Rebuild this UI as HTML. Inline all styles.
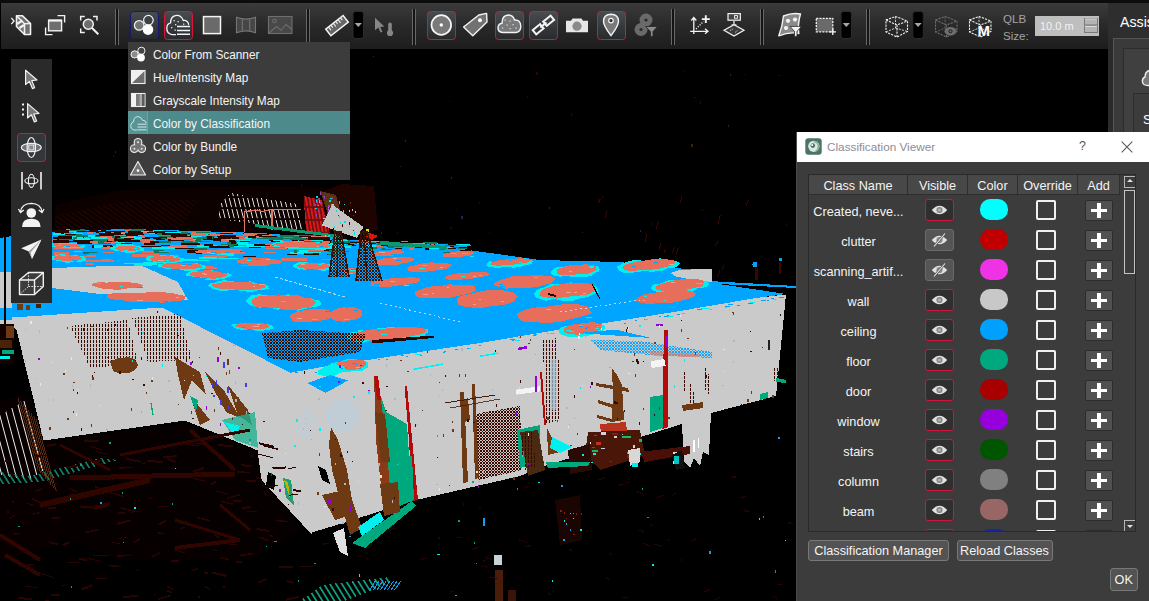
<!DOCTYPE html>
<html>
<head>
<meta charset="utf-8">
<title>Classification Viewer</title>
<style>
html,body{margin:0;padding:0;background:#000;}
body{width:1149px;height:601px;position:relative;overflow:hidden;font-family:"Liberation Sans",sans-serif;font-size:12px;color:#f0f0f0;}
.abs{position:absolute;}
#scene{position:absolute;left:0;top:0;width:1149px;height:601px;}
#topstrip{left:0;top:0;width:1149px;height:3px;background:#0c0c0c;}
#toolbar{left:1px;top:3px;width:1107px;height:46px;background:linear-gradient(#3b3b3b,#2a2a2a 45%,#1d1d1d);}
.tb{position:absolute;top:8px;width:28px;height:28px;border:1px solid transparent;border-radius:3px;}
.tb.on{border-color:#d8143c;background:linear-gradient(#3a3c40,#26282b);}
.tb.nav{border-color:#1c1c74;background:linear-gradient(#3a3c40,#26282b);}
.tb svg{position:absolute;left:0;top:0;width:28px;height:28px;}
.sep{position:absolute;top:6px;width:1px;height:37px;background:#5a5a5a;box-shadow:2px 0 0 #5a5a5a;}
.dd{position:absolute;top:8px;width:9px;height:29px;background:#000;border:1px solid #151515;border-radius:3px;}
.dd:after{content:"";position:absolute;left:1px;top:12px;border:3.5px solid transparent;border-top:4px solid #d0d0d0;}
#menu{left:128px;top:42px;width:222px;height:138px;background:#3c3c3c;}
#menu .it{position:absolute;left:0;width:222px;height:23px;line-height:23px;}
#menu .it span{position:absolute;left:24.5px;top:1.5px;font-size:12.7px;letter-spacing:0;display:inline-block;transform:scaleX(0.932);transform-origin:0 50%;color:#f4f4f4;white-space:nowrap;}
#menu .it.hl{background:#4c8a8c;}
#menu .it svg{position:absolute;left:1px;top:2px;width:19px;height:19px;}
#palette{left:11px;top:59px;width:41px;height:244px;background:#2a2a2a;}
#palette .pi{position:absolute;left:5px;width:28px;height:28px;border:1px solid transparent;border-radius:3px;}
#palette .pi.on{border-color:#d8143c;background:#303236;}
#palette svg{position:absolute;left:0;top:0;width:28px;height:28px;}
#rpanel{left:1108px;top:3px;width:41px;height:598px;background:#2b2b2b;}
#dialog{left:796px;top:132px;width:353px;height:469px;background:#3c3c3c;border-left:1px solid #4a4a4a;box-sizing:border-box;}
#dtitle{left:0;top:0;width:353px;height:30px;background:#fff;}
#dtitle .t{position:absolute;left:30px;top:0;line-height:30px;font-size:11.75px;color:#8c8c98;white-space:nowrap;}
#table{left:11px;top:42px;width:328px;height:358px;border:1px solid #2a2a2a;box-sizing:border-box;overflow:hidden;background:#3c3c3c;}
.th{position:absolute;top:0;height:20px;line-height:23px;background:#484848;border-right:1px solid #2e2e2e;border-bottom:1px solid #2e2e2e;text-align:center;font-size:12.7px;color:#f4f4f4;box-sizing:border-box;}
.row{position:absolute;left:0;width:312px;height:30px;}
.row .nm{position:absolute;left:0;width:99px;top:0;line-height:32px;text-align:center;font-size:12.7px;color:#f4f4f4;white-space:nowrap;}
.row .vis{position:absolute;left:115.5px;top:3px;width:27.5px;height:20px;border:1px solid #d0143c;border-radius:3px;background:#2f2f2f;}
.row .vis.off{border-color:#6a6a6a;background:#555;}
.row .vis svg{position:absolute;left:4px;top:3px;width:19px;height:14px;}
.row .sw{position:absolute;left:171px;top:3px;width:28px;height:21px;border-radius:10px;}
.row .cb{position:absolute;left:227px;top:4px;width:16px;height:16px;border:2px solid #f0f0f0;border-radius:2px;}
.row .add{position:absolute;left:275.5px;top:3.5px;width:26.5px;height:19.5px;border:1px solid #2c2c2c;border-radius:2px;background:#515151;}
.row .add:before{content:"";position:absolute;left:5.5px;top:8px;width:15.5px;height:3.6px;background:#fff;}
.row .add:after{content:"";position:absolute;left:11.5px;top:2.3px;width:3.6px;height:15px;background:#fff;}
.btn{position:absolute;height:19px;line-height:19px;border:1px solid #787878;border-radius:3px;background:#535353;font-size:12.7px;color:#f4f4f4;text-align:center;white-space:nowrap;}
</style>
</head>
<body>
<svg id="scene" viewBox="0 0 1149 601" shape-rendering="crispEdges">
<rect width="1149" height="601" fill="#000"/>
<defs>
<pattern id="dots" width="3" height="4" patternUnits="userSpaceOnUse"><rect x="0" y="0" width="1.2" height="2.6" fill="#3a0a00"/></pattern>
<pattern id="dots2" width="3" height="3" patternUnits="userSpaceOnUse"><rect x="0" y="0" width="2.2" height="1.6" fill="#3a0a00"/><rect x="1.5" y="1.6" width="1.5" height="1.2" fill="#3a0a00"/></pattern>
<pattern id="dotsb" width="3" height="3" patternUnits="userSpaceOnUse"><rect width="3" height="3" fill="#c8c8c8"/><rect x="0" y="0" width="2" height="1.6" fill="#1aa4f6"/><rect x="1.5" y="1.6" width="1.5" height="1.2" fill="#1aa4f6"/></pattern>
<pattern id="hatchr" width="4" height="4" patternUnits="userSpaceOnUse" patternTransform="rotate(35)"><rect width="4" height="4" fill="#000"/><rect width="4" height="1.6" fill="#3a0600"/></pattern>
<pattern id="fence" width="4.6" height="11" patternUnits="userSpaceOnUse" patternTransform="skewX(14)"><rect x="0" y="0" width="1.3" height="9" fill="#f0f0f0"/></pattern>
<pattern id="fencer" width="3.6" height="13" patternUnits="userSpaceOnUse" patternTransform="skewX(10)"><rect x="0" y="0" width="1.6" height="11" fill="#e01818"/></pattern>
<pattern id="fence2" width="7" height="40" patternUnits="userSpaceOnUse" patternTransform="skewX(15)"><rect x="0" y="0" width="1.4" height="40" fill="#f0f0f0"/></pattern>
<pattern id="fence3" width="6" height="40" patternUnits="userSpaceOnUse" patternTransform="skewX(32)"><rect x="0" y="0" width="1.6" height="40" fill="#10a080"/></pattern>
<pattern id="mesh" width="3" height="3" patternUnits="userSpaceOnUse"><rect x="0" y="0" width="1.6" height="1.6" fill="#3a1205"/><rect x="1.6" y="1.6" width="1.4" height="1.4" fill="#3a1205"/></pattern>
</defs>
<polygon points="55,205 120,190 250,186 330,188 372,200 378,236 260,232 130,229 55,232" fill="#0d0100"/>
<polygon points="55,215 130,200 200,200 180,228 55,232" fill="url(#hatchr)" opacity="0.35"/>
<polygon points="60,440 185,424 258,452 300,530 250,560 120,560 20,520 0,470 0,440" fill="#070000"/>
<polygon points="0,238 12,236 52,231 130,229 260,233 380,242 447,247 540,260 620,262 670,268 712,270 712,283 786,294 756,298 706,306.5 680,311 602,323.5 557,330 480,343 400,355 322,367 290,373 162,308 12,318 0,320" fill="#00a5ff"/>
<polygon points="700,280.5 796,286 796,288 700,283" fill="#00a5ff"/>
<polygon points="670,273 680,270 711.5,268.5 711.5,282 700,281.5 676,276.5" fill="#cacaca"/>
<polygon points="0,320 12,318 162,308 290,373 311,533 262,480 258,450 185,420 44,440 17,330 10,322 0,322" fill="#cacaca" stroke="#cacaca" stroke-width="1"/>
<polygon points="289,373 322,367 400,355 480,343 557,330 602,323.5 680,311 706,306.5 756,298 786,294.5 776,396 711,413 709,455 703,452 700,466 694,458 690,468 684,462 682,424 647,435 547,465 520,476 412,501 340,524 310,533" fill="#cacaca"/>
<polygon points="52,268 140,265 178,282 188,300 150,296 100,294 52,288" fill="#cacaca"/>
<rect x="0" y="272" width="12" height="36" fill="#cacaca"/>
<rect x="0" y="308" width="12" height="12" fill="#00a5ff"/>
<rect x="0" y="320" width="12" height="4" fill="#cacaca"/>
<rect x="4" y="236" width="2" height="130" fill="#000"/>
<rect x="141" y="237" width="4" height="3" fill="#e66e5a"/>
<rect x="152" y="240" width="4" height="3" fill="#00f0f0"/>
<rect x="60" y="232" width="5" height="2" fill="#e66e5a"/>
<rect x="282" y="236" width="5" height="1" fill="#10795c"/>
<rect x="226" y="244" width="11" height="1" fill="#e66e5a"/>
<rect x="206" y="235" width="6" height="2" fill="#e66e5a"/>
<rect x="201" y="242" width="16" height="1" fill="#10795c"/>
<rect x="210" y="237" width="7" height="1" fill="#2a0800"/>
<rect x="249" y="245" width="12" height="3" fill="#2a0800"/>
<rect x="268" y="239" width="12" height="2" fill="#2a0800"/>
<rect x="134" y="233" width="8" height="3" fill="#00f0f0"/>
<rect x="197" y="245" width="20" height="2" fill="#00f0f0"/>
<rect x="221" y="242" width="6" height="2" fill="#e66e5a"/>
<rect x="311" y="240" width="11" height="1" fill="#00a5ff"/>
<rect x="206" y="236" width="9" height="2" fill="#10795c"/>
<rect x="189" y="247" width="18" height="1" fill="#e66e5a"/>
<rect x="315" y="249" width="4" height="2" fill="#10795c"/>
<rect x="212" y="234" width="16" height="2" fill="#00f0f0"/>
<rect x="251" y="240" width="21" height="2" fill="#e66e5a"/>
<rect x="221" y="238" width="12" height="1" fill="#00a5ff"/>
<rect x="130" y="230" width="20" height="2" fill="#e66e5a"/>
<rect x="97" y="238" width="11" height="2" fill="#e66e5a"/>
<rect x="279" y="239" width="11" height="2" fill="#10795c"/>
<rect x="298" y="240" width="21" height="1" fill="#e66e5a"/>
<rect x="99" y="230" width="12" height="3" fill="#e66e5a"/>
<rect x="124" y="236" width="3" height="2" fill="#2a0800"/>
<rect x="153" y="250" width="16" height="3" fill="#10795c"/>
<rect x="233" y="242" width="17" height="2" fill="#00a5ff"/>
<rect x="317" y="240" width="11" height="2" fill="#e66e5a"/>
<rect x="185" y="241" width="11" height="1" fill="#e66e5a"/>
<rect x="326" y="240" width="14" height="1" fill="#e66e5a"/>
<rect x="209" y="233" width="13" height="2" fill="#10795c"/>
<rect x="57" y="238" width="6" height="2" fill="#2a0800"/>
<rect x="219" y="241" width="12" height="1" fill="#2a0800"/>
<rect x="328" y="246" width="5" height="1" fill="#00a5ff"/>
<rect x="146" y="232" width="8" height="1" fill="#2a0800"/>
<rect x="56" y="240" width="6" height="3" fill="#e66e5a"/>
<rect x="262" y="237" width="9" height="1" fill="#00a5ff"/>
<rect x="287" y="254" width="10" height="1" fill="#2a0800"/>
<rect x="202" y="234" width="13" height="1" fill="#10795c"/>
<rect x="277" y="252" width="18" height="2" fill="#00a5ff"/>
<rect x="275" y="236" width="7" height="2" fill="#2a0800"/>
<rect x="255" y="249" width="12" height="1" fill="#00a5ff"/>
<rect x="219" y="233" width="10" height="2" fill="#2a0800"/>
<rect x="73" y="237" width="9" height="2" fill="#10795c"/>
<rect x="326" y="242" width="15" height="1" fill="#2a0800"/>
<rect x="305" y="242" width="19" height="1" fill="#2a0800"/>
<rect x="269" y="245" width="17" height="2" fill="#e66e5a"/>
<rect x="171" y="233" width="21" height="2" fill="#2a0800"/>
<rect x="162" y="233" width="21" height="1" fill="#e66e5a"/>
<rect x="328" y="248" width="12" height="1" fill="#10795c"/>
<rect x="281" y="236" width="22" height="2" fill="#e66e5a"/>
<rect x="204" y="233" width="21" height="1" fill="#2a0800"/>
<rect x="260" y="235" width="6" height="1" fill="#00f0f0"/>
<rect x="58" y="231" width="18" height="2" fill="#00f0f0"/>
<rect x="202" y="242" width="19" height="1" fill="#00a5ff"/>
<rect x="149" y="241" width="20" height="2" fill="#2a0800"/>
<rect x="87" y="232" width="6" height="3" fill="#e66e5a"/>
<rect x="294" y="237" width="18" height="1" fill="#e66e5a"/>
<rect x="90" y="241" width="15" height="1" fill="#2a0800"/>
<rect x="67" y="234" width="12" height="1" fill="#2a0800"/>
<rect x="66" y="239" width="7" height="1" fill="#00a5ff"/>
<rect x="77" y="231" width="20" height="1" fill="#2a0800"/>
<rect x="141" y="230" width="21" height="3" fill="#2a0800"/>
<rect x="106" y="231" width="18" height="3" fill="#00f0f0"/>
<rect x="246" y="244" width="20" height="2" fill="#2a0800"/>
<rect x="300" y="238" width="11" height="2" fill="#2a0800"/>
<rect x="138" y="239" width="16" height="2" fill="#e66e5a"/>
<rect x="110" y="230" width="18" height="2" fill="#e66e5a"/>
<rect x="121" y="233" width="6" height="2" fill="#00f0f0"/>
<rect x="259" y="249" width="6" height="1" fill="#e66e5a"/>
<rect x="248" y="244" width="22" height="2" fill="#2a0800"/>
<rect x="168" y="233" width="10" height="2" fill="#2a0800"/>
<rect x="178" y="234" width="16" height="2" fill="#2a0800"/>
<rect x="195" y="238" width="5" height="1" fill="#e66e5a"/>
<rect x="74" y="251" width="8" height="1" fill="#00f0f0"/>
<rect x="262" y="241" width="16" height="2" fill="#2a0800"/>
<rect x="92" y="245" width="20" height="3" fill="#2a0800"/>
<rect x="246" y="236" width="16" height="2" fill="#e66e5a"/>
<rect x="125" y="231" width="3" height="1" fill="#00a5ff"/>
<rect x="123" y="234" width="8" height="1" fill="#2a0800"/>
<rect x="53" y="233" width="22" height="2" fill="#00f0f0"/>
<rect x="224" y="246" width="21" height="1" fill="#00f0f0"/>
<rect x="64" y="233" width="7" height="2" fill="#10795c"/>
<rect x="135" y="230" width="13" height="1" fill="#00f0f0"/>
<rect x="147" y="237" width="3" height="2" fill="#e66e5a"/>
<rect x="54" y="230" width="7" height="2" fill="#00f0f0"/>
<rect x="312" y="247" width="5" height="2" fill="#10795c"/>
<rect x="189" y="236" width="13" height="1" fill="#00f0f0"/>
<rect x="146" y="237" width="19" height="1" fill="#2a0800"/>
<rect x="327" y="253" width="3" height="2" fill="#2a0800"/>
<rect x="96" y="231" width="5" height="2" fill="#2a0800"/>
<rect x="238" y="234" width="9" height="2" fill="#e66e5a"/>
<rect x="94" y="236" width="11" height="2" fill="#2a0800"/>
<rect x="319" y="247" width="8" height="2" fill="#00f0f0"/>
<rect x="150" y="232" width="3" height="2" fill="#e66e5a"/>
<rect x="183" y="237" width="13" height="1" fill="#e66e5a"/>
<rect x="124" y="229" width="5" height="2" fill="#10795c"/>
<rect x="62" y="237" width="7" height="3" fill="#2a0800"/>
<rect x="289" y="236" width="6" height="3" fill="#2a0800"/>
<rect x="264" y="236" width="8" height="3" fill="#10795c"/>
<rect x="91" y="239" width="19" height="3" fill="#10795c"/>
<rect x="170" y="234" width="20" height="3" fill="#10795c"/>
<rect x="284" y="245" width="18" height="3" fill="#00a5ff"/>
<rect x="300" y="241" width="7" height="1" fill="#e66e5a"/>
<rect x="87" y="242" width="10" height="1" fill="#2a0800"/>
<rect x="284" y="246" width="15" height="1" fill="#2a0800"/>
<rect x="124" y="234" width="12" height="1" fill="#00a5ff"/>
<rect x="311" y="239" width="13" height="2" fill="#00f0f0"/>
<rect x="277" y="236" width="19" height="1" fill="#00a5ff"/>
<rect x="262" y="235" width="12" height="2" fill="#e66e5a"/>
<rect x="184" y="244" width="16" height="1" fill="#10795c"/>
<rect x="227" y="236" width="9" height="2" fill="#10795c"/>
<rect x="209" y="243" width="3" height="1" fill="#2a0800"/>
<rect x="125" y="236" width="16" height="2" fill="#00a5ff"/>
<rect x="195" y="243" width="12" height="2" fill="#00a5ff"/>
<rect x="83" y="234" width="22" height="2" fill="#e66e5a"/>
<rect x="131" y="233" width="4" height="3" fill="#2a0800"/>
<rect x="328" y="251" width="21" height="1" fill="#10795c"/>
<rect x="75" y="242" width="17" height="2" fill="#2a0800"/>
<rect x="87" y="234" width="20" height="2" fill="#00f0f0"/>
<rect x="189" y="241" width="20" height="2" fill="#e66e5a"/>
<rect x="95" y="242" width="11" height="1" fill="#2a0800"/>
<rect x="146" y="234" width="9" height="2" fill="#e66e5a"/>
<rect x="141" y="234" width="21" height="1" fill="#00a5ff"/>
<rect x="53" y="237" width="17" height="2" fill="#2a0800"/>
<rect x="68" y="243" width="4" height="2" fill="#00a5ff"/>
<rect x="127" y="241" width="4" height="1" fill="#e66e5a"/>
<rect x="284" y="239" width="8" height="2" fill="#2a0800"/>
<rect x="193" y="252" width="7" height="2" fill="#00a5ff"/>
<rect x="318" y="248" width="15" height="3" fill="#2a0800"/>
<rect x="107" y="240" width="5" height="2" fill="#2a0800"/>
<rect x="222" y="244" width="12" height="3" fill="#e66e5a"/>
<rect x="98" y="243" width="11" height="2" fill="#00f0f0"/>
<rect x="122" y="230" width="11" height="1" fill="#00f0f0"/>
<rect x="185" y="244" width="16" height="1" fill="#e66e5a"/>
<rect x="230" y="242" width="18" height="3" fill="#00f0f0"/>
<rect x="177" y="235" width="9" height="2" fill="#2a0800"/>
<rect x="89" y="230" width="9" height="1" fill="#2a0800"/>
<rect x="117" y="233" width="8" height="3" fill="#00f0f0"/>
<rect x="298" y="235" width="11" height="3" fill="#00f0f0"/>
<rect x="156" y="239" width="9" height="1" fill="#2a0800"/>
<rect x="128" y="234" width="13" height="1" fill="#e66e5a"/>
<rect x="126" y="230" width="8" height="2" fill="#10795c"/>
<rect x="175" y="247" width="20" height="1" fill="#e66e5a"/>
<rect x="59" y="234" width="16" height="2" fill="#10795c"/>
<rect x="187" y="250" width="21" height="3" fill="#2a0800"/>
<rect x="322" y="245" width="8" height="1" fill="#00f0f0"/>
<rect x="93" y="242" width="21" height="2" fill="#e66e5a"/>
<rect x="204" y="234" width="4" height="1" fill="#00f0f0"/>
<rect x="209" y="246" width="21" height="2" fill="#2a0800"/>
<rect x="228" y="236" width="16" height="1" fill="#e66e5a"/>
<rect x="70" y="241" width="10" height="1" fill="#00a5ff"/>
<rect x="218" y="234" width="3" height="2" fill="#2a0800"/>
<rect x="128" y="236" width="8" height="3" fill="#00f0f0"/>
<rect x="203" y="247" width="4" height="2" fill="#00a5ff"/>
<rect x="232" y="238" width="20" height="2" fill="#e66e5a"/>
<rect x="122" y="231" width="16" height="2" fill="#00f0f0"/>
<rect x="188" y="236" width="10" height="2" fill="#00f0f0"/>
<rect x="52" y="243" width="9" height="3" fill="#e66e5a"/>
<rect x="107" y="237" width="19" height="1" fill="#2a0800"/>
<rect x="112" y="230" width="17" height="2" fill="#e66e5a"/>
<rect x="317" y="241" width="7" height="2" fill="#10795c"/>
<rect x="66" y="229" width="14" height="2" fill="#e66e5a"/>
<rect x="110" y="234" width="4" height="1" fill="#e66e5a"/>
<rect x="160" y="231" width="20" height="2" fill="#00a5ff"/>
<rect x="82" y="234" width="7" height="3" fill="#00a5ff"/>
<rect x="181" y="233" width="9" height="2" fill="#2a0800"/>
<rect x="326" y="240" width="4" height="1" fill="#2a0800"/>
<rect x="168" y="232" width="20" height="3" fill="#00a5ff"/>
<rect x="108" y="239" width="19" height="2" fill="#e66e5a"/>
<rect x="64" y="242" width="12" height="2" fill="#2a0800"/>
<rect x="307" y="238" width="20" height="1" fill="#10795c"/>
<rect x="165" y="238" width="18" height="2" fill="#e66e5a"/>
<rect x="155" y="246" width="4" height="1" fill="#00a5ff"/>
<rect x="68" y="233" width="15" height="2" fill="#00f0f0"/>
<rect x="144" y="232" width="17" height="2" fill="#00f0f0"/>
<rect x="133" y="230" width="17" height="3" fill="#00a5ff"/>
<rect x="228" y="234" width="7" height="2" fill="#00a5ff"/>
<rect x="318" y="236" width="21" height="2" fill="#00a5ff"/>
<rect x="120" y="238" width="21" height="1" fill="#e66e5a"/>
<rect x="275" y="239" width="17" height="1" fill="#10795c"/>
<rect x="116" y="235" width="18" height="3" fill="#e66e5a"/>
<rect x="193" y="239" width="10" height="1" fill="#00f0f0"/>
<rect x="164" y="236" width="13" height="1" fill="#2a0800"/>
<rect x="297" y="243" width="22" height="2" fill="#10795c"/>
<rect x="74" y="238" width="16" height="2" fill="#e66e5a"/>
<rect x="116" y="235" width="11" height="3" fill="#10795c"/>
<rect x="116" y="244" width="17" height="2" fill="#00f0f0"/>
<rect x="128" y="233" width="8" height="2" fill="#00a5ff"/>
<rect x="123" y="234" width="7" height="2" fill="#10795c"/>
<rect x="103" y="231" width="4" height="2" fill="#00f0f0"/>
<rect x="192" y="233" width="15" height="1" fill="#e66e5a"/>
<rect x="51" y="245" width="20" height="1" fill="#2a0800"/>
<rect x="306" y="242" width="5" height="1" fill="#10795c"/>
<rect x="322" y="238" width="14" height="1" fill="#2a0800"/>
<rect x="194" y="237" width="18" height="1" fill="#e66e5a"/>
<rect x="228" y="243" width="16" height="2" fill="#00f0f0"/>
<rect x="60" y="230" width="22" height="1" fill="#10795c"/>
<rect x="255" y="236" width="20" height="1" fill="#2a0800"/>
<rect x="165" y="239" width="4" height="1" fill="#00a5ff"/>
<rect x="189" y="240" width="12" height="2" fill="#e66e5a"/>
<rect x="273" y="237" width="13" height="1" fill="#2a0800"/>
<rect x="245" y="237" width="11" height="2" fill="#10795c"/>
<rect x="136" y="237" width="14" height="2" fill="#2a0800"/>
<rect x="167" y="233" width="19" height="2" fill="#10795c"/>
<rect x="105" y="230" width="3" height="1" fill="#2a0800"/>
<rect x="82" y="235" width="5" height="3" fill="#2a0800"/>
<rect x="179" y="232" width="13" height="2" fill="#e66e5a"/>
<rect x="210" y="233" width="21" height="3" fill="#e66e5a"/>
<rect x="91" y="231" width="21" height="1" fill="#2a0800"/>
<rect x="187" y="242" width="18" height="1" fill="#00f0f0"/>
<rect x="85" y="252" width="12" height="1" fill="#10795c"/>
<rect x="309" y="244" width="10" height="3" fill="#00a5ff"/>
<rect x="281" y="243" width="7" height="2" fill="#10795c"/>
<rect x="287" y="248" width="19" height="1" fill="#10795c"/>
<rect x="111" y="238" width="10" height="1" fill="#e66e5a"/>
<rect x="119" y="235" width="17" height="1" fill="#e66e5a"/>
<rect x="297" y="242" width="16" height="2" fill="#e66e5a"/>
<rect x="159" y="241" width="12" height="2" fill="#10795c"/>
<rect x="168" y="239" width="16" height="2" fill="#2a0800"/>
<rect x="173" y="235" width="3" height="3" fill="#2a0800"/>
<rect x="180" y="243" width="19" height="1" fill="#00a5ff"/>
<rect x="183" y="235" width="5" height="1" fill="#2a0800"/>
<rect x="171" y="239" width="13" height="1" fill="#e66e5a"/>
<rect x="228" y="238" width="5" height="2" fill="#00a5ff"/>
<rect x="252" y="246" width="20" height="1" fill="#e66e5a"/>
<rect x="290" y="242" width="22" height="1" fill="#00f0f0"/>
<rect x="87" y="235" width="18" height="1" fill="#10795c"/>
<rect x="271" y="239" width="21" height="1" fill="#2a0800"/>
<rect x="221" y="232" width="15" height="2" fill="#e66e5a"/>
<rect x="121" y="237" width="21" height="2" fill="#00f0f0"/>
<rect x="216" y="237" width="10" height="1" fill="#e66e5a"/>
<rect x="163" y="235" width="15" height="2" fill="#10795c"/>
<rect x="142" y="241" width="8" height="3" fill="#e66e5a"/>
<rect x="228" y="244" width="10" height="2" fill="#2a0800"/>
<rect x="196" y="239" width="8" height="3" fill="#10795c"/>
<rect x="290" y="252" width="17" height="2" fill="#00f0f0"/>
<rect x="155" y="233" width="9" height="1" fill="#2a0800"/>
<rect x="114" y="233" width="15" height="1" fill="#00f0f0"/>
<rect x="280" y="235" width="22" height="3" fill="#10795c"/>
<rect x="301" y="248" width="17" height="1" fill="#00f0f0"/>
<rect x="92" y="236" width="13" height="1" fill="#e66e5a"/>
<rect x="187" y="237" width="15" height="1" fill="#e66e5a"/>
<rect x="65" y="236" width="13" height="3" fill="#00f0f0"/>
<rect x="166" y="233" width="9" height="1" fill="#00f0f0"/>
<rect x="153" y="232" width="3" height="1" fill="#00a5ff"/>
<rect x="92" y="234" width="5" height="1" fill="#10795c"/>
<rect x="269" y="240" width="3" height="3" fill="#2a0800"/>
<rect x="217" y="236" width="14" height="3" fill="#2a0800"/>
<rect x="255" y="234" width="4" height="3" fill="#e66e5a"/>
<rect x="164" y="250" width="8" height="1" fill="#00a5ff"/>
<rect x="79" y="239" width="7" height="2" fill="#00f0f0"/>
<rect x="195" y="240" width="15" height="2" fill="#10795c"/>
<rect x="99" y="232" width="4" height="2" fill="#00a5ff"/>
<rect x="201" y="239" width="10" height="2" fill="#00a5ff"/>
<rect x="305" y="247" width="6" height="1" fill="#00f0f0"/>
<rect x="115" y="235" width="4" height="2" fill="#00a5ff"/>
<rect x="309" y="242" width="4" height="3" fill="#10795c"/>
<rect x="172" y="233" width="18" height="3" fill="#00f0f0"/>
<rect x="133" y="246" width="5" height="3" fill="#e66e5a"/>
<rect x="98" y="237" width="20" height="1" fill="#e66e5a"/>
<rect x="259" y="242" width="9" height="1" fill="#2a0800"/>
<rect x="304" y="252" width="15" height="3" fill="#2a0800"/>
<rect x="182" y="232" width="4" height="1" fill="#10795c"/>
<rect x="298" y="235" width="18" height="2" fill="#10795c"/>
<rect x="214" y="237" width="4" height="1" fill="#e66e5a"/>
<rect x="224" y="234" width="6" height="1" fill="#00a5ff"/>
<rect x="58" y="242" width="15" height="1" fill="#00a5ff"/>
<rect x="63" y="233" width="19" height="2" fill="#00f0f0"/>
<rect x="279" y="242" width="4" height="2" fill="#e66e5a"/>
<rect x="119" y="246" width="7" height="1" fill="#e66e5a"/>
<rect x="316" y="248" width="5" height="2" fill="#2a0800"/>
<rect x="78" y="237" width="5" height="1" fill="#00f0f0"/>
<rect x="139" y="231" width="8" height="2" fill="#e66e5a"/>
<rect x="250" y="234" width="10" height="2" fill="#00a5ff"/>
<rect x="320" y="253" width="15" height="1" fill="#00a5ff"/>
<rect x="166" y="231" width="11" height="1" fill="#2a0800"/>
<rect x="181" y="242" width="17" height="1" fill="#10795c"/>
<rect x="280" y="238" width="6" height="1" fill="#2a0800"/>
<rect x="107" y="231" width="3" height="2" fill="#e66e5a"/>
<rect x="273" y="238" width="10" height="3" fill="#00f0f0"/>
<rect x="212" y="242" width="6" height="1" fill="#00a5ff"/>
<rect x="115" y="240" width="18" height="2" fill="#00a5ff"/>
<rect x="328" y="254" width="14" height="1" fill="#10795c"/>
<rect x="141" y="246" width="20" height="1" fill="#2a0800"/>
<rect x="299" y="247" width="3" height="1" fill="#00f0f0"/>
<rect x="124" y="238" width="10" height="1" fill="#2a0800"/>
<rect x="86" y="235" width="14" height="3" fill="#10795c"/>
<rect x="59" y="239" width="19" height="2" fill="#10795c"/>
<rect x="205" y="237" width="9" height="2" fill="#2a0800"/>
<rect x="243" y="233" width="9" height="1" fill="#2a0800"/>
<rect x="104" y="236" width="9" height="3" fill="#e66e5a"/>
<rect x="253" y="248" width="14" height="2" fill="#e66e5a"/>
<rect x="116" y="231" width="21" height="2" fill="#00a5ff"/>
<rect x="329" y="243" width="7" height="1" fill="#e66e5a"/>
<rect x="273" y="245" width="17" height="2" fill="#00f0f0"/>
<rect x="105" y="232" width="7" height="2" fill="#2a0800"/>
<rect x="60" y="232" width="11" height="2" fill="#00a5ff"/>
<rect x="112" y="236" width="3" height="2" fill="#10795c"/>
<rect x="257" y="234" width="3" height="1" fill="#2a0800"/>
<rect x="246" y="244" width="19" height="3" fill="#00f0f0"/>
<rect x="240" y="240" width="15" height="2" fill="#2a0800"/>
<rect x="138" y="232" width="11" height="2" fill="#00a5ff"/>
<rect x="250" y="236" width="6" height="2" fill="#2a0800"/>
<rect x="177" y="237" width="16" height="1" fill="#10795c"/>
<rect x="142" y="236" width="3" height="2" fill="#e66e5a"/>
<rect x="61" y="234" width="18" height="1" fill="#2a0800"/>
<rect x="147" y="231" width="19" height="2" fill="#2a0800"/>
<rect x="107" y="231" width="18" height="2" fill="#2a0800"/>
<rect x="146" y="230" width="17" height="2" fill="#00f0f0"/>
<rect x="327" y="240" width="21" height="3" fill="#2a0800"/>
<rect x="229" y="242" width="8" height="2" fill="#2a0800"/>
<rect x="67" y="247" width="15" height="2" fill="#10795c"/>
<rect x="124" y="238" width="7" height="2" fill="#2a0800"/>
<rect x="322" y="259" width="12" height="1" fill="#e66e5a"/>
<rect x="310" y="236" width="4" height="1" fill="#2a0800"/>
<rect x="230" y="236" width="6" height="2" fill="#2a0800"/>
<rect x="329" y="252" width="17" height="1" fill="#00a5ff"/>
<rect x="283" y="245" width="8" height="2" fill="#10795c"/>
<rect x="121" y="243" width="11" height="1" fill="#2a0800"/>
<rect x="51" y="230" width="8" height="2" fill="#2a0800"/>
<rect x="184" y="238" width="11" height="1" fill="#10795c"/>
<rect x="301" y="239" width="10" height="1" fill="#10795c"/>
<rect x="304" y="241" width="18" height="1" fill="#2a0800"/>
<rect x="283" y="235" width="3" height="1" fill="#10795c"/>
<rect x="132" y="230" width="15" height="3" fill="#e66e5a"/>
<rect x="289" y="238" width="18" height="1" fill="#2a0800"/>
<rect x="272" y="243" width="6" height="3" fill="#00a5ff"/>
<rect x="75" y="238" width="15" height="2" fill="#00f0f0"/>
<rect x="188" y="238" width="7" height="1" fill="#00a5ff"/>
<rect x="285" y="237" width="5" height="2" fill="#00f0f0"/>
<rect x="282" y="238" width="12" height="3" fill="#e66e5a"/>
<rect x="186" y="243" width="8" height="1" fill="#2a0800"/>
<rect x="218" y="240" width="17" height="1" fill="#2a0800"/>
<rect x="181" y="243" width="19" height="2" fill="#2a0800"/>
<rect x="167" y="235" width="21" height="1" fill="#e66e5a"/>
<rect x="228" y="234" width="15" height="2" fill="#00a5ff"/>
<rect x="325" y="237" width="13" height="2" fill="#00a5ff"/>
<rect x="301" y="249" width="15" height="2" fill="#e66e5a"/>
<rect x="291" y="238" width="10" height="2" fill="#00a5ff"/>
<rect x="197" y="232" width="11" height="2" fill="#00f0f0"/>
<rect x="205" y="238" width="19" height="2" fill="#2a0800"/>
<rect x="282" y="243" width="8" height="3" fill="#2a0800"/>
<rect x="323" y="242" width="15" height="1" fill="#2a0800"/>
<rect x="104" y="230" width="21" height="1" fill="#00a5ff"/>
<rect x="329" y="241" width="11" height="3" fill="#2a0800"/>
<rect x="203" y="239" width="3" height="1" fill="#2a0800"/>
<rect x="220" y="235" width="16" height="3" fill="#2a0800"/>
<rect x="221" y="242" width="16" height="3" fill="#10795c"/>
<rect x="73" y="237" width="4" height="2" fill="#10795c"/>
<rect x="264" y="238" width="4" height="1" fill="#10795c"/>
<rect x="54" y="232" width="20" height="1" fill="#00a5ff"/>
<rect x="137" y="234" width="7" height="1" fill="#2a0800"/>
<rect x="56" y="246" width="14" height="3" fill="#e66e5a"/>
<rect x="189" y="248" width="18" height="2" fill="#10795c"/>
<rect x="245" y="235" width="11" height="1" fill="#e66e5a"/>
<rect x="240" y="256" width="16" height="1" fill="#2a0800"/>
<rect x="266" y="250" width="13" height="1" fill="#10795c"/>
<rect x="182" y="241" width="11" height="1" fill="#10795c"/>
<rect x="237" y="240" width="22" height="1" fill="#00f0f0"/>
<rect x="293" y="236" width="17" height="1" fill="#2a0800"/>
<rect x="255" y="235" width="7" height="1" fill="#2a0800"/>
<rect x="267" y="238" width="17" height="1" fill="#00f0f0"/>
<rect x="226" y="250" width="16" height="2" fill="#10795c"/>
<rect x="311" y="236" width="17" height="1" fill="#e66e5a"/>
<rect x="54" y="252" width="15" height="3" fill="#e66e5a"/>
<rect x="159" y="235" width="21" height="2" fill="#10795c"/>
<rect x="67" y="240" width="10" height="3" fill="#00a5ff"/>
<rect x="173" y="233" width="18" height="2" fill="#10795c"/>
<rect x="96" y="234" width="18" height="2" fill="#2a0800"/>
<rect x="268" y="241" width="17" height="2" fill="#00f0f0"/>
<rect x="128" y="231" width="15" height="3" fill="#2a0800"/>
<rect x="293" y="235" width="6" height="2" fill="#10795c"/>
<rect x="170" y="232" width="20" height="2" fill="#2a0800"/>
<rect x="242" y="248" width="18" height="2" fill="#00a5ff"/>
<rect x="50" y="240" width="8" height="2" fill="#e66e5a"/>
<rect x="214" y="240" width="4" height="1" fill="#00a5ff"/>
<rect x="299" y="252" width="22" height="1" fill="#00f0f0"/>
<rect x="323" y="239" width="18" height="2" fill="#2a0800"/>
<rect x="200" y="242" width="13" height="2" fill="#00a5ff"/>
<rect x="157" y="233" width="22" height="2" fill="#10795c"/>
<rect x="66" y="243" width="11" height="1" fill="#00f0f0"/>
<rect x="214" y="241" width="13" height="3" fill="#00a5ff"/>
<rect x="149" y="230" width="4" height="2" fill="#10795c"/>
<rect x="196" y="232" width="9" height="3" fill="#10795c"/>
<rect x="107" y="246" width="7" height="1" fill="#e66e5a"/>
<rect x="276" y="237" width="10" height="3" fill="#e66e5a"/>
<rect x="119" y="240" width="21" height="2" fill="#2a0800"/>
<rect x="293" y="242" width="5" height="2" fill="#10795c"/>
<rect x="59" y="236" width="8" height="3" fill="#e66e5a"/>
<rect x="76" y="234" width="14" height="3" fill="#10795c"/>
<rect x="110" y="246" width="21" height="2" fill="#2a0800"/>
<rect x="77" y="240" width="15" height="1" fill="#00f0f0"/>
<rect x="286" y="238" width="9" height="1" fill="#2a0800"/>
<rect x="73" y="240" width="20" height="2" fill="#2a0800"/>
<rect x="315" y="239" width="20" height="1" fill="#10795c"/>
<rect x="229" y="245" width="5" height="2" fill="#10795c"/>
<rect x="115" y="236" width="5" height="3" fill="#2a0800"/>
<rect x="101" y="234" width="7" height="1" fill="#e66e5a"/>
<rect x="61" y="236" width="8" height="2" fill="#e66e5a"/>
<rect x="303" y="249" width="4" height="3" fill="#00a5ff"/>
<rect x="257" y="243" width="17" height="2" fill="#e66e5a"/>
<rect x="78" y="229" width="7" height="2" fill="#10795c"/>
<rect x="216" y="233" width="17" height="1" fill="#2a0800"/>
<rect x="141" y="230" width="12" height="1" fill="#2a0800"/>
<rect x="117" y="234" width="6" height="1" fill="#2a0800"/>
<rect x="251" y="234" width="21" height="1" fill="#e66e5a"/>
<rect x="312" y="238" width="19" height="1" fill="#00a5ff"/>
<rect x="175" y="248" width="19" height="1" fill="#2a0800"/>
<rect x="322" y="248" width="9" height="1" fill="#2a0800"/>
<rect x="82" y="234" width="17" height="1" fill="#00a5ff"/>
<rect x="176" y="237" width="20" height="2" fill="#e66e5a"/>
<rect x="125" y="233" width="8" height="2" fill="#2a0800"/>
<rect x="275" y="237" width="8" height="1" fill="#2a0800"/>
<rect x="178" y="236" width="13" height="1" fill="#2a0800"/>
<rect x="184" y="231" width="8" height="2" fill="#00a5ff"/>
<rect x="106" y="247" width="22" height="1" fill="#e66e5a"/>
<rect x="159" y="251" width="11" height="1" fill="#e66e5a"/>
<rect x="283" y="239" width="15" height="2" fill="#00a5ff"/>
<rect x="192" y="232" width="13" height="2" fill="#e66e5a"/>
<rect x="271" y="241" width="10" height="1" fill="#2a0800"/>
<rect x="111" y="232" width="14" height="1" fill="#e66e5a"/>
<rect x="196" y="232" width="14" height="1" fill="#10795c"/>
<rect x="255" y="239" width="17" height="1" fill="#00f0f0"/>
<rect x="88" y="235" width="7" height="2" fill="#00f0f0"/>
<rect x="53" y="240" width="16" height="3" fill="#2a0800"/>
<rect x="285" y="244" width="10" height="2" fill="#10795c"/>
<rect x="292" y="240" width="12" height="1" fill="#2a0800"/>
<rect x="305" y="253" width="8" height="1" fill="#10795c"/>
<rect x="283" y="237" width="10" height="1" fill="#00a5ff"/>
<rect x="154" y="231" width="13" height="2" fill="#2a0800"/>
<rect x="70" y="229" width="10" height="1" fill="#2a0800"/>
<rect x="268" y="242" width="20" height="2" fill="#e66e5a"/>
<rect x="317" y="244" width="12" height="3" fill="#e66e5a"/>
<rect x="199" y="233" width="21" height="1" fill="#10795c"/>
<rect x="101" y="229" width="5" height="2" fill="#2a0800"/>
<rect x="279" y="238" width="16" height="1" fill="#00f0f0"/>
<rect x="55" y="230" width="14" height="3" fill="#2a0800"/>
<rect x="196" y="233" width="20" height="1" fill="#e66e5a"/>
<rect x="126" y="233" width="12" height="3" fill="#2a0800"/>
<rect x="263" y="237" width="20" height="3" fill="#10795c"/>
<rect x="114" y="232" width="7" height="3" fill="#2a0800"/>
<rect x="259" y="242" width="21" height="2" fill="#00a5ff"/>
<rect x="168" y="245" width="19" height="3" fill="#e66e5a"/>
<rect x="161" y="245" width="9" height="1" fill="#2a0800"/>
<rect x="250" y="239" width="19" height="3" fill="#00a5ff"/>
<rect x="326" y="240" width="14" height="2" fill="#2a0800"/>
<rect x="91" y="237" width="16" height="2" fill="#00f0f0"/>
<rect x="294" y="235" width="5" height="1" fill="#e66e5a"/>
<rect x="141" y="231" width="7" height="1" fill="#00f0f0"/>
<rect x="89" y="244" width="21" height="1" fill="#00a5ff"/>
<rect x="324" y="239" width="21" height="1" fill="#e66e5a"/>
<rect x="292" y="249" width="15" height="3" fill="#00a5ff"/>
<rect x="309" y="249" width="15" height="2" fill="#e66e5a"/>
<rect x="196" y="252" width="8" height="2" fill="#2a0800"/>
<rect x="231" y="241" width="5" height="3" fill="#2a0800"/>
<rect x="302" y="245" width="21" height="2" fill="#e66e5a"/>
<rect x="193" y="237" width="20" height="2" fill="#10795c"/>
<rect x="131" y="229" width="13" height="2" fill="#10795c"/>
<rect x="245" y="237" width="7" height="2" fill="#00f0f0"/>
<rect x="204" y="244" width="9" height="2" fill="#2a0800"/>
<rect x="279" y="248" width="4" height="2" fill="#00f0f0"/>
<rect x="103" y="252" width="11" height="2" fill="#e66e5a"/>
<rect x="291" y="241" width="8" height="3" fill="#2a0800"/>
<rect x="188" y="237" width="9" height="1" fill="#e66e5a"/>
<rect x="220" y="240" width="13" height="2" fill="#2a0800"/>
<rect x="256" y="244" width="5" height="1" fill="#10795c"/>
<rect x="257" y="238" width="10" height="1" fill="#10795c"/>
<rect x="221" y="239" width="8" height="3" fill="#e66e5a"/>
<rect x="257" y="234" width="12" height="1" fill="#2a0800"/>
<rect x="294" y="250" width="3" height="3" fill="#10795c"/>
<rect x="83" y="252" width="6" height="2" fill="#10795c"/>
<rect x="220" y="249" width="10" height="2" fill="#00a5ff"/>
<rect x="178" y="232" width="10" height="3" fill="#10795c"/>
<rect x="158" y="237" width="9" height="2" fill="#2a0800"/>
<rect x="174" y="234" width="6" height="3" fill="#2a0800"/>
<rect x="213" y="239" width="5" height="2" fill="#2a0800"/>
<rect x="321" y="241" width="9" height="2" fill="#e66e5a"/>
<rect x="57" y="233" width="8" height="2" fill="#00f0f0"/>
<rect x="308" y="237" width="22" height="3" fill="#2a0800"/>
<rect x="254" y="244" width="11" height="2" fill="#2a0800"/>
<rect x="61" y="233" width="3" height="1" fill="#2a0800"/>
<rect x="114" y="238" width="11" height="3" fill="#2a0800"/>
<rect x="232" y="237" width="7" height="2" fill="#2a0800"/>
<rect x="162" y="232" width="18" height="3" fill="#2a0800"/>
<rect x="244" y="233" width="10" height="2" fill="#e66e5a"/>
<rect x="281" y="238" width="13" height="1" fill="#10795c"/>
<rect x="300" y="241" width="22" height="2" fill="#10795c"/>
<rect x="94" y="245" width="9" height="3" fill="#00f0f0"/>
<rect x="191" y="233" width="15" height="3" fill="#e66e5a"/>
<rect x="149" y="235" width="22" height="1" fill="#00a5ff"/>
<rect x="165" y="232" width="16" height="1" fill="#00f0f0"/>
<rect x="161" y="238" width="5" height="1" fill="#10795c"/>
<rect x="58" y="236" width="14" height="3" fill="#2a0800"/>
<rect x="329" y="250" width="14" height="2" fill="#10795c"/>
<rect x="84" y="237" width="5" height="1" fill="#e66e5a"/>
<rect x="98" y="242" width="13" height="2" fill="#10795c"/>
<rect x="171" y="234" width="16" height="3" fill="#2a0800"/>
<rect x="90" y="241" width="8" height="2" fill="#e66e5a"/>
<rect x="59" y="241" width="21" height="1" fill="#2a0800"/>
<rect x="104" y="242" width="15" height="1" fill="#e66e5a"/>
<rect x="112" y="241" width="4" height="1" fill="#10795c"/>
<rect x="117" y="238" width="7" height="1" fill="#10795c"/>
<rect x="289" y="242" width="19" height="2" fill="#2a0800"/>
<rect x="219" y="250" width="21" height="2" fill="#e66e5a"/>
<rect x="118" y="240" width="7" height="2" fill="#2a0800"/>
<rect x="295" y="244" width="12" height="1" fill="#e66e5a"/>
<rect x="99" y="233" width="21" height="2" fill="#2a0800"/>
<rect x="207" y="236" width="5" height="3" fill="#2a0800"/>
<rect x="144" y="243" width="11" height="2" fill="#2a0800"/>
<rect x="119" y="248" width="7" height="2" fill="#2a0800"/>
<rect x="116" y="242" width="9" height="1" fill="#00f0f0"/>
<rect x="248" y="236" width="5" height="2" fill="#2a0800"/>
<rect x="284" y="241" width="19" height="1" fill="#e66e5a"/>
<rect x="153" y="237" width="7" height="2" fill="#2a0800"/>
<rect x="226" y="239" width="12" height="1" fill="#00f0f0"/>
<rect x="290" y="238" width="16" height="2" fill="#10795c"/>
<rect x="447" y="246" width="6" height="2" fill="#10795c"/>
<rect x="358" y="242" width="13" height="1" fill="#10795c"/>
<rect x="397" y="244" width="11" height="1" fill="#e66e5a"/>
<rect x="415" y="243" width="9" height="1" fill="#e66e5a"/>
<rect x="381" y="243" width="12" height="1" fill="#00f0f0"/>
<rect x="416" y="243" width="4" height="2" fill="#2a0800"/>
<rect x="435" y="243" width="11" height="1" fill="#00f0f0"/>
<rect x="368" y="243" width="12" height="1" fill="#2a0800"/>
<rect x="376" y="243" width="10" height="2" fill="#00a5ff"/>
<rect x="442" y="247" width="13" height="1" fill="#e66e5a"/>
<rect x="378" y="243" width="13" height="1" fill="#10795c"/>
<rect x="421" y="248" width="8" height="1" fill="#2a0800"/>
<rect x="448" y="246" width="6" height="2" fill="#10795c"/>
<rect x="358" y="242" width="10" height="1" fill="#e66e5a"/>
<rect x="409" y="248" width="5" height="2" fill="#e66e5a"/>
<rect x="402" y="244" width="10" height="1" fill="#10795c"/>
<rect x="439" y="249" width="6" height="1" fill="#10795c"/>
<rect x="419" y="245" width="7" height="1" fill="#e66e5a"/>
<rect x="438" y="243" width="3" height="2" fill="#10795c"/>
<rect x="420" y="245" width="14" height="2" fill="#e66e5a"/>
<rect x="335" y="242" width="7" height="1" fill="#2a0800"/>
<rect x="420" y="248" width="7" height="2" fill="#10795c"/>
<rect x="438" y="243" width="13" height="1" fill="#2a0800"/>
<rect x="451" y="245" width="11" height="2" fill="#10795c"/>
<rect x="438" y="246" width="4" height="2" fill="#00f0f0"/>
<rect x="386" y="244" width="9" height="1" fill="#2a0800"/>
<rect x="429" y="248" width="12" height="1" fill="#00f0f0"/>
<rect x="401" y="243" width="14" height="2" fill="#00f0f0"/>
<rect x="401" y="241" width="7" height="1" fill="#e66e5a"/>
<rect x="356" y="241" width="6" height="1" fill="#10795c"/>
<rect x="422" y="244" width="6" height="2" fill="#10795c"/>
<rect x="388" y="244" width="13" height="1" fill="#10795c"/>
<rect x="369" y="242" width="9" height="1" fill="#10795c"/>
<rect x="436" y="244" width="9" height="1" fill="#10795c"/>
<rect x="417" y="246" width="11" height="1" fill="#e66e5a"/>
<rect x="420" y="245" width="3" height="1" fill="#00f0f0"/>
<rect x="336" y="242" width="4" height="1" fill="#2a0800"/>
<rect x="455" y="245" width="5" height="1" fill="#2a0800"/>
<rect x="404" y="243" width="4" height="1" fill="#00a5ff"/>
<rect x="393" y="246" width="11" height="1" fill="#10795c"/>
<rect x="403" y="245" width="8" height="1" fill="#00a5ff"/>
<rect x="401" y="244" width="3" height="1" fill="#10795c"/>
<rect x="367" y="245" width="11" height="2" fill="#00f0f0"/>
<rect x="340" y="244" width="11" height="1" fill="#00a5ff"/>
<rect x="381" y="243" width="14" height="2" fill="#00a5ff"/>
<rect x="446" y="246" width="11" height="1" fill="#00a5ff"/>
<rect x="423" y="244" width="7" height="2" fill="#00a5ff"/>
<rect x="376" y="246" width="6" height="1" fill="#10795c"/>
<rect x="450" y="245" width="4" height="1" fill="#10795c"/>
<rect x="434" y="245" width="13" height="2" fill="#2a0800"/>
<rect x="448" y="248" width="8" height="1" fill="#2a0800"/>
<rect x="408" y="243" width="10" height="1" fill="#10795c"/>
<rect x="360" y="244" width="7" height="1" fill="#00a5ff"/>
<rect x="387" y="245" width="5" height="2" fill="#2a0800"/>
<rect x="330" y="243" width="12" height="1" fill="#00f0f0"/>
<rect x="367" y="247" width="10" height="2" fill="#10795c"/>
<rect x="385" y="243" width="10" height="1" fill="#10795c"/>
<rect x="351" y="243" width="6" height="1" fill="#00a5ff"/>
<rect x="403" y="243" width="4" height="1" fill="#10795c"/>
<rect x="390" y="243" width="14" height="2" fill="#00a5ff"/>
<rect x="350" y="244" width="4" height="1" fill="#10795c"/>
<rect x="418" y="245" width="10" height="1" fill="#10795c"/>
<rect x="404" y="246" width="10" height="1" fill="#00a5ff"/>
<rect x="375" y="242" width="13" height="1" fill="#00a5ff"/>
<rect x="355" y="242" width="4" height="2" fill="#10795c"/>
<rect x="378" y="245" width="9" height="1" fill="#2a0800"/>
<rect x="399" y="245" width="4" height="1" fill="#00f0f0"/>
<rect x="401" y="243" width="4" height="1" fill="#10795c"/>
<rect x="342" y="242" width="8" height="2" fill="#2a0800"/>
<rect x="359" y="241" width="9" height="1" fill="#10795c"/>
<rect x="397" y="243" width="7" height="1" fill="#00a5ff"/>
<rect x="387" y="242" width="12" height="2" fill="#10795c"/>
<rect x="423" y="242" width="14" height="2" fill="#10795c"/>
<rect x="343" y="241" width="12" height="1" fill="#10795c"/>
<rect x="352" y="245" width="12" height="1" fill="#2a0800"/>
<rect x="431" y="244" width="4" height="1" fill="#e66e5a"/>
<rect x="378" y="246" width="5" height="1" fill="#e66e5a"/>
<rect x="422" y="243" width="8" height="1" fill="#10795c"/>
<rect x="459" y="244" width="11" height="1" fill="#00f0f0"/>
<rect x="378" y="243" width="12" height="2" fill="#10795c"/>
<rect x="332" y="239" width="9" height="2" fill="#2a0800"/>
<rect x="424" y="245" width="3" height="2" fill="#2a0800"/>
<rect x="343" y="246" width="4" height="2" fill="#00f0f0"/>
<rect x="363" y="242" width="5" height="1" fill="#e66e5a"/>
<rect x="439" y="245" width="3" height="1" fill="#e66e5a"/>
<rect x="434" y="244" width="5" height="2" fill="#2a0800"/>
<rect x="444" y="247" width="9" height="1" fill="#10795c"/>
<rect x="460" y="250" width="11" height="1" fill="#2a0800"/>
<rect x="332" y="240" width="9" height="1" fill="#00a5ff"/>
<rect x="439" y="245" width="4" height="2" fill="#00a5ff"/>
<rect x="414" y="248" width="14" height="2" fill="#00a5ff"/>
<rect x="388" y="246" width="6" height="2" fill="#10795c"/>
<rect x="340" y="241" width="13" height="2" fill="#10795c"/>
<rect x="336" y="242" width="5" height="1" fill="#10795c"/>
<rect x="391" y="245" width="7" height="1" fill="#2a0800"/>
<rect x="405" y="243" width="7" height="1" fill="#00f0f0"/>
<rect x="390" y="242" width="5" height="2" fill="#00f0f0"/>
<rect x="365" y="240" width="6" height="2" fill="#2a0800"/>
<rect x="376" y="245" width="5" height="2" fill="#e66e5a"/>
<rect x="449" y="246" width="13" height="1" fill="#00a5ff"/>
<rect x="356" y="245" width="4" height="1" fill="#00a5ff"/>
<rect x="433" y="245" width="13" height="1" fill="#10795c"/>
<rect x="339" y="243" width="7" height="2" fill="#00f0f0"/>
<rect x="376" y="241" width="9" height="1" fill="#2a0800"/>
<rect x="338" y="241" width="14" height="1" fill="#10795c"/>
<rect x="378" y="244" width="6" height="1" fill="#2a0800"/>
<rect x="350" y="242" width="10" height="1" fill="#2a0800"/>
<rect x="381" y="249" width="11" height="1" fill="#10795c"/>
<rect x="339" y="240" width="11" height="2" fill="#10795c"/>
<rect x="452" y="247" width="7" height="1" fill="#10795c"/>
<rect x="450" y="246" width="7" height="1" fill="#2a0800"/>
<rect x="456" y="245" width="11" height="2" fill="#00a5ff"/>
<rect x="450" y="245" width="5" height="1" fill="#10795c"/>
<rect x="333" y="242" width="5" height="1" fill="#00f0f0"/>
<rect x="422" y="243" width="5" height="2" fill="#2a0800"/>
<rect x="442" y="247" width="10" height="1" fill="#00f0f0"/>
<rect x="425" y="248" width="4" height="2" fill="#2a0800"/>
<rect x="423" y="244" width="3" height="1" fill="#10795c"/>
<rect x="414" y="245" width="3" height="1" fill="#2a0800"/>
<rect x="443" y="243" width="3" height="1" fill="#2a0800"/>
<rect x="409" y="243" width="12" height="1" fill="#e66e5a"/>
<rect x="411" y="244" width="7" height="1" fill="#10795c"/>
<rect x="382" y="248" width="3" height="1" fill="#10795c"/>
<rect x="415" y="245" width="6" height="1" fill="#10795c"/>
<rect x="422" y="243" width="3" height="1" fill="#00f0f0"/>
<rect x="399" y="243" width="12" height="1" fill="#00a5ff"/>
<rect x="377" y="244" width="13" height="1" fill="#10795c"/>
<rect x="458" y="248" width="9" height="1" fill="#10795c"/>
<rect x="410" y="244" width="3" height="2" fill="#2a0800"/>
<rect x="415" y="246" width="9" height="2" fill="#2a0800"/>
<rect x="403" y="245" width="6" height="1" fill="#e66e5a"/>
<rect x="403" y="245" width="4" height="1" fill="#00f0f0"/>
<rect x="459" y="244" width="4" height="1" fill="#10795c"/>
<rect x="347" y="246" width="4" height="2" fill="#00f0f0"/>
<rect x="402" y="245" width="7" height="1" fill="#00f0f0"/>
<rect x="443" y="252" width="12" height="1" fill="#10795c"/>
<rect x="334" y="240" width="14" height="1" fill="#00f0f0"/>
<rect x="413" y="245" width="7" height="1" fill="#2a0800"/>
<rect x="358" y="240" width="10" height="1" fill="#e66e5a"/>
<rect x="435" y="244" width="13" height="2" fill="#00a5ff"/>
<rect x="376" y="241" width="13" height="1" fill="#10795c"/>
<rect x="412" y="246" width="5" height="1" fill="#e66e5a"/>
<rect x="364" y="243" width="5" height="1" fill="#10795c"/>
<rect x="366" y="241" width="13" height="1" fill="#00f0f0"/>
<rect x="458" y="245" width="13" height="1" fill="#00a5ff"/>
<rect x="348" y="244" width="6" height="1" fill="#2a0800"/>
<rect x="331" y="241" width="7" height="2" fill="#10795c"/>
<rect x="454" y="246" width="5" height="1" fill="#00a5ff"/>
<rect x="357" y="243" width="12" height="1" fill="#00f0f0"/>
<rect x="387" y="244" width="5" height="1" fill="#10795c"/>
<rect x="333" y="247" width="3" height="1" fill="#00f0f0"/>
<rect x="395" y="248" width="7" height="1" fill="#2a0800"/>
<rect x="419" y="245" width="13" height="2" fill="#2a0800"/>
<rect x="445" y="245" width="14" height="1" fill="#10795c"/>
<rect x="360" y="242" width="3" height="2" fill="#10795c"/>
<rect x="360" y="246" width="8" height="1" fill="#10795c"/>
<rect x="333" y="243" width="13" height="1" fill="#2a0800"/>
<rect x="456" y="244" width="9" height="1" fill="#00f0f0"/>
<rect x="359" y="246" width="9" height="1" fill="#10795c"/>
<rect x="376" y="242" width="8" height="1" fill="#2a0800"/>
<rect x="293" y="265" width="29" height="2" fill="#e66e5a"/>
<rect x="120" y="250" width="14" height="1" fill="#e66e5a"/>
<rect x="101" y="247" width="25" height="2" fill="#e66e5a"/>
<rect x="55" y="261" width="22" height="2" fill="#00a5ff"/>
<rect x="134" y="255" width="30" height="2" fill="#00f0f0"/>
<rect x="157" y="258" width="16" height="2" fill="#00f0f0"/>
<rect x="241" y="265" width="26" height="1" fill="#e66e5a"/>
<rect x="203" y="266" width="14" height="3" fill="#e66e5a"/>
<rect x="257" y="261" width="10" height="1" fill="#e66e5a"/>
<rect x="153" y="258" width="23" height="3" fill="#00a5ff"/>
<rect x="218" y="256" width="21" height="3" fill="#00f0f0"/>
<rect x="179" y="259" width="30" height="2" fill="#00f0f0"/>
<rect x="140" y="247" width="29" height="2" fill="#00a5ff"/>
<rect x="216" y="264" width="10" height="2" fill="#00a5ff"/>
<rect x="242" y="252" width="27" height="2" fill="#00a5ff"/>
<rect x="198" y="259" width="30" height="1" fill="#00a5ff"/>
<rect x="142" y="251" width="12" height="2" fill="#e66e5a"/>
<rect x="219" y="249" width="23" height="2" fill="#e66e5a"/>
<rect x="132" y="254" width="27" height="3" fill="#e66e5a"/>
<rect x="154" y="261" width="16" height="2" fill="#e66e5a"/>
<rect x="216" y="257" width="15" height="1" fill="#e66e5a"/>
<rect x="224" y="256" width="19" height="2" fill="#00a5ff"/>
<rect x="89" y="261" width="16" height="2" fill="#00a5ff"/>
<rect x="144" y="253" width="16" height="1" fill="#00a5ff"/>
<rect x="102" y="259" width="9" height="2" fill="#e66e5a"/>
<rect x="230" y="252" width="15" height="2" fill="#e66e5a"/>
<rect x="259" y="248" width="22" height="1" fill="#e66e5a"/>
<rect x="124" y="263" width="28" height="3" fill="#00f0f0"/>
<rect x="143" y="262" width="14" height="3" fill="#00f0f0"/>
<rect x="213" y="264" width="16" height="3" fill="#00a5ff"/>
<rect x="84" y="260" width="30" height="2" fill="#e66e5a"/>
<rect x="217" y="253" width="10" height="3" fill="#00f0f0"/>
<rect x="150" y="255" width="29" height="1" fill="#e66e5a"/>
<rect x="199" y="256" width="18" height="3" fill="#00f0f0"/>
<rect x="299" y="250" width="9" height="3" fill="#00f0f0"/>
<rect x="86" y="263" width="8" height="2" fill="#e66e5a"/>
<rect x="152" y="247" width="23" height="2" fill="#00f0f0"/>
<rect x="243" y="249" width="13" height="1" fill="#00a5ff"/>
<rect x="255" y="248" width="10" height="2" fill="#00a5ff"/>
<rect x="102" y="253" width="27" height="3" fill="#00a5ff"/>
<rect x="87" y="255" width="9" height="2" fill="#e66e5a"/>
<rect x="135" y="257" width="8" height="2" fill="#00a5ff"/>
<rect x="117" y="253" width="14" height="2" fill="#00a5ff"/>
<rect x="221" y="253" width="13" height="3" fill="#00f0f0"/>
<rect x="264" y="252" width="12" height="1" fill="#e66e5a"/>
<rect x="185" y="254" width="18" height="3" fill="#00a5ff"/>
<rect x="137" y="256" width="24" height="1" fill="#e66e5a"/>
<rect x="54" y="247" width="29" height="2" fill="#e66e5a"/>
<rect x="120" y="264" width="14" height="2" fill="#00a5ff"/>
<rect x="203" y="255" width="24" height="2" fill="#e66e5a"/>
<rect x="66" y="256" width="22" height="1" fill="#e66e5a"/>
<rect x="266" y="248" width="21" height="2" fill="#e66e5a"/>
<rect x="281" y="258" width="26" height="3" fill="#e66e5a"/>
<rect x="219" y="261" width="14" height="2" fill="#00a5ff"/>
<rect x="260" y="249" width="28" height="2" fill="#00a5ff"/>
<polygon points="380,241 447,246 447,249 380,245" fill="#0a9a70"/>
<polygon points="86.5,258.9 85.1,260.6 82.7,261.3 79.9,262.4 75,261.3 70.3,262.5 65.3,262.6 60.4,260.9 56.1,260.5 52.2,259.5 50.1,258.8 49.5,257.6 51,255.9 53.1,256.1 56.7,254.6 61,254.4 65.5,254.5 70.7,254.8 75.8,255.8 80.4,256.4 83.9,255.8 84.9,257.5" fill="#00f0f0"/>
<polygon points="82.3,258.3 82,259.3 79.7,259.7 77.2,260.9 73.5,260.9 69.9,260.6 65.9,261.4 61.9,260.4 58.7,259.8 56.4,260 54.3,259 54.2,257.8 54.9,256.7 56.6,255.8 59.1,255.2 62.2,255.6 66,255.5 70.1,254.7 73.6,255.4 76.8,255.7 79.4,256.3 81.3,257.1" fill="#e66e5a"/>
<polygon points="85.4,246.4 86,247.1 83.5,247.6 79.3,248.4 74.5,247.7 69.5,248.6 64.2,247.9 59.1,247.1 54.5,246.7 51.2,246.6 48.9,245.8 48.7,245.1 48.1,244.4 50.5,243.8 54.1,244 59,243.4 64.3,243.3 69.8,244 74.8,244.4 79.3,244.9 82.7,244.9 84.5,245.4" fill="#00f0f0"/>
<polygon points="81.6,245.8 81.8,246.3 79,246.7 76.9,246.7 72.9,247.3 69.1,247.1 64.9,247.1 60.8,247 57.6,246.7 54.5,246.4 53.2,245.8 51.7,245.2 53.1,244.7 54.9,244.4 57.5,244.3 60.5,244.1 64.8,243.7 69.2,244.1 73.5,244.1 77,244.4 79.8,244.9 81.8,245.1" fill="#e66e5a"/>
<polygon points="143.7,249.3 144,250.3 141.6,251.4 138.6,251.2 134.5,252.8 129.8,252.5 125,252.5 120.3,251.4 116.2,251.4 112.9,250 110.9,249.4 110.2,248.1 112.1,246.8 114.1,245.9 116.8,246.2 120.7,246 125.2,244.7 129.9,245.2 134.7,245.5 138.9,246.3 141.3,246.9 143.6,248.4" fill="#00f0f0"/>
<polygon points="139.8,248.7 139.9,249.7 137.5,250.4 135.3,250.6 132.8,250.5 129.3,250.9 125.7,250.9 122.3,250.5 119.2,250.6 117.4,249.7 115.3,249.1 114.8,248.3 116,247.3 117.5,246.7 119.6,246.1 122.1,246.3 125.8,246.1 129.3,245.7 132.7,245.9 136.1,246.7 138.6,247.2 139.9,247.9" fill="#e66e5a"/>
<polygon points="183,259.9 184,261 181.4,262.1 177.2,262.2 172.8,262.2 167.5,263.9 162.1,262.6 156.8,263.3 152.3,261 148.2,260.9 146.4,259.9 146.2,258.6 146.5,257.2 149.1,255.8 152.1,256 156.9,256.4 162.4,255 167.9,255.7 173.2,255.2 177,256.2 180.5,257.7 184,258.2" fill="#00f0f0"/>
<polygon points="180.1,259.3 178.7,260.4 177.9,261 174.6,261.7 171,262.2 167.1,262.1 162.8,262.5 158.6,262 154.7,261.1 152.1,260.8 151.1,259.7 149.5,258.7 150.9,257.5 152.4,257.2 155.6,256.1 159,255.8 163,256.2 167.2,256.3 171.6,255.8 174.7,257.1 177.3,257.1 179.3,258.2" fill="#e66e5a"/>
<polygon points="205.7,267.1 206,268.4 201.5,268.9 197.5,270.5 192,270.8 185.2,270.7 178.4,269.1 171.9,269.3 165.8,269 162,267.5 158.9,267.1 157.7,265.4 158.4,264.3 161.2,263.9 166.6,262.6 172.4,261.5 178.8,263 185.6,262.5 192,262.7 197.2,263.2 202.5,264.9 205.4,265.3" fill="#00f0f0"/>
<polygon points="202.5,266.4 202,267.4 198.5,268.3 195.5,268.5 190,268.8 184.8,269.5 179.1,268.9 173.9,269.1 169.4,268 165.1,267.5 162.5,266.9 162.2,265.7 163.3,264.6 164.7,263.6 169.4,263.1 173.5,262.9 179.1,263 185,262.6 190.5,263 194.7,263.5 199.2,264.3 200.8,265.2" fill="#e66e5a"/>
<polygon points="231.7,275.6 229.4,276.8 226.6,277.6 223.8,279 217.5,279.7 211.4,279.6 205.2,279.7 198.9,277.2 194,276.9 189.6,276 186.2,275.6 185.3,273.9 187.6,272.8 190,271.3 193.8,271.2 199,271.1 205.3,271.2 211.9,269.9 218.2,272.3 223.3,272.8 226.7,272.9 230.6,273.9" fill="#00f0f0"/>
<polygon points="226.8,274.8 226.4,276.1 224.6,276.7 220.9,278.1 216,278.5 210.9,278.7 205.9,277.9 200.6,277.5 196.4,277.3 193.4,276.2 191.1,275.4 189.6,274.2 190.9,272.9 192.7,272.3 196.7,271.8 200.7,271 205.9,270.3 211.3,270.5 216.4,271.1 220.3,272.4 224.7,273.1 226.5,273.4" fill="#e66e5a"/>
<polygon points="268,287.3 269.1,289.2 262.9,289.7 258.1,290 251.4,292.2 242.5,291 234.2,289.7 225.7,290.9 217.5,290.4 212.8,288.8 210.3,287.3 207.8,285.2 210.2,283.5 214.2,282.9 218.3,280.8 225.4,280.2 234.2,281.6 243.1,282 250.9,281.4 258,284.2 263.9,284.1 268.8,286.1" fill="#00f0f0"/>
<polygon points="264.9,286.5 264.9,287.6 259.8,288.9 256,289.3 249.4,290.5 242.1,290.3 234.5,289.5 227.9,289.3 221.7,289 216.3,287.8 212.7,287.1 212.2,285.5 212.5,284.3 216.3,283.6 220.9,282.6 227.8,281.8 234.7,281.7 242.2,282.1 249.7,281.9 255.4,283.7 260.2,283.5 264.7,285.1" fill="#e66e5a"/>
<polygon points="282.5,261.9 280.2,262.9 279,264.4 273.5,264 269.2,264.6 262.7,264.6 256.2,265.5 250.3,265.1 245.4,263.7 241.3,263.5 237.4,262.6 236.3,261.1 237.9,260 240.1,259.4 244.2,258 249.9,258.7 256.3,257.9 262.8,258.1 269.2,258.3 273.6,259.4 278.1,259.6 280,260.6" fill="#e66e5a"/>
<polygon points="225.5,252.3 224.3,253.1 222.8,253.3 219.7,253.6 216.5,253.7 212.1,254.1 207.8,253.6 203.5,254 200.3,253.2 197,252.9 195.4,252.4 194.6,251.7 196.2,251.2 197.2,250.7 200.2,250.2 203.9,250.1 207.9,249.9 212.2,249.7 216.5,250 220.1,250.4 222.9,251.2 224.3,251.4" fill="#e66e5a"/>
<polygon points="143.1,286 141.5,287.2 137.6,287.8 133,288.4 127.3,288.4 120.5,289.7 113.3,289.5 106,289 100.9,288.3 96.1,287.1 93.6,286.1 91,285 92.4,283.9 95.2,282.7 100.6,282.1 106.3,282.6 113.5,282.2 120.6,282.3 127.1,281.8 133.7,283 139,283.7 142,284.7" fill="#e66e5a"/>
<polygon points="185.4,297.7 184.5,299.3 178.9,301.1 173.7,301.1 163,302.8 152.7,301.9 141.1,302.2 130.7,301.8 122,300.2 114.3,299.7 106.8,297.9 106.6,296.3 108.3,294.4 114.1,293.1 122,293.3 130.7,293 141.6,292.7 153,292.2 163.3,292.3 172.4,293 180,295 186.1,295.9" fill="#e66e5a"/>
<polygon points="273.1,327 272.7,328.7 269.6,329.6 266.1,330.3 261.5,330.8 255.3,330.5 249.4,328.8 243.7,330.3 238.2,329 234.9,328.2 232.7,326.6 231.3,325.5 231.8,324 235.3,323.7 238,323.6 243.3,323.2 249.5,322.7 255.7,323.4 261.4,323.6 266.1,323.7 271.2,325 272.9,325.8" fill="#00f0f0"/>
<polygon points="269.5,326.3 268.8,327.2 267,328 263.9,328.7 259.4,329.3 255,329.2 250.1,328.6 245.5,328.6 240.8,328.2 238.3,327.3 236.2,326.8 235.1,325.7 236.5,324.8 237.9,324 241,323 245.5,323.6 250.1,322.7 255.2,322.6 259.5,322.9 264,323.4 266.8,324.6 268.8,325" fill="#e66e5a"/>
<polygon points="321.5,303.6 319.2,306.3 313.8,306.9 306.3,308.6 297.9,310.7 288.3,308.4 277.6,309.7 267.2,306.8 259.7,307.7 251,305.8 248.4,303.9 245.6,300.9 248.9,298 250.7,295.5 258.2,294.3 267.3,295.1 278.1,295.9 288.8,294.3 298.1,297.4 307.2,298.6 313.3,299.6 318.9,300.3" fill="#00f0f0"/>
<polygon points="315.7,302.6 313.1,305.2 309.9,307.5 304.5,307.9 296.6,309.9 287.6,310.4 278,308.1 268.5,307.5 261.9,307.1 255.6,306.6 251.8,303.9 251.6,301.5 252.5,299.1 256.7,296.7 262,295.8 269.3,295.4 278.6,294.4 287.6,295.9 296.4,294.5 304.7,297.6 311.9,298.1 313.9,300.4" fill="#e66e5a"/>
<polygon points="333.9,267 333.9,268.2 331.3,269.4 326.5,270.5 321.8,270.9 316.4,269.1 310.6,269 305.1,269 299.5,269.6 296.1,267.8 293.2,267.2 293,265.5 294.4,264.5 296.2,263.1 299.7,262.2 305.4,261.5 310.6,263.4 316.5,262.5 321.9,262.7 326.8,264.2 331.1,264.5 333.7,265.9" fill="#00f0f0"/>
<polygon points="330,266.3 329.8,267.4 327.3,267.7 324.5,268.8 320.1,269.1 315.9,269.6 311.1,268.6 306.8,269.2 302.2,268.1 300,267.9 297.9,266.9 296.6,265.7 298.1,264.8 300,264.1 303.1,263.9 306.7,263.2 311.2,263.5 315.9,262.5 320.5,263.5 324,263.8 326.7,264.4 328.8,265.1" fill="#e66e5a"/>
<polygon points="336.8,246.4 335.1,248 331.3,248.7 324,249.8 316.6,249.7 308.2,248.6 298.6,249 289.7,249 283.2,247 275.5,246.6 273.6,245.4 272.1,244.2 273.9,242.7 276.9,242.4 281.3,241.1 290.6,242.3 298.8,240.4 308.1,242.5 316.9,242.2 324.8,243.1 329.7,244.2 333.6,245.3" fill="#00f0f0"/>
<polygon points="332.3,245.5 330.2,246.6 328,247.5 322.1,247.6 315.8,247.6 307.3,248.1 299.3,247.5 291.4,247.4 284.2,246.8 280.5,246.7 277,245.7 274.1,244.5 276.9,243.3 279.2,243 285.6,242.2 291.6,242.4 299.4,242.4 307.5,242.4 315.4,242.5 321.3,242.7 326.8,243.4 331.2,244.5" fill="#e66e5a"/>
<polygon points="404.6,251.8 403.1,252.9 401.2,253.8 398.3,254.4 395.1,255.4 390.6,255.9 386,256.4 381.4,256.3 377.6,256.1 375.3,255.9 373.3,255.5 371.5,254.7 373.1,253.6 374.4,252.9 377.5,251.9 381.1,251.2 385.6,250.5 390,250.6 394.2,250.2 397.9,250.1 401.2,250.5 403.6,250.8" fill="#e66e5a"/>
<polygon points="414.3,259.2 413,260.9 410.3,261.7 406.5,263.2 402.3,263.5 396.4,265.1 390.7,265.2 385.5,265.2 380,265.6 377.2,264.8 374.8,264 374,262.7 373.3,261.4 376.8,260.2 380.2,259.3 384.3,258 390.2,257.6 395.7,256.5 401,256.7 406.8,256.8 409.6,257.3 413.2,257.7" fill="#e66e5a"/>
<polygon points="451.9,265.2 449.7,267 448.1,268.2 443.1,269.6 438.8,270.1 432.5,270.8 426.3,271.6 420.2,271.7 415.5,272.2 411.1,271.6 407.6,270.6 407.8,269.1 407.2,267.6 410.2,266.1 414,265.6 419.2,264.1 425.5,262.9 431.8,262.4 437.7,262.8 442.9,262.7 446.5,263.2 450.8,263.9" fill="#e66e5a"/>
<polygon points="474.5,252.8 473,254 472,254.9 469.1,255.8 465.4,256.4 461,256.6 456.5,257.1 452.3,257.1 448.2,257.3 445.2,257 443.2,256.7 442.4,255.7 443.3,254.5 445.9,253.6 448.1,252.8 452,252.3 456,251.5 460.4,251.1 464.5,251.3 468.3,251.4 471.7,251.6 472.6,252.1" fill="#e66e5a"/>
<polygon points="532.7,261.4 532.4,262.8 530.8,264.4 525.7,264.7 519.9,266.9 513.5,267.7 506.5,266.8 500.6,267.5 494,267.5 490,266.9 486.2,266 486.7,264.6 487.2,263.2 489.2,261.3 493.4,261.7 499.6,261 506,259.4 512.7,259 519.6,258.5 524.8,258.2 530,259.5 531.7,259.7" fill="#00f0f0"/>
<polygon points="531.4,260.2 529.5,261.4 528.2,262.4 523.6,263.1 519.3,263.9 513.8,264.5 508.2,265.2 502.4,265.3 498,265.8 494.9,265.4 491.9,264.9 490.4,263.8 491,262.7 494.8,261.7 497.1,260.8 501.9,259.7 507.6,259.3 513.2,258.8 518.9,258.4 523.6,258.5 526.8,258.9 529.6,259.3" fill="#e66e5a"/>
<polygon points="488.8,273.9 489.6,275 486,276.2 482.4,276.9 477.1,277.7 470.9,279 464.5,279.3 458.3,279.8 453.4,279.7 448,279.6 445.1,278.8 446,277.6 445.3,276.6 449.1,275.3 452.4,274.5 458,273.2 464.1,272.6 470.3,272.5 476.7,272 481.5,272 485.4,272.3 488.5,272.8" fill="#e66e5a"/>
<polygon points="419.9,279.8 420.2,281.2 417.1,282.5 411.1,283.8 405.3,284.9 398.7,285.3 391.7,286.5 385.1,286.5 379.2,286.5 374.5,286.4 370.3,285.5 371.3,284.1 370.4,282.6 373.6,281.5 378.5,279.9 384.5,279.3 391,278.3 398.3,277.5 404.9,277.7 411.5,277.1 416.1,277.6 419.8,278.4" fill="#e66e5a"/>
<polygon points="474.9,288.7 476,290.6 470.2,293.2 465.7,294.3 458.3,295.9 450.1,297.6 441.2,297.9 433.1,298.3 425.8,297.8 419.1,297.5 416.4,295.9 415,293.9 415.5,291.3 419.6,289.9 425.4,287.6 432.6,286.3 440.6,285.9 448.9,284.3 456.9,284.8 465.4,284.8 471.7,284.9 474.6,286.2" fill="#e66e5a"/>
<polygon points="555.6,279 552.5,281.6 550.9,283.5 543.8,285 537.9,286.9 529.7,287.7 521.2,287.6 513.5,288 505.5,288.7 501,287.3 496.2,286.4 493.7,284.5 494.8,282.2 499.8,280.2 505.5,278.7 511.3,276.5 520.1,275.6 528.3,275.7 536.9,275.1 543.8,275.6 548.2,275.7 553.8,277" fill="#e66e5a"/>
<polygon points="518,296.3 515.5,299.5 513.7,301.5 508,304.1 499.6,305.4 491.8,305.9 483.7,307.6 474.9,308 469,307 462.5,306.4 458.4,304.5 457.4,301.6 456.7,298.4 461.1,295.9 467.1,294.6 473.5,293.2 481.9,290.9 490.7,290.1 498.5,290.2 505.5,290.6 510.8,291.9 515.4,293.4" fill="#e66e5a"/>
<polygon points="597.6,289.6 598.7,293 594.7,293.5 589,296.7 580.4,298.4 571.6,301.1 562.7,301 554,298.9 545.9,300.8 540.3,299 535.2,297.2 534.1,294 536.1,290.7 539.5,288.5 544,287.6 551.7,283.7 561.3,284.7 570.6,282.3 580,283.8 588.3,284.4 592.4,285.3 596.3,286.4" fill="#00f0f0"/>
<polygon points="594.6,288.4 595.1,291.1 590.9,293.1 586.3,294.7 580.2,295.5 572,296.3 563.8,297.1 556.9,298.6 549.4,297.7 543.4,297.2 539.3,295.6 540.1,293.1 541.1,290.4 543.3,289 549.1,287.2 555.1,284.9 562.9,284 570.8,283.1 578.8,282.9 586.1,283.1 591.1,284.4 594.4,285.7" fill="#e66e5a"/>
<polygon points="599.7,269.3 598.7,271.8 595.3,272.7 591.9,275.6 585.2,277.3 579.1,277.4 572.4,276.8 565.7,276 560.4,276.8 555.4,275.8 552.5,275.1 550.6,272.7 551.3,270.7 555.7,267.6 558.7,267.1 565,266.5 571.7,266 578.2,265.9 584.9,265.5 591.1,264.9 594.6,265.6 598.1,266.6" fill="#00f0f0"/>
<polygon points="596.6,268.2 595,270.3 592.7,271.7 589.2,273.3 584.5,274.5 579.4,274.1 573.8,274.8 568.2,274.9 563.5,275.3 559.2,274.9 557.1,273.6 557.5,271.6 556.3,270 559.3,268.5 563.2,267.6 567.6,265.7 573.1,264.9 578.6,265.2 583.7,264.3 588.5,264.5 592.5,265.2 595.9,266.5" fill="#e66e5a"/>
<polygon points="590.2,310.1 592.4,313.1 587,315 578.5,317.4 570.6,319.2 560.4,321.8 549.3,322.8 539.5,322.5 529.7,322.4 521.3,321 519.2,319.1 517.5,316.4 516.3,313.5 521.7,311.4 528.5,308.7 537.6,307.2 548.2,306.5 558.5,304.8 568.6,303.8 577.5,304.1 585.4,305.9 589.5,307.2" fill="#e66e5a"/>
<polygon points="362.2,312.8 361.5,315.8 360.4,317.4 356.6,319.3 352.9,319.7 348.8,320.9 344.4,321.9 339.9,321.2 336.4,321.5 333.2,319.5 330.3,318.2 330.2,315.6 331.2,313.1 331.8,311.4 335.4,309.2 339.1,307.9 343.1,307.3 347.8,307.6 352,306.6 356.2,308 359.2,308.7 361.7,310.5" fill="#e66e5a"/>
<polygon points="428.5,331.9 425.7,334.1 424.4,336.8 414.3,337.7 404.7,340.5 393.9,340.6 382.3,341.5 370.6,340.6 359.7,343.7 352.9,340.3 349.2,339.9 346.1,337.6 348.4,334.6 351.2,332.1 361,331.3 370.5,329.7 381,327.7 393.2,327.3 404.8,329 413.1,326.6 420.5,328.7 427.9,329.3" fill="#00f0f0"/>
<polygon points="426.6,330.4 425.3,332.6 421.7,334.2 412.1,336.2 404.8,337.2 394.4,339.5 383.4,339.4 374.1,340.6 364,340.4 358.8,339.5 351.5,339 351.8,337 351.4,334.7 356.5,332.7 363.2,330.8 372.4,329.2 382.7,328.9 393.2,327.6 403.6,327.2 411.9,327 419.6,327.7 423.9,328.6" fill="#e66e5a"/>
<polygon points="358,270.6 358,271.7 357.1,272.7 355.4,273.4 353.8,274.3 351.6,274.3 349.4,274.5 347.3,274.8 345.6,274.4 344,273.8 343,273 342.3,271.9 342.9,270.8 343.5,269.7 344.9,269 346.8,268.4 348.9,268.5 351.2,268.3 353.2,267.9 355.2,267.9 356.5,268.8 357.8,269.5" fill="#e66e5a"/>
<polygon points="331.6,313.7 331.2,316 329.7,318.1 325.7,319.9 320.1,320.7 314.7,321.4 308.6,321.7 302.4,322 298,322.3 293.1,321.4 291.7,319.5 290.3,317.3 289.9,315.2 293.2,313.1 297.2,311.4 301.9,310.9 307.6,309.5 313.5,309 319.3,309 323.8,309 328.6,310.4 330.4,311.4" fill="#e66e5a"/>
<polygon points="680.2,263.7 678.1,265.7 673.8,268 668.1,268.1 661.4,271.1 652.7,271.7 644,271.2 635.7,272.2 628.9,273.3 623,272.5 619.3,270.7 617.5,268.1 617.3,266.6 622.3,263.4 627.4,261.8 635.2,259.7 643.3,260.8 652.1,259.3 660.4,258.4 668.5,260.1 673.2,261.4 677.3,261.4" fill="#00f0f0"/>
<polygon points="674.8,262.3 674.2,264.2 671,265.4 666.7,266.8 660.6,268.4 653.4,269.3 645.5,270.4 638.3,270.4 632.1,270.8 627.4,270.6 623.8,269.6 621.8,267.9 623.6,265.8 625.1,264.7 631.7,262.9 637.3,261.4 644.7,260.7 652.2,259.3 660.2,259.3 666,259.3 671.7,259.8 674.4,260.4" fill="#e66e5a"/>
<polygon points="708.8,283.9 707.8,286.1 704.1,287.6 697.7,288.1 691.7,292.2 683.6,292.3 675.4,292.1 667.1,291.3 660.9,292.6 655.8,291.6 652.3,290.2 650.6,288 652.1,285.6 654.1,284.1 660.2,283.6 666.5,280.7 674.3,279.9 682.6,279.5 691,279.8 698.1,279.7 703,280.9 707.5,281.2" fill="#00f0f0"/>
<polygon points="703.9,282.5 702.9,284.5 702.3,286.1 696.3,287.5 690.5,288.9 684.1,289.9 676.8,289.7 669.8,290.7 664.1,290.9 660.1,290.4 656.7,289.4 655.5,287.6 657,285.8 659.5,284 663.7,283 668.8,281.8 675.8,280 682.9,279.1 689.6,279 696.3,278.9 700,279.7 704.7,280.8" fill="#e66e5a"/>
<polygon points="695.9,293.8 694.4,296 691.3,297.9 684.6,299.8 678.1,301.9 670.5,302.8 661.8,303 654.2,303.6 645.9,303.6 641.2,303.1 638.9,302 635.4,300.2 637.5,297.6 640.8,296.2 645.5,294 652.7,292.9 660.6,292 669.1,290.7 676.7,289.8 683.9,290 688.8,290.6 693.8,292" fill="#e66e5a"/>
<polygon points="605.1,327.8 604,329.9 602,330.9 597.7,332.8 591.8,335 585.2,336.2 578.8,337.2 572,337.5 566.1,336.3 561.7,334.7 559.9,334 558.3,331.1 559.6,328.7 560.8,327.6 566.3,325.7 571.3,325.3 577.8,324.5 584.4,322.7 591.1,322.8 597.3,324.7 600.1,324.9 604,325.2" fill="#00f0f0"/>
<polygon points="601.3,326.5 601,328.7 598.7,330.4 595.9,331.6 591.1,332.6 585.8,333.1 580.4,334.5 574.8,334.5 569.8,333.8 567.3,333.8 564.9,332.2 563.9,330.5 564.1,328.4 565.9,327 569,325.6 574.2,324 579.3,323.7 584.6,323 590.2,322.3 594.3,322.3 598.9,323.8 601.7,324.5" fill="#e66e5a"/>
<polygon points="368.1,364.7 368.4,367.4 365.9,368.4 362.9,370.6 357.4,370.9 352.3,371.4 346.5,371.8 341.1,372.3 336.6,371.9 331.9,371 330.2,368.9 328.1,367.5 329.5,365.8 331.4,363.3 336.1,362.2 340.2,361.7 345.8,359.4 351.4,359.4 356.5,359.4 361.5,360.5 365.2,361 368.4,363" fill="#00f0f0"/>
<polygon points="366.4,363.3 365.5,365.1 363.2,366.9 360.4,368.1 356.8,369.4 352.8,370 348.2,369.8 343.9,370.3 339.9,369.7 336.3,369.4 335,368.3 333.3,366.8 334.3,364.9 336.4,363.1 339.4,361.9 343.3,361.5 347.1,360.4 351.8,360.2 355.9,359.4 360.1,360.3 363.7,360.5 364.7,361.5" fill="#e66e5a"/>
<rect x="69.3387" y="257.497" width="2.13544" height="1" fill="#00a5ff"/>
<rect x="71.5962" y="259.739" width="5.64367" height="1" fill="#00a5ff"/>
<rect x="72.6275" y="255.378" width="5.69653" height="1" fill="#00f0f0"/>
<rect x="64.722" y="245.506" width="5.27136" height="1" fill="#00a5ff"/>
<rect x="63.7384" y="245.798" width="2.35487" height="1" fill="#00f0f0"/>
<rect x="58.6267" y="245.222" width="2.32597" height="1" fill="#00f0f0"/>
<rect x="128.502" y="248.813" width="2.28191" height="1" fill="#00a5ff"/>
<rect x="133.602" y="248.251" width="3.00751" height="1" fill="#00f0f0"/>
<rect x="123.942" y="249.893" width="4.25314" height="1" fill="#00f0f0"/>
<rect x="166.035" y="259.625" width="3.22125" height="1" fill="#00f0f0"/>
<rect x="173.719" y="257.402" width="2.25604" height="1" fill="#f0a090"/>
<rect x="158.156" y="260.353" width="5.45022" height="1" fill="#f0a090"/>
<rect x="181.894" y="264.12" width="3.74838" height="1" fill="#00a5ff"/>
<rect x="180.517" y="264.952" width="4.20179" height="1" fill="#f0a090"/>
<rect x="186.845" y="263.513" width="5.20472" height="1" fill="#00a5ff"/>
<rect x="203.553" y="273.581" width="3.26644" height="1" fill="#f0a090"/>
<rect x="202.029" y="273.156" width="2.98974" height="1" fill="#f0a090"/>
<rect x="201.488" y="277.867" width="5.57021" height="1" fill="#00a5ff"/>
<rect x="259.334" y="284.057" width="5.25732" height="1" fill="#f0a090"/>
<rect x="252.675" y="283.079" width="4.1905" height="1" fill="#00f0f0"/>
<rect x="253.055" y="286.464" width="2.31811" height="1" fill="#f0a090"/>
<rect x="246.843" y="259.814" width="4.46484" height="1" fill="#00f0f0"/>
<rect x="255.569" y="259.218" width="4.60266" height="1" fill="#00a5ff"/>
<rect x="265.766" y="258.731" width="3.90256" height="1" fill="#f0a090"/>
<rect x="210.688" y="251.839" width="5.58403" height="1" fill="#00a5ff"/>
<rect x="207.385" y="251.85" width="3.49841" height="1" fill="#f0a090"/>
<rect x="211.482" y="252.952" width="3.14309" height="1" fill="#f0a090"/>
<rect x="120.06" y="285.608" width="2.75168" height="1" fill="#00f0f0"/>
<rect x="137.454" y="287.442" width="5.97025" height="1" fill="#00a5ff"/>
<rect x="96.6118" y="282.571" width="4.73208" height="1" fill="#00f0f0"/>
<rect x="162.908" y="301.386" width="5.33354" height="1" fill="#00a5ff"/>
<rect x="176.016" y="296.592" width="3.32973" height="1" fill="#f0a090"/>
<rect x="137.265" y="299.989" width="5.371" height="1" fill="#f0a090"/>
<rect x="257.415" y="324.022" width="2.62268" height="1" fill="#f0a090"/>
<rect x="253.373" y="325.87" width="5.45931" height="1" fill="#f0a090"/>
<rect x="242.489" y="327.302" width="2.89459" height="1" fill="#00a5ff"/>
<rect x="311.219" y="299.04" width="2.32856" height="1" fill="#00f0f0"/>
<rect x="276.689" y="295.169" width="3.74217" height="1" fill="#00a5ff"/>
<rect x="280.98" y="301.168" width="4.52528" height="1" fill="#00f0f0"/>
<rect x="302.536" y="268.672" width="3.61264" height="1" fill="#00f0f0"/>
<rect x="300.656" y="263.597" width="4.8391" height="1" fill="#f0a090"/>
<rect x="318.003" y="263.542" width="3.79363" height="1" fill="#00f0f0"/>
<rect x="327.474" y="244.233" width="5.9578" height="1" fill="#00f0f0"/>
<rect x="316.995" y="245.545" width="4.51468" height="1" fill="#f0a090"/>
<rect x="319.289" y="246.173" width="4.19915" height="1" fill="#00a5ff"/>
<rect x="379.014" y="253.389" width="3.0634" height="1" fill="#00a5ff"/>
<rect x="379.179" y="251.815" width="5.9351" height="1" fill="#f0a090"/>
<rect x="391.334" y="253.597" width="5.68763" height="1" fill="#00a5ff"/>
<rect x="395.553" y="259.957" width="5.71137" height="1" fill="#00a5ff"/>
<rect x="393.486" y="258.229" width="3.01678" height="1" fill="#f0a090"/>
<rect x="408.13" y="261.874" width="4.65003" height="1" fill="#00a5ff"/>
<rect x="439.559" y="266.895" width="3.84716" height="1" fill="#f0a090"/>
<rect x="422.073" y="264.714" width="4.47862" height="1" fill="#00f0f0"/>
<rect x="419.433" y="268.444" width="5.57023" height="1" fill="#00f0f0"/>
<rect x="451.238" y="253.232" width="4.66982" height="1" fill="#00f0f0"/>
<rect x="469.735" y="255.988" width="3.7825" height="1" fill="#00f0f0"/>
<rect x="461.793" y="253.107" width="5.8872" height="1" fill="#00f0f0"/>
<rect x="508.942" y="260.269" width="2.12353" height="1" fill="#00a5ff"/>
<rect x="518.899" y="262.017" width="2.3447" height="1" fill="#00f0f0"/>
<rect x="522.467" y="263.119" width="4.34515" height="1" fill="#00f0f0"/>
<rect x="461.236" y="276.337" width="3.66297" height="1" fill="#00f0f0"/>
<rect x="473.178" y="275.774" width="3.29205" height="1" fill="#f0a090"/>
<rect x="478.728" y="275.44" width="2.88606" height="1" fill="#00f0f0"/>
<rect x="374.181" y="284.054" width="5.41293" height="1" fill="#00a5ff"/>
<rect x="403.699" y="284.797" width="5.34781" height="1" fill="#f0a090"/>
<rect x="389.655" y="280.894" width="5.83469" height="1" fill="#f0a090"/>
<rect x="432.022" y="292.517" width="2.26192" height="1" fill="#f0a090"/>
<rect x="446.748" y="287.089" width="2.39183" height="1" fill="#f0a090"/>
<rect x="423.171" y="293.681" width="5.20142" height="1" fill="#f0a090"/>
<rect x="499.331" y="284.183" width="3.87857" height="1" fill="#00a5ff"/>
<rect x="500.448" y="285.724" width="4.66007" height="1" fill="#00a5ff"/>
<rect x="533.758" y="276.529" width="3.89821" height="1" fill="#00f0f0"/>
<rect x="478.974" y="298.559" width="2.414" height="1" fill="#f0a090"/>
<rect x="501.107" y="300.631" width="3.32726" height="1" fill="#f0a090"/>
<rect x="472.682" y="303.561" width="3.59805" height="1" fill="#f0a090"/>
<rect x="582.748" y="292.588" width="3.72181" height="1" fill="#f0a090"/>
<rect x="574.359" y="291.673" width="2.58502" height="1" fill="#f0a090"/>
<rect x="566.379" y="292.294" width="4.1336" height="1" fill="#f0a090"/>
<rect x="569.199" y="271.33" width="2.59123" height="1" fill="#f0a090"/>
<rect x="588.858" y="266.477" width="5.16115" height="1" fill="#00f0f0"/>
<rect x="589.997" y="267.318" width="3.05011" height="1" fill="#f0a090"/>
<rect x="545.685" y="309.283" width="4.81905" height="1" fill="#f0a090"/>
<rect x="587.564" y="317.161" width="4.45817" height="1" fill="#00f0f0"/>
<rect x="585.811" y="317.298" width="5.80702" height="1" fill="#00f0f0"/>
<rect x="344.423" y="319.079" width="5.80699" height="1" fill="#00f0f0"/>
<rect x="353.889" y="310.187" width="4.23412" height="1" fill="#00a5ff"/>
<rect x="357.323" y="308.233" width="3.08289" height="1" fill="#00a5ff"/>
<rect x="357.617" y="330.161" width="5.35331" height="1" fill="#00f0f0"/>
<rect x="381.406" y="334.204" width="5.71197" height="1" fill="#00f0f0"/>
<rect x="376.522" y="329.676" width="3.51897" height="1" fill="#00a5ff"/>
<rect x="350.647" y="269.182" width="5.5127" height="1" fill="#00a5ff"/>
<rect x="350.319" y="269.644" width="5.28181" height="1" fill="#00f0f0"/>
<rect x="347.559" y="273.228" width="5.24148" height="1" fill="#00f0f0"/>
<rect x="325.486" y="310.597" width="5.65072" height="1" fill="#00a5ff"/>
<rect x="296.513" y="318.431" width="5.09261" height="1" fill="#f0a090"/>
<rect x="311.78" y="318.877" width="5.91769" height="1" fill="#00f0f0"/>
<rect x="669.207" y="263.508" width="4.73399" height="1" fill="#f0a090"/>
<rect x="631.973" y="266.412" width="3.79205" height="1" fill="#00a5ff"/>
<rect x="654.033" y="262.468" width="4.45861" height="1" fill="#00a5ff"/>
<rect x="697.125" y="282.938" width="4.78893" height="1" fill="#f0a090"/>
<rect x="696.416" y="282.614" width="3.22507" height="1" fill="#00f0f0"/>
<rect x="671.479" y="281.785" width="3.12731" height="1" fill="#f0a090"/>
<rect x="663.735" y="300.153" width="2.63842" height="1" fill="#00f0f0"/>
<rect x="643.922" y="296.02" width="2.71944" height="1" fill="#00f0f0"/>
<rect x="642.891" y="299.529" width="2.36527" height="1" fill="#f0a090"/>
<rect x="579.241" y="325.131" width="3.81488" height="1" fill="#00f0f0"/>
<rect x="594.828" y="327.683" width="3.79835" height="1" fill="#00f0f0"/>
<rect x="579.097" y="325.81" width="4.35087" height="1" fill="#00a5ff"/>
<rect x="355.57" y="367.275" width="4.12691" height="1" fill="#f0a090"/>
<rect x="359.116" y="368.013" width="2.26803" height="1" fill="#00a5ff"/>
<rect x="344.337" y="366.914" width="2.8566" height="1" fill="#00a5ff"/>
<polygon points="345.4,368.6 346,370.8 344.2,371.9 341.2,372.9 338.3,373.9 334.7,375.5 330.8,375.9 326.9,376.8 323.8,376.1 320.3,374.9 318.4,374.7 317.9,372.5 318.1,370.4 320.1,369.3 322.5,368 325.7,367 329.2,364.7 333.2,364 337.1,364.5 340.1,364.7 343.2,365.9 345.4,367" fill="#00f0f0"/>
<polygon points="372,340 434,335.5 434,338 372,343.5" fill="#2a0500"/>
<polygon points="307.5,383 330,375 348,380.5 325.6,393" fill="#00a5ff"/>
<polygon points="577.5,333 616,329.6 651,338 600,334.5" fill="#00a5ff"/>
<polygon points="262,333 300,330 366,334 360,352 300,362 268,358" fill="url(#dots2)"/>
<path d="M275 277 L345 297" stroke="#b8d8e8" stroke-width="1" fill="none" stroke-dasharray="3 2"/>
<path d="M380 303 L460 322" stroke="#b8d8e8" stroke-width="1" fill="none" stroke-dasharray="2 3"/>
<path d="M560 312 L640 300" stroke="#b8d8e8" stroke-width="1" fill="none" stroke-dasharray="2 3"/>
<polygon points="322,192 342,184 374,186 378,230 352,226" fill="#1e0400"/>
<polygon points="219,206 230,193 298,204 305,231 219,219" fill="url(#fence)"/>
<polygon points="303.5,196 322,200 330,234 306,231" fill="#701010"/>
<polygon points="303.5,196 322,200 330,234 306,231" fill="url(#fencer)"/>
<path d="M244.5 232 L244.5 211.5 L258 210 L262 211.5 L272 209.5 L301 209.8 M272 210 L272 230" stroke="#e07860" stroke-width="1.2" fill="none"/>
<polygon points="255,224 340,235 340,238 255,227" fill="#0a9a70"/>
<polygon points="320,191 336,195 346,232 334,232" fill="#5a3214"/>
<polygon points="332,204.5 363.5,227 357,238 322,225.5" fill="#c4c4c4"/>
<rect x="349.137" y="209.887" width="1.2" height="2.0725" fill="#c4c4c4"/>
<rect x="334.724" y="229.833" width="1.2" height="1.42729" fill="#5a3214"/>
<rect x="337.927" y="214.8" width="1.2" height="1.39314" fill="#5a3214"/>
<rect x="325.026" y="235.209" width="1.2" height="1.44257" fill="#c4c4c4"/>
<rect x="328.895" y="213.377" width="1.2" height="2.32399" fill="#c4c4c4"/>
<rect x="343.529" y="213.161" width="1.2" height="1.21486" fill="#5a3214"/>
<rect x="332.489" y="204.135" width="1.2" height="2.49857" fill="#c4c4c4"/>
<rect x="344.479" y="220.534" width="1.2" height="2.26549" fill="#00e0e0"/>
<rect x="353.931" y="221.275" width="1.2" height="2.08551" fill="#c4c4c4"/>
<rect x="333.203" y="213.878" width="1.2" height="2.99893" fill="#c4c4c4"/>
<rect x="323.264" y="217.985" width="1.2" height="2.02213" fill="#5a3214"/>
<rect x="349.649" y="202.027" width="1.2" height="1.59605" fill="#5a3214"/>
<rect x="352.234" y="208.51" width="1.2" height="2.56058" fill="#c4c4c4"/>
<rect x="352.608" y="214.736" width="1.2" height="1.15354" fill="#5a3214"/>
<rect x="327.875" y="207.456" width="1.2" height="1.18481" fill="#00e0e0"/>
<rect x="353.248" y="229.518" width="1.2" height="1.60387" fill="#5a3214"/>
<rect x="326.815" y="211.689" width="1.2" height="1.85608" fill="#5a3214"/>
<rect x="323.491" y="217.535" width="1.2" height="1.06836" fill="#c4c4c4"/>
<rect x="343.268" y="210.05" width="1.2" height="1.89137" fill="#00e0e0"/>
<rect x="331.078" y="216.838" width="1.2" height="1.31864" fill="#c4c4c4"/>
<rect x="354.157" y="232.434" width="1.2" height="2.51811" fill="#00e0e0"/>
<rect x="342.259" y="223.546" width="1.2" height="1.78545" fill="#5a3214"/>
<rect x="328.482" y="235.055" width="1.2" height="2.34436" fill="#00e0e0"/>
<rect x="343.717" y="203.606" width="1.2" height="1.66888" fill="#00e0e0"/>
<rect x="343.061" y="211.481" width="1.2" height="1.01901" fill="#c4c4c4"/>
<rect x="348.608" y="225.877" width="1.2" height="1.60303" fill="#00e0e0"/>
<rect x="341.472" y="207.935" width="1.2" height="1.41688" fill="#2c0600"/>
<rect x="341.076" y="217.196" width="1.2" height="1.7122" fill="#c4c4c4"/>
<rect x="324.821" y="231.155" width="1.2" height="2.15063" fill="#5a3214"/>
<rect x="342.033" y="224.93" width="1.2" height="2.26076" fill="#2c0600"/>
<rect x="338.928" y="215.67" width="1.2" height="2.29745" fill="#00e0e0"/>
<rect x="338.637" y="201.317" width="1.2" height="2.54238" fill="#00e0e0"/>
<rect x="333.09" y="227.989" width="1.2" height="2.39034" fill="#2c0600"/>
<rect x="344.631" y="227.51" width="1.2" height="2.27289" fill="#c4c4c4"/>
<rect x="349.257" y="222.469" width="1.2" height="2.69212" fill="#2c0600"/>
<rect x="340.195" y="221.523" width="1.2" height="2.45756" fill="#00e0e0"/>
<rect x="355.588" y="214.334" width="1.2" height="1.04488" fill="#2c0600"/>
<rect x="333.848" y="226.264" width="1.2" height="2.1552" fill="#00e0e0"/>
<rect x="336.074" y="210.275" width="1.2" height="1.74694" fill="#00e0e0"/>
<rect x="354.757" y="210.922" width="1.2" height="2.5202" fill="#c4c4c4"/>
<rect x="318.861" y="213.218" width="1.5" height="2.87674" fill="#9040b0"/>
<rect x="327.768" y="208.287" width="1.5" height="2.84134" fill="#9040b0"/>
<rect x="318.589" y="214.79" width="1.5" height="2.91298" fill="#9040b0"/>
<rect x="318.001" y="197.506" width="1.5" height="2.55891" fill="#9040b0"/>
<rect x="318.733" y="200.213" width="1.5" height="2.45909" fill="#00e0e0"/>
<rect x="319.561" y="192.325" width="1.5" height="2.79938" fill="#9040b0"/>
<rect x="316.472" y="200.767" width="1.5" height="2.27587" fill="#9040b0"/>
<rect x="316.152" y="196.313" width="1.5" height="1.50016" fill="#00e0e0"/>
<rect x="330.642" y="203.972" width="1.5" height="1.73219" fill="#00e0e0"/>
<rect x="327.934" y="209.377" width="1.5" height="1.68704" fill="#00e0e0"/>
<rect x="328.243" y="205.482" width="1.5" height="1.95111" fill="#9040b0"/>
<rect x="330.419" y="197.862" width="1.5" height="1.51603" fill="#00e0e0"/>
<rect x="315.775" y="214.212" width="1.5" height="2.77417" fill="#9040b0"/>
<rect x="317.547" y="204.563" width="1.5" height="1.26148" fill="#00e0e0"/>
<rect x="329.016" y="200.413" width="1.5" height="1.99666" fill="#00e0e0"/>
<rect x="315.041" y="207.963" width="1.5" height="1.46125" fill="#00e0e0"/>
<rect x="331.685" y="196.504" width="1.5" height="2.42207" fill="#9040b0"/>
<rect x="315.539" y="200.382" width="1.5" height="1.97081" fill="#00e0e0"/>
<rect x="323.508" y="196.187" width="1.5" height="2.58955" fill="#9040b0"/>
<rect x="323.304" y="195.567" width="1.5" height="1.75203" fill="#9040b0"/>
<rect x="317.914" y="210.358" width="1.5" height="1.94046" fill="#9040b0"/>
<rect x="320.083" y="201.552" width="1.5" height="2.91509" fill="#9040b0"/>
<rect x="314.36" y="203.794" width="1.5" height="1.97668" fill="#9040b0"/>
<rect x="323.824" y="214.589" width="1.5" height="1.23475" fill="#9040b0"/>
<rect x="327.936" y="209.985" width="1.5" height="2.20157" fill="#9040b0"/>
<polygon points="367,232 378,236 372,240 366,238" fill="#e01010"/>
<rect x="366" y="229" width="3" height="3" fill="#f0e000"/>
<polygon points="335,232 341,232 349,277 329,277" fill="url(#mesh)"/>
<path d="M335 232 L329 277" stroke="#3a1205" stroke-width="1.6" fill="none"/>
<path d="M341 232 L349 277" stroke="#3a1205" stroke-width="1.6" fill="none"/>
<path d="M338 232 L337 277" stroke="#3a1205" stroke-width="1.2" fill="none"/>
<path d="M334 232 L342 232" stroke="#3a1205" stroke-width="2" fill="none"/>
<polygon points="361,232 367,232 382,281 356,281" fill="url(#mesh)"/>
<path d="M361 232 L356 281" stroke="#3a1205" stroke-width="1.6" fill="none"/>
<path d="M367 232 L382 281" stroke="#3a1205" stroke-width="1.6" fill="none"/>
<path d="M364 232 L367 281" stroke="#3a1205" stroke-width="1.2" fill="none"/>
<path d="M360 232 L368 232" stroke="#3a1205" stroke-width="2" fill="none"/>
<path d="M592 284 L600 299" stroke="#200" stroke-width="1.2" fill="none"/>
<path d="M548 294 L556 296" stroke="#200" stroke-width="2" fill="none"/>
<polygon points="70,326 128,320 138,364 90,368" fill="url(#dots)"/>
<polygon points="132,318 180,314 192,360 148,362" fill="url(#dots)"/>
<polygon points="138,365.5 136,368.8 133.4,370.9 129.4,373 118.5,373.3 113.8,371.3 112.4,368.7 111.4,365.5 109.8,361.6 114.1,359.8 118.5,357.8 129.9,357.3 134.6,359.4 136.7,362" fill="#6e3a14"/>
<polygon points="175,357 200,372 206,395 192,380 184,400 178,375" fill="#6e3a14"/>
<polygon points="205,372 225,392 240,418 226,412 214,390" fill="#6e3a14"/>
<polygon points="228,385 248,410 252,425 238,415" fill="#6e3a14"/>
<polygon points="190,395 210,420 200,425" fill="#6e3a14"/>
<polygon points="222,420 255,412 258,448 235,440" fill="#20b090" opacity="0.8"/>
<polygon points="224,422 240,426 235,436" fill="#00f0f0"/>
<polygon points="190,396 198,400 196,412" fill="#00a87e"/>
<rect x="220.421" y="399.826" width="1.5" height="5.32301" fill="#4040e0"/>
<rect x="227.017" y="359.355" width="1.5" height="5.43688" fill="#6e3a14"/>
<rect x="213.47" y="394.993" width="1.5" height="2.25407" fill="#4040e0"/>
<rect x="228.784" y="401.524" width="1.5" height="2.17535" fill="#4040e0"/>
<rect x="205.711" y="405.813" width="1.5" height="3.75415" fill="#9400dc"/>
<rect x="217.384" y="356.607" width="1.5" height="5.69351" fill="#9400dc"/>
<rect x="228.769" y="369.897" width="1.5" height="3.84523" fill="#4040e0"/>
<rect x="238.29" y="366.544" width="1.5" height="2.58599" fill="#9400dc"/>
<rect x="210.903" y="377.732" width="1.5" height="5.78602" fill="#4040e0"/>
<rect x="224.564" y="393.357" width="1.5" height="4.02417" fill="#4040e0"/>
<rect x="227.428" y="387.147" width="1.5" height="5.39274" fill="#4040e0"/>
<rect x="223.234" y="362.482" width="1.5" height="5.08449" fill="#4040e0"/>
<rect x="211.534" y="383.173" width="1.5" height="5.20812" fill="#4040e0"/>
<rect x="227.661" y="406.213" width="1.5" height="3.11204" fill="#4040e0"/>
<rect x="215.764" y="380.288" width="1.5" height="4.58992" fill="#4040e0"/>
<rect x="245.052" y="383.131" width="1.5" height="4.05046" fill="#4040e0"/>
<path d="M151 403 L153 415" stroke="#00a87e" stroke-width="1.3" fill="none"/>
<rect x="0" y="324" width="14" height="40" fill="#120300"/>
<rect x="6" y="326" width="8" height="12" fill="#6e3a14"/>
<rect x="0" y="340" width="12" height="8" fill="#4a2208"/>
<rect x="2" y="350" width="12" height="4" fill="#00a87e"/>
<rect x="0" y="356" width="10" height="3" fill="#00f0f0"/>
<rect x="17" y="304" width="6" height="6" fill="#6e3a14"/>
<rect x="26" y="305" width="4" height="5" fill="#6e3a14"/>
<rect x="36" y="304" width="5" height="4" fill="#4a2208"/>
<polygon points="0,400 28,395 42,440 60,545 0,560" fill="#080000"/>
<polygon points="0,415 26,400 44,470 30,480 0,475" fill="url(#fence2)"/>
<polygon points="0,472 30,476 100,458 118,460 40,482 0,484" fill="url(#fence3)" opacity="0.8"/>
<path d="M18 398 L38 470" stroke="#6a3010" stroke-width="0.8" fill="none"/>
<path d="M20.6 401 L40.6 473" stroke="#6a3010" stroke-width="0.8" fill="none"/>
<path d="M23.2 404 L43.2 476" stroke="#6a3010" stroke-width="0.8" fill="none"/>
<path d="M25.8 407 L45.8 479" stroke="#6a3010" stroke-width="0.8" fill="none"/>
<path d="M28.4 410 L48.4 482" stroke="#6a3010" stroke-width="0.8" fill="none"/>
<path d="M31 413 L51 485" stroke="#6a3010" stroke-width="0.8" fill="none"/>
<path d="M33.6 416 L53.6 488" stroke="#6a3010" stroke-width="0.8" fill="none"/>
<path d="M36.2 419 L56.2 491" stroke="#6a3010" stroke-width="0.8" fill="none"/>
<path d="M70 478 L235 474" stroke="#300500" stroke-width="5" fill="none"/>
<path d="M40 505 L150 480" stroke="#300500" stroke-width="6" fill="none"/>
<path d="M95 508 L110 504" stroke="#300500" stroke-width="4" fill="none"/>
<path d="M175 520 L240 540" stroke="#300500" stroke-width="3" fill="none"/>
<path d="M220 505 L250 530" stroke="#300500" stroke-width="3" fill="none"/>
<path d="M175 548 L240 540" stroke="#300500" stroke-width="4" fill="none"/>
<path d="M0 535 L40 560" stroke="#300500" stroke-width="4" fill="none"/>
<path d="M5 555 L40 575" stroke="#300500" stroke-width="4" fill="none"/>
<path d="M120 455 L250 430" stroke="#300500" stroke-width="3" fill="none"/>
<path d="M190 430 L235 470" stroke="#300500" stroke-width="4" fill="none"/>
<path d="M60 445 L110 470" stroke="#300500" stroke-width="3" fill="none"/>
<polygon points="331,427 338,440 347,470 352,500 362,528 350,535 340,500 332,470 329,445" fill="#6e3a14"/>
<polygon points="322,495 345,490 352,515 335,520" fill="#6e3a14"/>
<polygon points="318,466 326,470 330,484 322,480" fill="#000"/>
<polygon points="268,472 276,476 274,490 266,486" fill="#000"/>
<polygon points="283,478 291,480 294,505 286,498" fill="#20a070"/>
<polygon points="284,480 288,482 290,498" fill="#c0b000"/>
<rect x="328" y="500" width="4" height="4" fill="#9400dc"/>
<rect x="349" y="506" width="3" height="5" fill="#9400dc"/>
<polygon points="333,533 344,528 348,556 340,552" fill="#e0e0e0"/>
<polygon points="352,543 412,501 416,506 365,548" fill="#00a87e"/>
<polygon points="358,527 380,512 384,520 362,536" fill="#00f0f0"/>
<polygon points="381,396 386,412 407,424 412,501 384,512 377,412" fill="#00a87e"/>
<polygon points="374,376 378,376 386,440 392,512 384,512 376,440" fill="#8a3a14"/>
<polygon points="375,412 385,414 390,462 381,462" fill="#6e3a14"/>
<polygon points="374,376 378,376 381,400 377,400" fill="#b40a0a"/>
<polygon points="404.5,386 407,386 416,480 418,500 412,501 409,440" fill="#b40a0a"/>
<polygon points="380,484 398,482 400,512 384,516" fill="#6e3a14"/>
<ellipse cx="342.5" cy="416" rx="17.5" ry="16" fill="#c0ccd6"/>
<ellipse cx="307" cy="425" rx="11" ry="15" fill="#c4ccd2"/>
<polygon points="475,414 520,406 522,470 478,480" fill="url(#dots2)"/>
<polygon points="460,392 464,392 468,482 463,483" fill="#6e3a14"/>
<polygon points="472,384 475,384 479,478 475,479" fill="#6e3a14"/>
<polygon points="463,400 468,398 470,420 464,422" fill="#6e3a14"/>
<path d="M445 403 L495 395" stroke="#4a1a05" stroke-width="1" fill="none"/>
<path d="M450 408 L500 399" stroke="#4a1a05" stroke-width="0.8" fill="none"/>
<polygon points="517,430 540,425 540,462 520,468" fill="#00a87e"/>
<polygon points="400,458 412,456 414,500 402,504" fill="#00a87e"/>
<rect x="516" y="388" width="24" height="5" fill="#f4f4f4" transform="rotate(-8 528 390)"/>
<rect x="518" y="347" width="9" height="2.5" fill="#9400dc" transform="rotate(-12 522 348)"/>
<rect x="535" y="376" width="2" height="16" fill="#9400dc"/>
<rect x="480" y="354" width="18" height="1.5" fill="#00f0f0" transform="rotate(-10 489 355)"/>
<rect x="413" y="366" width="30" height="1.5" fill="#00f0f0" transform="rotate(-10 428 367)"/>
<rect x="656" y="324" width="7" height="2" fill="#9400dc"/>
<polygon points="543,340 558,338 560,420 545,424" fill="url(#dots)"/>
<rect x="551" y="360" width="5" height="50" fill="#a0c0d8" opacity="0.7"/>
<path d="M541 372 L545 425" stroke="#b40a0a" stroke-width="2" fill="none"/>
<polygon points="590,340 640,341 712,352 712,358 650,355 600,350" fill="url(#dotsb)"/>
<polygon points="645,351 700,354 700,357 655,356" fill="#e08070" opacity="0.7"/>
<polygon points="664,330 668.5,330 668,427 662,429" fill="#b40a0a"/>
<polygon points="650,397 663,395 663,428 650,432" fill="#00a87e"/>
<rect x="665" y="336" width="3" height="12" fill="#9400dc"/>
<rect x="651" y="360" width="14" height="7" fill="#f4f4f4" transform="rotate(-10 658 363)"/>
<polygon points="612,368 617,375 622,385 624,420 612,422 613,395" fill="#6e3a14"/>
<polygon points="596,383 628,388 629,392 596,386" fill="#6e3a14"/>
<polygon points="598,400 615,405 615,409 598,403" fill="#6e3a14"/>
<polygon points="597,415 612,419 612,422 597,418" fill="#6e3a14"/>
<polygon points="600,424 626,422 628,440 602,444" fill="#b8341c"/>
<polygon points="588,432 640,430 645,455 600,470 585,455" fill="#4a1608"/>
<polygon points="568,450 590,444 592,470 570,474" fill="#2a0a04"/>
<rect x="593.937" y="434.768" width="2.92532" height="1.45703" fill="#b8341c"/>
<rect x="612.18" y="433.039" width="5.6833" height="1.96872" fill="#802010"/>
<rect x="630.337" y="453.895" width="5.03422" height="1.60324" fill="#802010"/>
<rect x="626.145" y="436.297" width="4.72534" height="1.92752" fill="#10c060"/>
<rect x="595.905" y="442.323" width="5.29708" height="2.60911" fill="#b8341c"/>
<rect x="632.567" y="445.227" width="2.46923" height="2.49538" fill="#d0d0e8"/>
<rect x="627.127" y="455.386" width="4.0638" height="2.12458" fill="#802010"/>
<rect x="627.138" y="451.68" width="4.35513" height="1.98781" fill="#10c060"/>
<rect x="622.218" y="435.869" width="3.70344" height="1.84265" fill="#10c060"/>
<rect x="600.61" y="447.58" width="4.06927" height="1.29482" fill="#d0d0e8"/>
<rect x="609.143" y="461.157" width="2.36134" height="1.03386" fill="#802010"/>
<rect x="592.414" y="446.872" width="2.69998" height="1.23983" fill="#b8341c"/>
<rect x="600.547" y="432.461" width="5.49522" height="2.878" fill="#d0d0e8"/>
<rect x="641.562" y="452.207" width="5.63919" height="2.8171" fill="#6e3a14"/>
<rect x="639.37" y="439.232" width="3.01929" height="2.39637" fill="#10c060"/>
<rect x="613.881" y="435.501" width="2.74482" height="2.61582" fill="#d0d0e8"/>
<rect x="592.434" y="449.812" width="5.94081" height="2.43034" fill="#10c060"/>
<rect x="644.472" y="461.043" width="3.69851" height="1.43147" fill="#802010"/>
<rect x="637.582" y="451.97" width="3.89395" height="2.78315" fill="#00f0f0"/>
<rect x="593.474" y="452.878" width="2.03142" height="1.81785" fill="#00f0f0"/>
<polygon points="628,450 640,448 640,462 630,466" fill="#d8d8d8"/>
<rect x="632" y="463" width="6" height="4" fill="#00f0f0"/>
<polygon points="640,452 690,446 690,454 645,462" fill="#4a1008"/>
<polygon points="547,428 553,440 560,447 573,445 560,452 548,455" fill="#6e3a14"/>
<polygon points="552,437 572,447 560,453 550,448" fill="#00f0f0"/>
<polygon points="520,432 538,430 545,470 528,476" fill="#4a2a10"/>
<polygon points="520,434 532,432 536,466 524,470" fill="url(#dots)"/>
<polygon points="546,462 590,462 588,466 548,468" fill="#00a87e"/>
<rect x="684" y="372" width="3" height="20" fill="url(#dots)"/>
<rect x="688" y="384" width="3" height="20" fill="url(#dots)"/>
<rect x="693" y="392" width="3" height="12" fill="url(#dots)"/>
<rect x="704" y="368" width="3" height="22" fill="url(#dots)"/>
<rect x="708" y="374" width="3" height="20" fill="url(#dots)"/>
<polygon points="682,405 703,402 703,408 683,411" fill="#6e3a14"/>
<rect x="773" y="367" width="6" height="14" fill="url(#dots)"/>
<rect x="768" y="340" width="1.5" height="10" fill="#222"/>
<polygon points="776,378 786,380 786,383 776,382" fill="#00a87e"/>
<polygon points="760,394 768,392 768,398 760,400" fill="#00a87e"/>
<rect x="673" y="452" width="6" height="12" fill="#e0e0e0"/>
<polygon points="672,455 682,450 685,468 676,470" fill="#101010"/>
<rect x="674" y="456" width="5" height="8" fill="#00f0f0" opacity="0.8"/>
<rect x="693" y="440" width="1.5" height="12" fill="#fff"/>
<rect x="698" y="438" width="1.2" height="10" fill="#fff"/>
<polygon points="300,601 322,585 390,577 392,582 345,601" fill="url(#fence3)"/>
<path d="M376 580 L370 590" stroke="#10a0f0" stroke-width="1" fill="none"/>
<path d="M379.5 580.2 L373.5 590" stroke="#10a0f0" stroke-width="1" fill="none"/>
<path d="M383 580.4 L377 590" stroke="#10a0f0" stroke-width="1" fill="none"/>
<path d="M386.5 580.6 L380.5 590" stroke="#10a0f0" stroke-width="1" fill="none"/>
<path d="M390 580.8 L384 590" stroke="#10a0f0" stroke-width="1" fill="none"/>
<path d="M393.5 581 L387.5 590" stroke="#10a0f0" stroke-width="1" fill="none"/>
<path d="M397 581.2 L391 590" stroke="#10a0f0" stroke-width="1" fill="none"/>
<path d="M400.5 581.4 L394.5 590" stroke="#10a0f0" stroke-width="1" fill="none"/>
<rect x="494" y="555" width="8" height="10" fill="#c8d0d8"/>
<rect x="495" y="570" width="8" height="31" fill="#4a1c0a"/>
<rect x="508" y="590" width="8" height="11" fill="#3a1408"/>
<polygon points="555,500 580,495 582,540 560,545" fill="#1a0503"/>
<rect x="580.431" y="529.211" width="1.5" height="1.5" fill="#00f0f0"/>
<rect x="572.926" y="517.581" width="1.5" height="1.5" fill="#00f0f0"/>
<rect x="572.604" y="512.99" width="1.5" height="1.5" fill="#10a0f0"/>
<rect x="573.463" y="533.803" width="1.5" height="1.5" fill="#802010"/>
<rect x="575.843" y="513.226" width="1.5" height="1.5" fill="#802010"/>
<rect x="580.939" y="513.098" width="1.5" height="1.5" fill="#802010"/>
<rect x="560.416" y="510.017" width="1.5" height="1.5" fill="#802010"/>
<rect x="563.854" y="520.009" width="1.5" height="1.5" fill="#00f0f0"/>
<rect x="569.855" y="512.882" width="1.5" height="1.5" fill="#00f0f0"/>
<rect x="563.765" y="512.244" width="1.5" height="1.5" fill="#802010"/>
<rect x="563.274" y="539.213" width="1.5" height="1.5" fill="#10a0f0"/>
<rect x="565.603" y="523.436" width="1.5" height="1.5" fill="#10a0f0"/>
<rect x="569.827" y="529.031" width="1.5" height="1.5" fill="#10a0f0"/>
<rect x="565.764" y="517.545" width="1.5" height="1.5" fill="#802010"/>
<rect x="483" y="518" width="2" height="8" fill="#10a0f0"/>
<rect x="130.678" y="462.702" width="1.19754" height="1.32055" fill="#300500"/>
<rect x="137.009" y="569.167" width="1.45744" height="2.2793" fill="#300500"/>
<rect x="122.267" y="492.068" width="1.07263" height="2.23951" fill="#00a87e"/>
<rect x="198.012" y="596.229" width="1.78803" height="2.02293" fill="#300500"/>
<rect x="774.967" y="570.406" width="1.19279" height="2.37028" fill="#00a87e"/>
<rect x="646.945" y="517.183" width="1.89588" height="1.20607" fill="#00a87e"/>
<rect x="265.642" y="545.857" width="1.81504" height="1.00357" fill="#00a87e"/>
<rect x="590.576" y="461.697" width="2.44295" height="1.13713" fill="#00f0f0"/>
<rect x="650.058" y="523.503" width="1.49021" height="1.37286" fill="#300500"/>
<rect x="651.556" y="563.833" width="2.01573" height="2.04537" fill="#00f0f0"/>
<rect x="551.508" y="580.437" width="1.98088" height="1.17028" fill="#00f0f0"/>
<rect x="18.0506" y="526.276" width="2.29862" height="1.1172" fill="#00a87e"/>
<rect x="462.739" y="503.048" width="1.36321" height="2.47258" fill="#300500"/>
<rect x="358.965" y="574.259" width="1.45793" height="2.48667" fill="#00f0f0"/>
<rect x="314.128" y="562.561" width="2.17355" height="1.82954" fill="#00a87e"/>
<rect x="79.6124" y="463.808" width="2.20856" height="2.4679" fill="#00a87e"/>
<rect x="561.455" y="485.072" width="1.41118" height="1.91513" fill="#10a0f0"/>
<rect x="777.979" y="437.377" width="1.91859" height="1.52489" fill="#10a0f0"/>
<rect x="516.878" y="487.75" width="1.40368" height="1.93804" fill="#00a87e"/>
<rect x="758.955" y="517.746" width="1.44287" height="1.86599" fill="#00f0f0"/>
<rect x="436.711" y="435.215" width="1.55169" height="1.77116" fill="#10a0f0"/>
<rect x="437.355" y="553.589" width="2.34104" height="1.70248" fill="#00f0f0"/>
<rect x="294.178" y="444.642" width="1.97536" height="2.25502" fill="#00f0f0"/>
<rect x="475.765" y="562.925" width="1.19324" height="1.44153" fill="#00a87e"/>
<rect x="762.726" y="516.104" width="1.23686" height="2.33797" fill="#00a87e"/>
<rect x="122.681" y="542.03" width="1.4788" height="1.20069" fill="#10a0f0"/>
<rect x="351.81" y="460.664" width="1.45452" height="1.20328" fill="#300500"/>
<rect x="436.168" y="498.637" width="2.20025" height="1.13176" fill="#300500"/>
<rect x="478.798" y="507.672" width="2.12023" height="1.14201" fill="#300500"/>
<rect x="437.709" y="536.709" width="2.30162" height="1.85111" fill="#300500"/>
<rect x="76.9715" y="578.771" width="1.48305" height="1.61124" fill="#300500"/>
<rect x="77.3381" y="460.618" width="2.40564" height="1.63224" fill="#300500"/>
<rect x="250.681" y="454.727" width="2.14237" height="2.03978" fill="#300500"/>
<rect x="274.47" y="540.745" width="2.38595" height="1.68527" fill="#00a87e"/>
<rect x="641.539" y="487.753" width="1.48179" height="1.76987" fill="#00a87e"/>
<rect x="248.508" y="439.452" width="2.06684" height="1.79595" fill="#00a87e"/>
<rect x="680.562" y="559.214" width="1.83292" height="1.54376" fill="#300500"/>
<rect x="108.998" y="441.954" width="2.30211" height="1.94262" fill="#00a87e"/>
<rect x="154.122" y="593.917" width="1.05881" height="2.21498" fill="#300500"/>
<rect x="223.499" y="585.884" width="1.27089" height="2.37029" fill="#300500"/>
<rect x="71.0953" y="586.372" width="1.15436" height="1.20814" fill="#00a87e"/>
<rect x="349.254" y="535.94" width="2.24434" height="1.00178" fill="#10a0f0"/>
<rect x="40.846" y="431.81" width="1.35536" height="2.16835" fill="#10a0f0"/>
<rect x="298.157" y="579.62" width="1.22377" height="2.27792" fill="#00a87e"/>
<rect x="455.169" y="594.631" width="2.21333" height="1.00701" fill="#10a0f0"/>
<rect x="537.522" y="481.713" width="2.09774" height="1.73013" fill="#00f0f0"/>
<rect x="287.442" y="579.866" width="2.02697" height="1.67597" fill="#300500"/>
<rect x="473.621" y="542.387" width="1.497" height="1.97668" fill="#00a87e"/>
<rect x="708.833" y="551.4" width="1.7341" height="2.2748" fill="#10a0f0"/>
<rect x="7.07753" y="511.274" width="2.24223" height="1.59677" fill="#300500"/>
<rect x="785.37" y="540.266" width="1.06795" height="1.18472" fill="#00f0f0"/>
<rect x="69.8778" y="498.039" width="1.34907" height="1.98235" fill="#00a87e"/>
<rect x="61.7524" y="584.513" width="2.25734" height="1.83798" fill="#300500"/>
<rect x="458.241" y="520.153" width="1.80908" height="1.72964" fill="#00a87e"/>
<rect x="171.702" y="503.249" width="1.62004" height="1.76455" fill="#00a87e"/>
<rect x="99.6654" y="501.83" width="2.47911" height="2.25167" fill="#10a0f0"/>
<rect x="175.088" y="467.71" width="1.0351" height="1.4105" fill="#00f0f0"/>
<rect x="12.0032" y="501.149" width="2.3793" height="2.18174" fill="#300500"/>
<rect x="471.907" y="480.976" width="2.10223" height="2.03377" fill="#00a87e"/>
<rect x="134.206" y="507.234" width="2.2854" height="1.60187" fill="#00f0f0"/>
<rect x="400.183" y="165.919" width="1.2" height="1.37223" fill="#2a2050"/>
<rect x="701.675" y="208.643" width="1.2" height="2.63221" fill="#300500"/>
<rect x="693.501" y="96.577" width="1.2" height="1.73844" fill="#2a2050"/>
<rect x="778.769" y="75.0251" width="1.2" height="1.01251" fill="#402000"/>
<rect x="727.952" y="124.725" width="1.2" height="2.50311" fill="#402000"/>
<rect x="301.092" y="184.164" width="1.2" height="2.63191" fill="#300500"/>
<rect x="188.362" y="228.825" width="1.2" height="2.17892" fill="#300500"/>
<rect x="397.058" y="231.943" width="1.2" height="1.62758" fill="#300500"/>
<rect x="743.725" y="73.6995" width="1.2" height="1.74648" fill="#300500"/>
<rect x="450.457" y="227.251" width="1.2" height="1.50695" fill="#300500"/>
<rect x="114.775" y="150.999" width="1.2" height="2.39245" fill="#402000"/>
<rect x="113.208" y="155.041" width="1.2" height="2.41985" fill="#300500"/>
<rect x="700.24" y="101.212" width="1.2" height="2.64196" fill="#300500"/>
<rect x="312.796" y="59.4135" width="1.2" height="1.59062" fill="#300500"/>
<rect x="328.066" y="159.724" width="1.2" height="1.47324" fill="#2a2050"/>
<rect x="536.326" y="72.1106" width="1.2" height="2.84022" fill="#300500"/>
<rect x="448.637" y="100.859" width="1.2" height="1.19614" fill="#300500"/>
<rect x="601.757" y="196.085" width="1.2" height="2.69632" fill="#300500"/>
<rect x="640.054" y="229.564" width="1.2" height="2.85279" fill="#2a2050"/>
<rect x="650.559" y="223.392" width="1.2" height="1.68026" fill="#300500"/>
<rect x="548.933" y="206.726" width="1.2" height="1.81781" fill="#2a2050"/>
<rect x="479.026" y="202.431" width="1.2" height="1.16983" fill="#300500"/>
<rect x="456.079" y="209.272" width="1.2" height="1.11486" fill="#300500"/>
<rect x="310.826" y="128.491" width="1.2" height="2.69335" fill="#402000"/>
<rect x="373.193" y="55.5251" width="1.2" height="1.18477" fill="#2a2050"/>
<rect x="156.256" y="100.983" width="1.2" height="2.61508" fill="#300500"/>
<rect x="581.632" y="232.211" width="1.2" height="1.05459" fill="#402000"/>
<rect x="293.588" y="65.847" width="1.2" height="1.52694" fill="#300500"/>
<rect x="489.216" y="231.518" width="1.2" height="1.4187" fill="#300500"/>
<rect x="526.789" y="96.3179" width="1.2" height="1.46043" fill="#300500"/>
<rect x="380.612" y="232.493" width="1.2" height="1.64866" fill="#402000"/>
<rect x="786.28" y="223.211" width="1.2" height="2.59045" fill="#300500"/>
<rect x="571.21" y="113.324" width="1.2" height="2.59274" fill="#300500"/>
<rect x="450.761" y="177.31" width="1.2" height="1.19346" fill="#2a2050"/>
<rect x="730.241" y="73.9238" width="1.2" height="2.49248" fill="#402000"/>
<rect x="682.598" y="70.1125" width="1.2" height="2.35224" fill="#300500"/>
<rect x="405.024" y="140.051" width="1.2" height="2.37142" fill="#2a2050"/>
<rect x="691.382" y="144.298" width="1.2" height="2.85941" fill="#402000"/>
<rect x="461.37" y="216.366" width="1.2" height="2.98964" fill="#2a2050"/>
<rect x="176.626" y="122.043" width="1.2" height="2.19216" fill="#300500"/>
<path d="M647.081 232.97 L645.081 241.966" stroke="#3a0600" stroke-width="1" fill="none"/>
<path d="M674.386 246.635 L672.386 252.818" stroke="#3a0600" stroke-width="1" fill="none"/>
<path d="M723.916 264.994 L721.916 270.011" stroke="#3a0600" stroke-width="1" fill="none"/>
<path d="M665.649 249.126 L663.649 253.452" stroke="#3a0600" stroke-width="1" fill="none"/>
<path d="M658.175 221.207 L656.175 228.931" stroke="#3a0600" stroke-width="1" fill="none"/>
<path d="M719.808 269.737 L717.808 277.085" stroke="#3a0600" stroke-width="1" fill="none"/>
<path d="M600.287 198.923 L598.287 203.106" stroke="#3a0600" stroke-width="1" fill="none"/>
<path d="M682.012 196.487 L680.012 203.117" stroke="#3a0600" stroke-width="1" fill="none"/>
<path d="M720.191 215.171 L718.191 223.452" stroke="#3a0600" stroke-width="1" fill="none"/>
<path d="M678.585 247.797 L676.585 253.586" stroke="#3a0600" stroke-width="1" fill="none"/>
<path d="M717.793 240.641 L715.793 245.956" stroke="#3a0600" stroke-width="1" fill="none"/>
<path d="M748.169 200.302 L746.169 205.549" stroke="#3a0600" stroke-width="1" fill="none"/>
<path d="M660.937 243.518 L658.937 250.021" stroke="#3a0600" stroke-width="1" fill="none"/>
<path d="M606.94 211.447 L604.94 218.495" stroke="#3a0600" stroke-width="1" fill="none"/>
<rect x="755" y="268" width="2.5" height="12" fill="#3a0600"/>
<ellipse cx="755" cy="264.5" rx="2.5" ry="2.5" fill="#10a0f0"/>
<rect x="779" y="262" width="2" height="12" fill="#3a0600"/>
<rect x="778.5" y="258" width="3" height="3" fill="#10a0f0"/>
<rect x="639" y="325" width="2" height="2" fill="#00f0f0"/>
<rect x="591" y="382" width="2" height="3" fill="#3a0a00"/>
<rect x="496" y="404" width="1" height="3" fill="#3a0a00"/>
<rect x="566" y="407" width="2" height="2" fill="#a8b8c8"/>
<rect x="35" y="378" width="1" height="1" fill="#a8b8c8"/>
<rect x="358" y="481" width="1" height="1" fill="#e8e8e8"/>
<rect x="624" y="410" width="1" height="2" fill="#3a0a00"/>
<rect x="30" y="321" width="2" height="3" fill="#e8e8e8"/>
<rect x="751" y="391" width="1" height="3" fill="#6e3a14"/>
<rect x="772" y="395" width="2" height="3" fill="#6e3a14"/>
<rect x="193" y="375" width="1" height="1" fill="#a8b8c8"/>
<rect x="285" y="453" width="1" height="1" fill="#e8e8e8"/>
<rect x="557" y="420" width="1" height="2" fill="#6e3a14"/>
<rect x="178" y="404" width="1" height="1" fill="#6e3a14"/>
<rect x="459" y="394" width="1" height="1" fill="#00f0f0"/>
<rect x="94" y="372" width="1" height="1" fill="#3a0a00"/>
<rect x="681" y="320" width="1" height="1" fill="#3a0a00"/>
<rect x="494" y="352" width="1" height="1" fill="#00f0f0"/>
<rect x="733" y="340" width="2" height="2" fill="#a8b8c8"/>
<rect x="65" y="370" width="1" height="2" fill="#e8e8e8"/>
<rect x="528" y="433" width="1" height="3" fill="#e8e8e8"/>
<rect x="626" y="329" width="1" height="3" fill="#3a0a00"/>
<rect x="25" y="360" width="1" height="2" fill="#00f0f0"/>
<rect x="206" y="375" width="1" height="2" fill="#00f0f0"/>
<rect x="407" y="371" width="2" height="1" fill="#9400dc"/>
<rect x="381" y="451" width="1" height="1" fill="#9400dc"/>
<rect x="741" y="404" width="1" height="2" fill="#3a0a00"/>
<rect x="639" y="422" width="1" height="3" fill="#3a0a00"/>
<rect x="151" y="380" width="2" height="2" fill="#6e3a14"/>
<rect x="233" y="345" width="2" height="1" fill="#00f0f0"/>
<rect x="535" y="354" width="1" height="1" fill="#00f0f0"/>
<rect x="345" y="422" width="1" height="2" fill="#6e3a14"/>
<rect x="178" y="343" width="1" height="2" fill="#00f0f0"/>
<rect x="288" y="504" width="1" height="1" fill="#3a0a00"/>
<rect x="473" y="422" width="2" height="1" fill="#3a0a00"/>
<rect x="597" y="324" width="1" height="3" fill="#a8b8c8"/>
<rect x="342" y="522" width="2" height="2" fill="#a8b8c8"/>
<rect x="452" y="429" width="2" height="3" fill="#6e3a14"/>
<rect x="729" y="310" width="1" height="1" fill="#a8b8c8"/>
<rect x="146" y="392" width="1" height="2" fill="#6e3a14"/>
<rect x="394" y="398" width="2" height="2" fill="#a8b8c8"/>
<rect x="632" y="361" width="2" height="1" fill="#9400dc"/>
<rect x="362" y="382" width="2" height="2" fill="#3a0a00"/>
<rect x="249" y="413" width="1" height="1" fill="#3a0a00"/>
<rect x="386" y="364" width="1" height="3" fill="#a8b8c8"/>
<rect x="235" y="381" width="1" height="3" fill="#a8b8c8"/>
<rect x="335" y="439" width="1" height="1" fill="#3a0a00"/>
<rect x="192" y="376" width="2" height="2" fill="#6e3a14"/>
<rect x="467" y="419" width="2" height="3" fill="#3a0a00"/>
<rect x="590" y="386" width="1" height="2" fill="#9400dc"/>
<rect x="722" y="385" width="2" height="1" fill="#a8b8c8"/>
<rect x="190" y="362" width="2" height="3" fill="#9400dc"/>
<rect x="108" y="348" width="1" height="3" fill="#3a0a00"/>
<rect x="627" y="327" width="1" height="2" fill="#3a0a00"/>
<rect x="643" y="408" width="1" height="2" fill="#9400dc"/>
<rect x="554" y="346" width="2" height="1" fill="#9400dc"/>
<rect x="192" y="361" width="1" height="2" fill="#3a0a00"/>
<rect x="574" y="417" width="1" height="2" fill="#a8b8c8"/>
<rect x="687" y="338" width="2" height="1" fill="#6e3a14"/>
<rect x="750" y="331" width="1" height="1" fill="#3a0a00"/>
<rect x="569" y="424" width="1" height="1" fill="#a8b8c8"/>
<rect x="73" y="389" width="1" height="2" fill="#9400dc"/>
<rect x="107" y="357" width="1" height="1" fill="#6e3a14"/>
<rect x="100" y="405" width="1" height="1" fill="#e8e8e8"/>
<rect x="162" y="364" width="1" height="3" fill="#00f0f0"/>
<rect x="100" y="354" width="1" height="3" fill="#a8b8c8"/>
<rect x="78" y="389" width="1" height="1" fill="#e8e8e8"/>
<rect x="415" y="424" width="1" height="3" fill="#3a0a00"/>
<rect x="92" y="375" width="1" height="2" fill="#3a0a00"/>
<rect x="681" y="329" width="1" height="3" fill="#9400dc"/>
<rect x="79" y="340" width="1" height="1" fill="#a8b8c8"/>
<rect x="92" y="377" width="2" height="3" fill="#6e3a14"/>
<rect x="654" y="342" width="2" height="2" fill="#6e3a14"/>
<rect x="610" y="419" width="1" height="1" fill="#3a0a00"/>
<rect x="157" y="311" width="1" height="2" fill="#3a0a00"/>
<rect x="580" y="387" width="1" height="2" fill="#00f0f0"/>
<rect x="674" y="385" width="1" height="3" fill="#00f0f0"/>
<rect x="311" y="439" width="1" height="1" fill="#00f0f0"/>
<rect x="465" y="374" width="1" height="3" fill="#9400dc"/>
<rect x="220" y="423" width="1" height="3" fill="#9400dc"/>
<rect x="91" y="326" width="2" height="1" fill="#6e3a14"/>
<rect x="427" y="351" width="1" height="2" fill="#9400dc"/>
<rect x="304" y="371" width="1" height="3" fill="#3a0a00"/>
<rect x="249" y="442" width="2" height="2" fill="#a8b8c8"/>
<rect x="143" y="384" width="2" height="2" fill="#3a0a00"/>
<rect x="186" y="359" width="1" height="3" fill="#3a0a00"/>
<rect x="515" y="412" width="2" height="3" fill="#9400dc"/>
<rect x="723" y="408" width="1" height="2" fill="#e8e8e8"/>
<rect x="744" y="390" width="1" height="1" fill="#a8b8c8"/>
<rect x="439" y="382" width="1" height="1" fill="#6e3a14"/>
<rect x="319" y="386" width="2" height="1" fill="#00f0f0"/>
<rect x="519" y="415" width="1" height="2" fill="#3a0a00"/>
<rect x="132" y="379" width="2" height="1" fill="#3a0a00"/>
<rect x="335" y="455" width="2" height="3" fill="#6e3a14"/>
<rect x="614" y="401" width="2" height="3" fill="#3a0a00"/>
<rect x="271" y="473" width="1" height="3" fill="#6e3a14"/>
<rect x="685" y="425" width="1" height="1" fill="#a8b8c8"/>
<rect x="579" y="333" width="1" height="2" fill="#e8e8e8"/>
<rect x="527" y="463" width="2" height="2" fill="#9400dc"/>
<rect x="723" y="371" width="1" height="1" fill="#e8e8e8"/>
<rect x="141" y="411" width="1" height="2" fill="#00f0f0"/>
<rect x="689" y="446" width="1" height="1" fill="#3a0a00"/>
<rect x="392" y="500" width="1" height="3" fill="#a8b8c8"/>
<rect x="747" y="399" width="2" height="3" fill="#6e3a14"/>
<rect x="119" y="371" width="2" height="3" fill="#3a0a00"/>
<rect x="659" y="407" width="1" height="3" fill="#6e3a14"/>
<rect x="522" y="455" width="1" height="2" fill="#00f0f0"/>
<rect x="520" y="336" width="1" height="2" fill="#6e3a14"/>
<rect x="483" y="471" width="1" height="3" fill="#a8b8c8"/>
<rect x="303" y="428" width="1" height="2" fill="#a8b8c8"/>
<rect x="73" y="382" width="2" height="1" fill="#6e3a14"/>
<rect x="400" y="360" width="2" height="1" fill="#6e3a14"/>
<rect x="232" y="418" width="1" height="2" fill="#3a0a00"/>
<rect x="242" y="424" width="1" height="1" fill="#3a0a00"/>
<rect x="733" y="312" width="1" height="3" fill="#6e3a14"/>
<rect x="318" y="398" width="2" height="2" fill="#a8b8c8"/>
<rect x="705" y="375" width="2" height="3" fill="#3a0a00"/>
<rect x="577" y="434" width="1" height="1" fill="#9400dc"/>
<rect x="707" y="384" width="1" height="1" fill="#9400dc"/>
<rect x="461" y="348" width="2" height="3" fill="#a8b8c8"/>
<rect x="585" y="336" width="1" height="2" fill="#a8b8c8"/>
<rect x="568" y="426" width="1" height="2" fill="#e8e8e8"/>
<rect x="73" y="411" width="1" height="2" fill="#6e3a14"/>
<rect x="780" y="314" width="1" height="2" fill="#3a0a00"/>
<rect x="577" y="433" width="1" height="2" fill="#6e3a14"/>
<rect x="439" y="488" width="1" height="3" fill="#e8e8e8"/>
<rect x="422" y="410" width="1" height="1" fill="#6e3a14"/>
<rect x="332" y="508" width="2" height="3" fill="#3a0a00"/>
<rect x="132" y="360" width="1" height="2" fill="#00f0f0"/>
<rect x="353" y="396" width="2" height="2" fill="#00f0f0"/>
<rect x="67" y="418" width="2" height="2" fill="#6e3a14"/>
<rect x="168" y="380" width="2" height="2" fill="#a8b8c8"/>
<rect x="723" y="349" width="2" height="1" fill="#e8e8e8"/>
<rect x="335" y="463" width="1" height="2" fill="#a8b8c8"/>
<rect x="467" y="381" width="1" height="1" fill="#00f0f0"/>
<rect x="246" y="411" width="1" height="3" fill="#a8b8c8"/>
<rect x="199" y="357" width="1" height="1" fill="#6e3a14"/>
<rect x="76" y="413" width="1" height="3" fill="#e8e8e8"/>
<rect x="90" y="384" width="1" height="3" fill="#a8b8c8"/>
<rect x="77" y="392" width="1" height="2" fill="#3a0a00"/>
<rect x="305" y="418" width="1" height="1" fill="#a8b8c8"/>
<rect x="680" y="315" width="1" height="2" fill="#e8e8e8"/>
<rect x="39" y="330" width="1" height="3" fill="#a8b8c8"/>
<rect x="226" y="372" width="1" height="3" fill="#6e3a14"/>
<rect x="131" y="426" width="1" height="1" fill="#a8b8c8"/>
<rect x="235" y="399" width="2" height="3" fill="#a8b8c8"/>
<rect x="445" y="375" width="1" height="2" fill="#3a0a00"/>
<rect x="519" y="387" width="1" height="1" fill="#e8e8e8"/>
<rect x="634" y="353" width="1" height="3" fill="#6e3a14"/>
<rect x="319" y="428" width="2" height="3" fill="#00f0f0"/>
<rect x="442" y="389" width="1" height="2" fill="#a8b8c8"/>
<rect x="732" y="312" width="2" height="1" fill="#6e3a14"/>
<rect x="317" y="492" width="2" height="3" fill="#6e3a14"/>
<rect x="106" y="429" width="2" height="1" fill="#00f0f0"/>
<rect x="394" y="497" width="1" height="2" fill="#3a0a00"/>
<rect x="83" y="328" width="2" height="3" fill="#3a0a00"/>
<rect x="368" y="390" width="2" height="1" fill="#9400dc"/>
<rect x="324" y="506" width="2" height="1" fill="#e8e8e8"/>
<rect x="279" y="489" width="2" height="3" fill="#9400dc"/>
<rect x="368" y="391" width="2" height="3" fill="#00f0f0"/>
<rect x="495" y="350" width="1" height="2" fill="#3a0a00"/>
<rect x="483" y="422" width="1" height="1" fill="#6e3a14"/>
<rect x="695" y="352" width="1" height="3" fill="#6e3a14"/>
<rect x="40" y="383" width="1" height="3" fill="#e8e8e8"/>
<rect x="616" y="402" width="2" height="2" fill="#3a0a00"/>
<rect x="91" y="424" width="1" height="3" fill="#6e3a14"/>
<rect x="131" y="408" width="1" height="3" fill="#6e3a14"/>
<rect x="413" y="467" width="1" height="2" fill="#9400dc"/>
<rect x="654" y="414" width="1" height="2" fill="#3a0a00"/>
<rect x="191" y="411" width="1" height="3" fill="#9400dc"/>
<rect x="184" y="380" width="1" height="1" fill="#e8e8e8"/>
<rect x="177" y="335" width="2" height="1" fill="#3a0a00"/>
<rect x="52" y="362" width="1" height="1" fill="#e8e8e8"/>
<rect x="528" y="343" width="2" height="1" fill="#9400dc"/>
<rect x="659" y="325" width="1" height="3" fill="#e8e8e8"/>
<rect x="478" y="485" width="1" height="3" fill="#9400dc"/>
<rect x="590" y="442" width="1" height="2" fill="#e8e8e8"/>
<rect x="339" y="365" width="2" height="3" fill="#9400dc"/>
<rect x="637" y="361" width="2" height="3" fill="#3a0a00"/>
<rect x="530" y="339" width="1" height="2" fill="#6e3a14"/>
<rect x="449" y="485" width="1" height="1" fill="#6e3a14"/>
<rect x="25" y="329" width="1" height="1" fill="#a8b8c8"/>
<rect x="617" y="418" width="1" height="2" fill="#3a0a00"/>
<rect x="452" y="421" width="1" height="2" fill="#6e3a14"/>
<rect x="72" y="385" width="1" height="2" fill="#a8b8c8"/>
<rect x="668" y="417" width="2" height="2" fill="#6e3a14"/>
<rect x="220" y="352" width="1" height="3" fill="#3a0a00"/>
<rect x="643" y="361" width="1" height="1" fill="#3a0a00"/>
<rect x="385" y="410" width="2" height="1" fill="#3a0a00"/>
<rect x="218" y="347" width="1" height="3" fill="#6e3a14"/>
<rect x="298" y="502" width="1" height="3" fill="#a8b8c8"/>
<rect x="380" y="475" width="2" height="3" fill="#e8e8e8"/>
<rect x="636" y="359" width="2" height="3" fill="#3a0a00"/>
<rect x="169" y="391" width="2" height="1" fill="#a8b8c8"/>
<rect x="582" y="454" width="2" height="2" fill="#00f0f0"/>
<rect x="416" y="424" width="1" height="1" fill="#a8b8c8"/>
<rect x="547" y="417" width="2" height="3" fill="#6e3a14"/>
<rect x="762" y="347" width="1" height="1" fill="#9400dc"/>
<rect x="238" y="405" width="1" height="2" fill="#6e3a14"/>
<rect x="684" y="359" width="1" height="3" fill="#00f0f0"/>
<rect x="437" y="457" width="1" height="1" fill="#3a0a00"/>
<rect x="574" y="395" width="1" height="3" fill="#3a0a00"/>
<rect x="263" y="421" width="2" height="1" fill="#3a0a00"/>
<rect x="622" y="434" width="1" height="1" fill="#a8b8c8"/>
<rect x="81" y="428" width="1" height="3" fill="#3a0a00"/>
<rect x="628" y="373" width="2" height="1" fill="#e8e8e8"/>
<rect x="492" y="389" width="1" height="2" fill="#a8b8c8"/>
<rect x="601" y="328" width="1" height="2" fill="#e8e8e8"/>
<rect x="478" y="481" width="2" height="1" fill="#a8b8c8"/>
<rect x="360" y="365" width="2" height="1" fill="#6e3a14"/>
<rect x="430" y="374" width="1" height="2" fill="#a8b8c8"/>
<rect x="71" y="357" width="1" height="3" fill="#e8e8e8"/>
<rect x="214" y="409" width="1" height="3" fill="#6e3a14"/>
<rect x="114" y="324" width="2" height="2" fill="#3a0a00"/>
<rect x="750" y="351" width="2" height="1" fill="#3a0a00"/>
<rect x="344" y="483" width="2" height="2" fill="#a8b8c8"/>
<rect x="197" y="410" width="1" height="3" fill="#6e3a14"/>
<rect x="152" y="377" width="1" height="3" fill="#e8e8e8"/>
<rect x="476" y="471" width="2" height="2" fill="#e8e8e8"/>
<rect x="232" y="419" width="1" height="1" fill="#6e3a14"/>
<rect x="319" y="453" width="1" height="3" fill="#6e3a14"/>
<rect x="409" y="434" width="1" height="3" fill="#3a0a00"/>
<rect x="53" y="399" width="1" height="2" fill="#a8b8c8"/>
<rect x="239" y="349" width="1" height="1" fill="#a8b8c8"/>
<rect x="582" y="385" width="1" height="1" fill="#e8e8e8"/>
<rect x="609" y="367" width="2" height="1" fill="#00f0f0"/>
<rect x="635" y="374" width="1" height="3" fill="#6e3a14"/>
<rect x="338" y="381" width="2" height="2" fill="#9400dc"/>
<rect x="606" y="340" width="1" height="1" fill="#a8b8c8"/>
<rect x="63" y="373" width="2" height="2" fill="#6e3a14"/>
<rect x="397" y="464" width="1" height="1" fill="#00f0f0"/>
<rect x="211" y="393" width="2" height="1" fill="#3a0a00"/>
<rect x="237" y="397" width="2" height="3" fill="#6e3a14"/>
<rect x="513" y="477" width="2" height="3" fill="#6e3a14"/>
<rect x="141" y="357" width="1" height="3" fill="#3a0a00"/>
<rect x="574" y="349" width="1" height="1" fill="#6e3a14"/>
<rect x="142" y="332" width="2" height="2" fill="#00f0f0"/>
<rect x="436" y="484" width="2" height="1" fill="#a8b8c8"/>
<rect x="49" y="427" width="2" height="3" fill="#6e3a14"/>
<rect x="604" y="346" width="2" height="1" fill="#a8b8c8"/>
<rect x="107" y="329" width="2" height="2" fill="#3a0a00"/>
<rect x="578" y="336" width="2" height="3" fill="#e8e8e8"/>
<rect x="38" y="358" width="2" height="2" fill="#9400dc"/>
<rect x="296" y="419" width="2" height="3" fill="#00f0f0"/>
<rect x="414" y="477" width="1" height="1" fill="#9400dc"/>
<rect x="439" y="395" width="1" height="1" fill="#a8b8c8"/>
<rect x="189" y="372" width="2" height="2" fill="#6e3a14"/>
<rect x="192" y="418" width="2" height="1" fill="#3a0a00"/>
<rect x="520" y="380" width="1" height="3" fill="#3a0a00"/>
<rect x="443" y="434" width="1" height="3" fill="#6e3a14"/>
<rect x="733" y="361" width="1" height="2" fill="#a8b8c8"/>
<rect x="340" y="454" width="2" height="3" fill="#3a0a00"/>
<rect x="628" y="327" width="1" height="3" fill="#e8e8e8"/>
<rect x="180" y="333" width="1" height="1" fill="#6e3a14"/>
<rect x="347" y="451" width="1" height="2" fill="#3a0a00"/>
<rect x="67" y="327" width="1" height="2" fill="#6e3a14"/>
<rect x="459" y="374" width="1" height="3" fill="#6e3a14"/>
<rect x="386" y="386" width="2" height="1" fill="#3a0a00"/>
<rect x="378" y="463" width="2" height="3" fill="#a8b8c8"/>
<rect x="310" y="430" width="1" height="1" fill="#3a0a00"/>
<rect x="779" y="297" width="5" height="1" fill="#00a5ff"/>
<rect x="664" y="316" width="5" height="1" fill="#00a5ff"/>
<rect x="479" y="345" width="2" height="1" fill="#00a5ff"/>
<rect x="596" y="325" width="2" height="1" fill="#00a5ff"/>
<rect x="443" y="352" width="2" height="1" fill="#00a5ff"/>
<rect x="725" y="307" width="2" height="1" fill="#00f0f0"/>
<rect x="761" y="300" width="2" height="1" fill="#00a5ff"/>
<rect x="512" y="340" width="2" height="1" fill="#00a5ff"/>
<rect x="677" y="314" width="3" height="1" fill="#00a5ff"/>
<rect x="295" y="372" width="3" height="1" fill="#00a5ff"/>
<rect x="550" y="333" width="5" height="1" fill="#00f0f0"/>
<rect x="771" y="298" width="3" height="1" fill="#00a5ff"/>
<rect x="737" y="305" width="3" height="1" fill="#00a5ff"/>
<rect x="352" y="363" width="3" height="1" fill="#00a5ff"/>
<rect x="750" y="302" width="5" height="1" fill="#00f0f0"/>
<rect x="569" y="331" width="5" height="1" fill="#00f0f0"/>
<rect x="534" y="334" width="3" height="1" fill="#00a5ff"/>
<rect x="701" y="308" width="5" height="1" fill="#00f0f0"/>
<rect x="420" y="355" width="2" height="1" fill="#00a5ff"/>
<rect x="467" y="348" width="2" height="1" fill="#00a5ff"/>
<rect x="706" y="308" width="3" height="1" fill="#00f0f0"/>
<rect x="668" y="316" width="5" height="1" fill="#00f0f0"/>
<rect x="635" y="320" width="2" height="1" fill="#00a5ff"/>
<rect x="518" y="337" width="2" height="1" fill="#00f0f0"/>
<rect x="644" y="319" width="3" height="1" fill="#00a5ff"/>
<rect x="697" y="309" width="5" height="1" fill="#00a5ff"/>
<rect x="406" y="356" width="2" height="1" fill="#00a5ff"/>
<rect x="645" y="319" width="3" height="1" fill="#00f0f0"/>
<rect x="455" y="349" width="3" height="1" fill="#00a5ff"/>
<rect x="533" y="335" width="3" height="1" fill="#00a5ff"/>
<rect x="709" y="309" width="3" height="1" fill="#00f0f0"/>
<rect x="469" y="348" width="2" height="1" fill="#00f0f0"/>
<rect x="401" y="355" width="3" height="1" fill="#00a5ff"/>
<rect x="515" y="340" width="5" height="1" fill="#00f0f0"/>
<rect x="566" y="330" width="5" height="1" fill="#00f0f0"/>
<rect x="547" y="333" width="2" height="1" fill="#00f0f0"/>
<rect x="386" y="359" width="2" height="1" fill="#00a5ff"/>
<rect x="682" y="313" width="3" height="1" fill="#00f0f0"/>
<rect x="587" y="327" width="2" height="1" fill="#00a5ff"/>
<rect x="444" y="351" width="2" height="1" fill="#00a5ff"/>
<rect x="624" y="323" width="2" height="1" fill="#00a5ff"/>
<rect x="667" y="315" width="2" height="1" fill="#00a5ff"/>
<rect x="510" y="339" width="5" height="1" fill="#00a5ff"/>
<rect x="355" y="364" width="2" height="1" fill="#00a5ff"/>
<rect x="749" y="303" width="3" height="1" fill="#00a5ff"/>
<rect x="767" y="300" width="2" height="1" fill="#00a5ff"/>
<rect x="416" y="354" width="5" height="1" fill="#00f0f0"/>
<rect x="585" y="328" width="2" height="1" fill="#00a5ff"/>
<rect x="315" y="372" width="2" height="1" fill="#00a5ff"/>
<rect x="728" y="304" width="5" height="1" fill="#00a5ff"/>
<rect x="378" y="359" width="2" height="1" fill="#00a5ff"/>
<rect x="415" y="354" width="5" height="1" fill="#00f0f0"/>
<rect x="773" y="299" width="3" height="1" fill="#00f0f0"/>
<rect x="341" y="368" width="2" height="1" fill="#00a5ff"/>
<rect x="748" y="303" width="5" height="1" fill="#00a5ff"/>
<rect x="761" y="300" width="5" height="1" fill="#00a5ff"/>
<rect x="586" y="327" width="2" height="1" fill="#00a5ff"/>
<rect x="659" y="316" width="2" height="1" fill="#00a5ff"/>
<rect x="567" y="330" width="3" height="1" fill="#00f0f0"/>
<rect x="725" y="306" width="5" height="1" fill="#00a5ff"/>
<path d="M131.008 512.207 L140.193 511.066" stroke="#2a0400" stroke-width="1" fill="none"/>
<path d="M265.319 487.681 L277.855 485.403" stroke="#2a0400" stroke-width="1" fill="none"/>
<path d="M52.2243 484.078 L58.0798 483.761" stroke="#2a0400" stroke-width="1" fill="none"/>
<path d="M215.714 491.362 L228.836 494.112" stroke="#2a0400" stroke-width="1" fill="none"/>
<path d="M146.88 460.824 L162.622 462.033" stroke="#2a0400" stroke-width="2" fill="none"/>
<path d="M158.568 524.357 L166.1 520.838" stroke="#2a0400" stroke-width="2" fill="none"/>
<path d="M167.556 586.216 L172.672 589.308" stroke="#2a0400" stroke-width="1.5" fill="none"/>
<path d="M5.19066 460.682 L9.4105 461.118" stroke="#2a0400" stroke-width="2" fill="none"/>
<path d="M50.8047 594.959 L60.496 594.857" stroke="#2a0400" stroke-width="1.5" fill="none"/>
<path d="M288.726 581.709 L293.559 582.955" stroke="#2a0400" stroke-width="2" fill="none"/>
<path d="M100.208 476.963 L113.793 479.257" stroke="#2a0400" stroke-width="1" fill="none"/>
<path d="M204.512 586.433 L209.909 589.011" stroke="#2a0400" stroke-width="1.5" fill="none"/>
<path d="M80.3925 506.461 L96.2152 508.038" stroke="#2a0400" stroke-width="2" fill="none"/>
<path d="M117.256 523.803 L130.646 520.266" stroke="#2a0400" stroke-width="2" fill="none"/>
<path d="M218.248 445.281 L232.571 445.857" stroke="#2a0400" stroke-width="2" fill="none"/>
<path d="M220.812 501.057 L232.992 504.285" stroke="#2a0400" stroke-width="1.5" fill="none"/>
<path d="M49.0341 542.116 L57.6135 544.28" stroke="#2a0400" stroke-width="1.5" fill="none"/>
<path d="M118.319 538.729 L127.973 537.473" stroke="#2a0400" stroke-width="1" fill="none"/>
<path d="M150.906 556.881 L159.855 553.099" stroke="#2a0400" stroke-width="1.5" fill="none"/>
<path d="M191.001 570.846 L198.493 568.489" stroke="#2a0400" stroke-width="1.5" fill="none"/>
<path d="M95.1776 451.073 L107.434 454.611" stroke="#2a0400" stroke-width="1" fill="none"/>
<path d="M52.2324 517.61 L59.481 518.128" stroke="#2a0400" stroke-width="2" fill="none"/>
<path d="M95.767 462.553 L103.087 463.911" stroke="#2a0400" stroke-width="1.5" fill="none"/>
<path d="M197.001 517.411 L210.11 520.907" stroke="#2a0400" stroke-width="1.5" fill="none"/>
<path d="M192.777 443.352 L202.673 444.263" stroke="#2a0400" stroke-width="1.5" fill="none"/>
<path d="M247.471 511.373 L256.927 511.354" stroke="#2a0400" stroke-width="1.5" fill="none"/>
<path d="M33.2047 514.025 L39.766 512.675" stroke="#2a0400" stroke-width="1.5" fill="none"/>
<path d="M81.1418 589.064 L88.5362 587.411" stroke="#2a0400" stroke-width="2" fill="none"/>
<path d="M13.6294 534.28 L19.5202 533.441" stroke="#2a0400" stroke-width="1.5" fill="none"/>
<path d="M67.4768 467.358 L76.8137 465.63" stroke="#2a0400" stroke-width="2" fill="none"/>
<path d="M158.427 599.259 L170.56 595.411" stroke="#2a0400" stroke-width="1.5" fill="none"/>
<path d="M92.981 461.414 L102.163 460.322" stroke="#2a0400" stroke-width="2" fill="none"/>
<path d="M212.296 549.175 L217.145 550.77" stroke="#2a0400" stroke-width="1" fill="none"/>
<path d="M141.566 464.244 L145.817 462.494" stroke="#2a0400" stroke-width="1" fill="none"/>
<path d="M45.4827 599.697 L49.9828 602.603" stroke="#2a0400" stroke-width="2" fill="none"/>
<path d="M185.552 443.66 L198.393 446.017" stroke="#2a0400" stroke-width="1.5" fill="none"/>
<path d="M95.0739 486.787 L100.199 488.395" stroke="#2a0400" stroke-width="1.5" fill="none"/>
<path d="M109.81 492.636 L123.553 496.385" stroke="#2a0400" stroke-width="1.5" fill="none"/>
<path d="M237.386 471.84 L249.979 472.575" stroke="#2a0400" stroke-width="1.5" fill="none"/>
<path d="M93.2388 555.971 L109.029 555.725" stroke="#2a0400" stroke-width="1" fill="none"/>
<path d="M120.144 507.532 L133.77 511.299" stroke="#2a0400" stroke-width="1.5" fill="none"/>
<path d="M211.423 572.359 L226.453 575.986" stroke="#2a0400" stroke-width="2" fill="none"/>
<path d="M287.639 468.87 L295.748 467.351" stroke="#2a0400" stroke-width="1" fill="none"/>
<path d="M46.6576 445.956 L56.1432 444.275" stroke="#2a0400" stroke-width="2" fill="none"/>
<path d="M107.949 565.396 L120.026 566.779" stroke="#2a0400" stroke-width="1.5" fill="none"/>
<path d="M240.628 464.88 L251.44 466.388" stroke="#2a0400" stroke-width="2" fill="none"/>
<path d="M48.1199 507.894 L55.884 508.452" stroke="#2a0400" stroke-width="2" fill="none"/>
<path d="M220.839 557.684 L228.856 559.894" stroke="#2a0400" stroke-width="1.5" fill="none"/>
<path d="M204.267 572.106 L208.336 573.668" stroke="#2a0400" stroke-width="2" fill="none"/>
<path d="M233.302 500.991 L241.517 500.458" stroke="#2a0400" stroke-width="2" fill="none"/>
<path d="M171.162 560.9 L178.568 561.043" stroke="#2a0400" stroke-width="2" fill="none"/>
<path d="M64.2348 497.856 L73.0871 494.208" stroke="#2a0400" stroke-width="1.5" fill="none"/>
<path d="M126.35 458.867 L140.607 461.885" stroke="#2a0400" stroke-width="2" fill="none"/>
<path d="M259.583 537.143 L269.132 540.94" stroke="#2a0400" stroke-width="1.5" fill="none"/>
<path d="M241.414 508.619 L251.252 506.521" stroke="#2a0400" stroke-width="2" fill="none"/>
<path d="M272.513 468.387 L285.769 467.437" stroke="#2a0400" stroke-width="2" fill="none"/>
<path d="M229.195 544.026 L237.116 544.816" stroke="#2a0400" stroke-width="1" fill="none"/>
<path d="M110.887 565.184 L120.81 566.331" stroke="#2a0400" stroke-width="1" fill="none"/>
<path d="M84.0803 440.765 L98.8278 440.964" stroke="#2a0400" stroke-width="2" fill="none"/>
<path d="M66.9877 562.699 L78.9562 562.599" stroke="#2a0400" stroke-width="1.5" fill="none"/>
<path d="M117.138 556.275 L131.12 555.177" stroke="#2a0400" stroke-width="1.5" fill="none"/>
<path d="M86.6113 587.471 L92.4568 585.108" stroke="#2a0400" stroke-width="2" fill="none"/>
<path d="M18.1884 598.288 L31.6756 598.764" stroke="#2a0400" stroke-width="2" fill="none"/>
<path d="M166.674 590.463 L172.292 592.935" stroke="#2a0400" stroke-width="1.5" fill="none"/>
<path d="M236.318 562.246 L241.81 562.488" stroke="#2a0400" stroke-width="2" fill="none"/>
<path d="M134.146 542.442 L140.368 538.471" stroke="#2a0400" stroke-width="1.5" fill="none"/>
<path d="M211.178 484.956 L215.754 481.373" stroke="#2a0400" stroke-width="2" fill="none"/>
<path d="M78.7605 558.409 L87.0902 560.348" stroke="#2a0400" stroke-width="2" fill="none"/>
<path d="M193.098 471.408 L204.125 468.019" stroke="#2a0400" stroke-width="2" fill="none"/>
<path d="M174.015 549.675 L184.599 552.932" stroke="#2a0400" stroke-width="1" fill="none"/>
<path d="M158.164 507.132 L169.046 505.951" stroke="#2a0400" stroke-width="1" fill="none"/>
<path d="M268.636 535.424 L272.752 536.412" stroke="#2a0400" stroke-width="1.5" fill="none"/>
<path d="M298.557 566.146 L312.683 565.988" stroke="#2a0400" stroke-width="1" fill="none"/>
<path d="M93.1749 480.208 L97.6228 477.061" stroke="#2a0400" stroke-width="1.5" fill="none"/>
<path d="M95.1021 578.488 L107.35 578.106" stroke="#2a0400" stroke-width="1" fill="none"/>
<path d="M111.91 542.404 L120.156 543.763" stroke="#2a0400" stroke-width="1" fill="none"/>
<path d="M87.3769 507.891 L97.3539 504.731" stroke="#2a0400" stroke-width="1" fill="none"/>
<path d="M96.0488 493.685 L103.339 490.932" stroke="#2a0400" stroke-width="1" fill="none"/>
<path d="M48.1296 505.523 L52.798 502.224" stroke="#2a0400" stroke-width="1.5" fill="none"/>
<path d="M263.281 445.537 L278.515 449.304" stroke="#2a0400" stroke-width="1.5" fill="none"/>
<path d="M175.258 521.742 L187.129 521.715" stroke="#2a0400" stroke-width="1.5" fill="none"/>
<path d="M278.603 566.82 L293.304 567.326" stroke="#2a0400" stroke-width="2" fill="none"/>
<path d="M289.192 495.135 L298.39 494.351" stroke="#2a0400" stroke-width="1" fill="none"/>
<path d="M24.8981 586.467 L37.6006 587.662" stroke="#2a0400" stroke-width="1" fill="none"/>
<path d="M85.2103 532.51 L98.4896 529.434" stroke="#2a0400" stroke-width="1.5" fill="none"/>
<path d="M192.946 478.309 L204.553 481.056" stroke="#2a0400" stroke-width="1.5" fill="none"/>
<path d="M69.1731 488.494 L77.113 491.635" stroke="#2a0400" stroke-width="1.5" fill="none"/>
<path d="M118.174 513.155 L124.589 512.837" stroke="#2a0400" stroke-width="1.5" fill="none"/>
<path d="M27.3887 503.096 L33.7333 505.856" stroke="#2a0400" stroke-width="1.5" fill="none"/>
<path d="M157.277 532.671 L163.541 533.748" stroke="#2a0400" stroke-width="1.5" fill="none"/>
<path d="M240.269 555.433 L253.199 553.535" stroke="#2a0400" stroke-width="1.5" fill="none"/>
<path d="M85.2765 557.804 L100.918 561.405" stroke="#2a0400" stroke-width="1" fill="none"/>
<path d="M148.041 497.816 L152.97 498.251" stroke="#2a0400" stroke-width="1" fill="none"/>
<path d="M35.2599 455.851 L47.487 455.61" stroke="#2a0400" stroke-width="1.5" fill="none"/>
<path d="M123.442 597.165 L137.914 595.735" stroke="#2a0400" stroke-width="2" fill="none"/>
<path d="M258.056 454.074 L272.519 457.512" stroke="#2a0400" stroke-width="1" fill="none"/>
<path d="M245.567 480.462 L255.625 480.811" stroke="#2a0400" stroke-width="2" fill="none"/>
<path d="M255.5 476.815 L261.766 479.328" stroke="#2a0400" stroke-width="1" fill="none"/>
<path d="M256.478 529.034 L269.362 530.953" stroke="#2a0400" stroke-width="2" fill="none"/>
<path d="M214.827 534.764 L219.741 538.118" stroke="#2a0400" stroke-width="2" fill="none"/>
<path d="M190.849 475.12 L195.189 472.21" stroke="#2a0400" stroke-width="1" fill="none"/>
<path d="M292.878 490.495 L300.963 490.545" stroke="#2a0400" stroke-width="2" fill="none"/>
<path d="M226.546 498.461 L240.407 494.499" stroke="#2a0400" stroke-width="1.5" fill="none"/>
<path d="M285.607 599.813 L299.29 596.735" stroke="#2a0400" stroke-width="2" fill="none"/>
<path d="M262.769 491.792 L267.63 495.514" stroke="#2a0400" stroke-width="1" fill="none"/>
<path d="M42.08 573.87 L54.2043 577.55" stroke="#2a0400" stroke-width="1" fill="none"/>
<path d="M180.029 528.581 L185.421 527.227" stroke="#2a0400" stroke-width="1.5" fill="none"/>
<path d="M9.94761 518.294 L15.5398 514.698" stroke="#2a0400" stroke-width="1" fill="none"/>
<path d="M9.41344 472.664 L15.1002 476.099" stroke="#2a0400" stroke-width="1.5" fill="none"/>
<path d="M62.8563 545.235 L69.6114 541.909" stroke="#2a0400" stroke-width="2" fill="none"/>
<path d="M31.6299 498.442 L39.1211 502.031" stroke="#2a0400" stroke-width="1.5" fill="none"/>
<path d="M276.496 520.543 L287.65 521.579" stroke="#2a0400" stroke-width="1.5" fill="none"/>
<path d="M22.521 566.091 L33.6654 564.362" stroke="#2a0400" stroke-width="1.5" fill="none"/>
<path d="M35.4327 491.511 L42.82 488.361" stroke="#2a0400" stroke-width="1.5" fill="none"/>
<path d="M166.597 458.65 L175.973 461.932" stroke="#2a0400" stroke-width="2" fill="none"/>
<path d="M119.188 468.08 L132.818 467.266" stroke="#2a0400" stroke-width="1.5" fill="none"/>
<path d="M163.244 456.989 L177.418 456.312" stroke="#2a0400" stroke-width="2" fill="none"/>
<path d="M258.933 443.328 L273.901 446.724" stroke="#2a0400" stroke-width="2" fill="none"/>
<path d="M258.421 582.707 L266.316 578.894" stroke="#2a0400" stroke-width="2" fill="none"/>
<path d="M89.9788 446.234 L101.795 449.799" stroke="#2a0400" stroke-width="1" fill="none"/>
<path d="M606.485 576.797 L609.236 579.474" stroke="#240300" stroke-width="1.2" fill="none"/>
<path d="M626.547 482.279 L629.558 483.127" stroke="#240300" stroke-width="1.2" fill="none"/>
<path d="M449.968 591.827 L453.642 591.743" stroke="#240300" stroke-width="1.2" fill="none"/>
<path d="M546.762 592.21 L550.585 594.563" stroke="#240300" stroke-width="1.2" fill="none"/>
<path d="M654.429 543.983 L662.106 546.284" stroke="#240300" stroke-width="1.2" fill="none"/>
<path d="M667.227 540.924 L669.49 539.248" stroke="#240300" stroke-width="1.2" fill="none"/>
<path d="M618.859 485.197 L624.718 484.279" stroke="#240300" stroke-width="1.2" fill="none"/>
<path d="M489.842 576.959 L496.886 578.444" stroke="#240300" stroke-width="1.2" fill="none"/>
<path d="M518.85 539.69 L526.764 542.245" stroke="#240300" stroke-width="1.2" fill="none"/>
<path d="M597.736 480.258 L605.146 477.532" stroke="#240300" stroke-width="1.2" fill="none"/>
<path d="M357.419 555.663 L360.597 557.184" stroke="#240300" stroke-width="1.2" fill="none"/>
<path d="M636.397 491.486 L643.847 494.475" stroke="#240300" stroke-width="1.2" fill="none"/>
<path d="M621.874 597.68 L628.681 597.519" stroke="#240300" stroke-width="1.2" fill="none"/>
<path d="M703.984 591.986 L710.16 589.488" stroke="#240300" stroke-width="1.2" fill="none"/>
<path d="M482.511 561.512 L486.706 559.511" stroke="#240300" stroke-width="1.2" fill="none"/>
<path d="M523.553 488.33 L528.4 485.924" stroke="#240300" stroke-width="1.2" fill="none"/>
<path d="M656.062 497.696 L663.676 495.339" stroke="#240300" stroke-width="1.2" fill="none"/>
<path d="M609.321 553.653 L612.514 554.415" stroke="#240300" stroke-width="1.2" fill="none"/>
<path d="M569.106 550.044 L572.216 549.905" stroke="#240300" stroke-width="1.2" fill="none"/>
<path d="M709.634 550.36 L713.097 549.365" stroke="#240300" stroke-width="1.2" fill="none"/>
<path d="M730.8 476.898 L735.669 476.978" stroke="#240300" stroke-width="1.2" fill="none"/>
<path d="M352.121 579.47 L356.852 578.22" stroke="#240300" stroke-width="1.2" fill="none"/>
<path d="M521.255 476.809 L523.743 478.781" stroke="#240300" stroke-width="1.2" fill="none"/>
<path d="M672.234 495.614 L676.139 493.074" stroke="#240300" stroke-width="1.2" fill="none"/>
<path d="M455.755 537.735 L462.272 537.771" stroke="#240300" stroke-width="1.2" fill="none"/>
<path d="M715.399 599.773 L720.803 597.033" stroke="#240300" stroke-width="1.2" fill="none"/>
<path d="M365.853 557.435 L368.635 559.831" stroke="#240300" stroke-width="1.2" fill="none"/>
<path d="M787.946 522.869 L793.277 523.446" stroke="#240300" stroke-width="1.2" fill="none"/>
<path d="M480.725 565.915 L487.419 567.083" stroke="#240300" stroke-width="1.2" fill="none"/>
<path d="M388.581 529.989 L396.075 528.036" stroke="#240300" stroke-width="1.2" fill="none"/>
<path d="M470.963 550.054 L478.934 547.205" stroke="#240300" stroke-width="1.2" fill="none"/>
<path d="M638.669 529.971 L643.843 532.014" stroke="#240300" stroke-width="1.2" fill="none"/>
<path d="M346.97 547.774 L350.872 549.306" stroke="#240300" stroke-width="1.2" fill="none"/>
<path d="M650.089 524.053 L653.001 525.641" stroke="#240300" stroke-width="1.2" fill="none"/>
<path d="M643.402 543.272 L649.877 545.966" stroke="#240300" stroke-width="1.2" fill="none"/>
<path d="M419.799 559.648 L426.639 558.243" stroke="#240300" stroke-width="1.2" fill="none"/>
<path d="M742.504 510.769 L750.24 511.264" stroke="#240300" stroke-width="1.2" fill="none"/>
<path d="M776.676 584.969 L783.368 584.193" stroke="#240300" stroke-width="1.2" fill="none"/>
<path d="M524.532 546.335 L531.363 545.833" stroke="#240300" stroke-width="1.2" fill="none"/>
<path d="M740.465 498.176 L745.59 496.047" stroke="#240300" stroke-width="1.2" fill="none"/>
<path d="M323.289 544.074 L329.01 543.448" stroke="#240300" stroke-width="1.2" fill="none"/>
<path d="M690.865 540.956 L696.965 538.468" stroke="#240300" stroke-width="1.2" fill="none"/>
<path d="M378.343 580.478 L381.156 581.054" stroke="#240300" stroke-width="1.2" fill="none"/>
<path d="M485.006 557.432 L492.235 559.41" stroke="#240300" stroke-width="1.2" fill="none"/>
<path d="M772.79 595.558 L777.181 598.486" stroke="#240300" stroke-width="1.2" fill="none"/>
</svg>

<div class="abs" id="topstrip"></div>
<div class="abs" id="toolbar">
<svg class="abs" style="left:-1px;top:-3px;width:1149px;height:52px" viewBox="0 0 1149 52">
<defs>
<linearGradient id="bg1" x1="0" y1="0" x2="0" y2="1"><stop offset="0" stop-color="#474c50"/><stop offset="1" stop-color="#282a2c"/></linearGradient>
<g id="sep"><rect x="0" y="9" width="4" height="36" fill="#141414"/><rect x="0" y="9" width="1" height="36" fill="#686868"/><rect x="3" y="9" width="1" height="36" fill="#686868"/></g>
<g id="dd"><rect x="0.5" y="11.5" width="10.5" height="27" rx="2.5" fill="#000" stroke="#2c2c2c"/><path d="M2.2 23 L9.4 23 L5.8 27Z" fill="#a8a8a8"/></g>
<g id="cube" fill="none" stroke-width="1.1" stroke-dasharray="2.2 1.1">
<path d="M0.5 5.5 L10 2 L22 6.5 L22 17 L11.5 22.5 L0.5 17.5Z"/><path d="M0.5 5.5 L11.5 10.5 L22 6.5 M11.5 10.5 L11.5 22.5"/><path d="M10 2 L10 13.5 L0.5 17.5 M10 13.5 L22 17" stroke-width="0.8"/></g>
</defs>
<!-- separators -->
<use href="#sep" x="115"/><use href="#sep" x="306"/><use href="#sep" x="412"/><use href="#sep" x="671"/><use href="#sep" x="760"/><use href="#sep" x="866"/>
<!-- icon 1: box with chevron -->
<g stroke="#f2f2f2" stroke-width="1.6" fill="none" stroke-linejoin="round">
<path d="M11.3 17.8 L14 21 L11.3 24.2" stroke-width="1.3"/>
<path d="M16.5 15.8 L22.5 15.8 L30.5 23.5 L30.5 34.5 L24.5 34.5 L16.5 26.5Z" fill="#6e6e6e"/>
<path d="M16.5 15.8 L24.5 23.8 L30.5 23.5 M24.5 23.8 L24.5 34.5"/>
<path d="M17 24 L22.5 20.5 M19.5 28 L24 25" stroke-width="2.2"/>
</g>
<!-- icon 2: windows -->
<g stroke="#f2f2f2" fill="none">
<rect x="48.6" y="20.2" width="13" height="10.6" fill="#6e6e6e" stroke-width="1.4"/><rect x="48.6" y="19.6" width="13" height="2" fill="#f2f2f2" stroke="none"/>
<path d="M57.5 15.6 L64.6 15.6 L64.6 22.5 M45.6 27.5 L45.6 34.6 L52.5 34.6" stroke-width="1.4"/>
</g>
<!-- icon 3: zoom -->
<g stroke="#f2f2f2" fill="none" stroke-width="1.5">
<path d="M80.7 20.5 L80.7 16.5 L84.8 16.5 M93 16.5 L97 16.5 L97 20.5 M80.7 28.5 L80.7 32.4 L84.8 32.4"/>
<circle cx="88.3" cy="24.3" r="5" fill="#6e6e6e"/><path d="M92 28 L98.3 34.2" stroke-width="2"/>
</g>
<!-- nav button -->
<rect x="130.5" y="11.5" width="28" height="28" rx="3" fill="url(#bg1)" stroke="#17176e"/>
<circle cx="148.4" cy="20.2" r="4.8" fill="#3d4247" stroke="#f4f4f4" stroke-width="1.2"/>
<circle cx="139.2" cy="25.4" r="4.8" fill="#737373" stroke="#f4f4f4" stroke-width="1.2"/>
<circle cx="148" cy="29.6" r="5.3" fill="#fff"/>
<!-- classification button -->
<rect x="164.5" y="11.5" width="28" height="28" rx="3" fill="url(#bg1)" stroke="#dc143c"/>
<g stroke="#f4f4f4" fill="none" stroke-width="1.3">
<path d="M176 34.6 L172 34.6 Q166.6 33.5 166.8 28 Q167 23.5 170.6 22.8 Q170.6 16 176.5 15.4 Q181.5 15.2 183.2 20.5 Q187.6 19.8 188.8 24.8"/>
<path d="M177 26.4 L190 26.4 M177 30.4 L190 30.4 M177 34.3 L190 34.3" stroke-width="1.5"/>
</g>
<g fill="#e8e8e8"><rect x="173.5" y="20" width="1.3" height="1.3"/><rect x="177.5" y="21" width="1.3" height="1.3"/><rect x="175" y="24" width="1.3" height="1.3"/><rect x="171" y="27" width="1.3" height="1.3"/><rect x="183" y="23.5" width="1.3" height="1.3"/><rect x="174.5" y="29.5" width="1.3" height="1.3"/></g>
<!-- square -->
<rect x="203.5" y="16.6" width="17" height="17" fill="#6a6a6a" stroke="#f4f4f4" stroke-width="1.5"/>
<!-- panorama (dim) -->
<g stroke="#767676" fill="#464646" stroke-width="1.1"><path d="M236.5 17.3 Q246 21 255.5 17.3 L255.5 32.7 Q246 29 236.5 32.7Z"/><path d="M242.3 19.6 L242.3 30.4 M249.7 19.6 L249.7 30.4" fill="none"/></g>
<!-- image (dim) -->
<g stroke="#6e6e6e" fill="#484848" stroke-width="1.1"><rect x="268.5" y="16.5" width="23.5" height="17"/><circle cx="274.5" cy="21" r="1.8" fill="none"/><path d="M269 33 L276.5 26.5 L281 30.3 L286 24.5 L292 29.5" fill="none"/></g>
<!-- ruler -->
<g transform="translate(337 25.6) rotate(-38)"><rect x="-11" y="-4.2" width="22" height="8.4" fill="#666" stroke="#f4f4f4" stroke-width="1.5"/><path d="M-7.5 -4 L-7.5 0 M-4.5 -4 L-4.5 -1 M-1.5 -4 L-1.5 0 M1.5 -4 L1.5 -1 M4.5 -4 L4.5 0 M7.5 -4 L7.5 -1" stroke="#f4f4f4" stroke-width="1.1"/></g>
<use href="#dd" x="352.5"/>
<!-- cursor thermo (dim) -->
<g fill="#868686"><path d="M375 17.8 L375 30.2 L378.3 27.6 L380.6 32.6 L382.4 31.7 L380.2 26.9 L384.3 26.4Z"/><rect x="388.2" y="22.5" width="3.6" height="10" rx="1.8"/><circle cx="390" cy="33" r="3.1"/></g>
<!-- target button -->
<rect x="427.5" y="11.5" width="28" height="28" rx="3" fill="url(#bg1)" stroke="#dc143c"/>
<circle cx="441.3" cy="25" r="9.8" fill="#7a7a7a" stroke="#f6f6f6" stroke-width="1.7"/><circle cx="441.3" cy="25" r="1.7" fill="#fff"/>
<!-- tag -->
<path d="M463.6 27 L478.8 15 L486.6 13.4 L487 22 L472.8 35.8Z" fill="#727272" stroke="#f4f4f4" stroke-width="1.4" stroke-linejoin="round"/><circle cx="480" cy="20.2" r="2" fill="#fff"/>
<!-- cloud button -->
<rect x="495.5" y="11.5" width="28" height="28" rx="3" fill="url(#bg1)" stroke="#dc143c"/>
<path d="M502.5 32.5 Q497.8 32 498 27.5 Q498.3 23.8 502 23.3 Q502 15.2 508.5 15 Q513.3 15.2 514.5 20 Q520.5 19.5 520.8 26.3 Q520.8 32 516 32.5Z" fill="#7a7a7a" stroke="#f4f4f4" stroke-width="1.4"/>
<g fill="#e0e0e0"><rect x="504.5" y="19.5" width="1.2" height="1.2"/><rect x="509.5" y="20.5" width="1.2" height="1.2"/><rect x="506.5" y="24.5" width="1.2" height="1.2"/><rect x="512.5" y="24" width="1.2" height="1.2"/><rect x="502" y="27.5" width="1.2" height="1.2"/><rect x="509.5" y="28" width="1.2" height="1.2"/><rect x="515.5" y="27.5" width="1.2" height="1.2"/></g>
<!-- link button -->
<rect x="529.5" y="11.5" width="28" height="28" rx="3" fill="url(#bg1)" stroke="#dc143c"/>
<g transform="translate(543.4 25) rotate(-39)"><rect x="-11.5" y="-2.8" width="9.5" height="5.6" fill="none" stroke="#f4f4f4" stroke-width="2"/><rect x="2" y="-2.8" width="9.5" height="5.6" fill="none" stroke="#f4f4f4" stroke-width="2"/><rect x="-4" y="-1" width="8" height="2" fill="#f4f4f4"/></g>
<!-- camera -->
<path d="M566 20.8 L571 20.8 L572.5 18.4 L581.5 18.4 L583 20.8 L588 20.8 L588 32.2 L566 32.2Z" fill="#e6e6e6"/><circle cx="577" cy="26.2" r="4.6" fill="#8a8a8a"/>
<!-- pin button -->
<rect x="597.5" y="11.5" width="28" height="28" rx="3" fill="url(#bg1)" stroke="#dc143c"/>
<path d="M611 35.6 Q603.5 26 603.5 21 Q603.8 14.3 611 14.2 Q618.2 14.3 618.5 21 Q618.5 26 611 35.6Z" fill="#7a7a7a" stroke="#f4f4f4" stroke-width="1.4"/><circle cx="611" cy="20.6" r="2.3" fill="#2c2e30" stroke="#f4f4f4" stroke-width="1.2"/>
<!-- filter (dim) -->
<g fill="#6a6a6a"><circle cx="646" cy="20" r="6.5"/><circle cx="641" cy="29.5" r="6.5"/><circle cx="646" cy="20" r="1.6" fill="#2a2a2a"/><circle cx="641" cy="29.5" r="1.6" fill="#2a2a2a"/><path d="M645.5 26.5 L657.5 26.5 L653 31.5 L653 36.5 L650.5 36.5 L650.5 31.5Z" fill="#8a8a8a" stroke="#262626" stroke-width="0.8"/></g>
<!-- axis -->
<g stroke="#f4f4f4" fill="none" stroke-width="1.3"><path d="M693.8 34 L693.8 18 M691.3 20.5 L693.8 17.6 L696.3 20.5 M690.2 31.3 L707.5 31.3 M705 28.8 L708 31.3 L705 33.8"/><path d="M696 29 L703.5 21.5" stroke-dasharray="1.2 1.4"/><path d="M705.8 15.2 L705.8 23 M701.8 19.1 L709.8 19.1" stroke-width="1.9"/></g>
<!-- scanner -->
<g stroke="#f4f4f4" fill="none" stroke-width="1.2"><rect x="728" y="13.6" width="12.3" height="6.6" fill="#444"/><rect x="734.5" y="15.6" width="3" height="2.6" stroke-width="0.9"/><path d="M734 21 L734 26.5 M731.8 24.3 L734 26.8 L736.2 24.3"/><path d="M724 30.2 L734 24.8 L744 30.2 L734 36 Z" fill="#3a3a3a"/><path d="M730 30.5 L733 29 M735 32.5 L738 30" stroke-dasharray="1 1" stroke-width="0.9"/></g>
<!-- palette -->
<g><path d="M783.5 16 Q792 12.5 800.5 14 Q797.5 24 798.8 33.5 Q790 31.5 778.8 35.8 Q782.5 26 783.5 16Z" fill="#8a8a8a" stroke="#f4f4f4" stroke-width="1.4" stroke-linejoin="round"/><circle cx="788" cy="20.8" r="2.1" fill="#f4f4f4"/><circle cx="795" cy="19.6" r="2.1" fill="#f4f4f4"/><circle cx="786" cy="28" r="2.1" fill="#f4f4f4"/><path d="M790 26.4 L801.5 26.4 L797 31.4 L797 36.4 L794.5 36.4 L794.5 31.4Z" fill="#f4f4f4" stroke="#2a2a2a" stroke-width="0.8"/></g>
<!-- selection rect -->
<rect x="816.3" y="18.3" width="16.5" height="13.5" fill="#6a6a6a" stroke="#f4f4f4" stroke-width="1.3" stroke-dasharray="2 1.2"/><path d="M832.8 28.5 L832.8 35 M829.5 31.8 L836 31.8" stroke="#f4f4f4" stroke-width="1.3"/>
<use href="#dd" x="840.5"/>
<!-- cubes -->
<use href="#cube" x="885.5" y="14.5" stroke="#f0f0f0"/>
<use href="#dd" x="912.3"/>
<use href="#cube" x="935" y="14.5" stroke="#6c6c6c"/>
<ellipse cx="950.5" cy="31.3" rx="6" ry="4.2" fill="#6e6e6e"/><circle cx="950.5" cy="31.3" r="2" fill="#2a2a2a"/><circle cx="950.5" cy="31.3" r="1" fill="#6e6e6e"/>
<use href="#cube" x="969" y="14.5" stroke="#f0f0f0"/>
<text x="977.6" y="36.4" font-family="Liberation Sans, sans-serif" font-weight="bold" font-size="15" fill="#fff" stroke="#222" stroke-width="0.4" paint-order="stroke">M</text>
<!-- QLB -->
<text x="1003" y="23.2" font-family="Liberation Sans, sans-serif" font-size="11.6" fill="#a4a4a4">QLB</text>
<text x="1003" y="39.5" font-family="Liberation Sans, sans-serif" font-size="11.6" fill="#a4a4a4">Size:</text>
<rect x="1035" y="16" width="64" height="20" fill="#bebebe"/>
<text x="1040" y="30.2" font-family="Liberation Sans, sans-serif" font-size="11" fill="#f2f2f2">10.0 m</text>
<g><rect x="1084.5" y="18.5" width="13" height="6.5" fill="#b4b4b4" stroke="#7a7a7a"/><rect x="1084.5" y="26" width="13" height="6.5" fill="#b4b4b4" stroke="#7a7a7a"/><path d="M1085 19 L1097 19 M1085 26.5 L1097 26.5" stroke="#dcdcdc"/></g>
</svg>

</div>

<div class="abs" id="menu">
<svg class="abs" style="left:0;top:0;width:24px;height:138px;z-index:2" viewBox="128 42 24 138">
<rect x="128" y="111" width="19.5" height="23" fill="#579496"/><rect x="147" y="111" width="1" height="23" fill="#6aa4a6"/>
<circle cx="141.4" cy="50.8" r="3.6" fill="#454545" stroke="#f0f0f0" stroke-width="1"/><circle cx="134.6" cy="54.4" r="3.6" fill="#8c8c8c" stroke="#f0f0f0" stroke-width="1"/><circle cx="141" cy="57.6" r="3.9" fill="#fff"/>
<rect x="131.5" y="70.5" width="13.5" height="13" fill="#6c6c6c" stroke="#f0f0f0" stroke-width="1.1"/><path d="M132 71 L144.5 71 L132 83Z" fill="#efefef"/>
<rect x="131.5" y="93.5" width="13.5" height="13" fill="#7a7a7a" stroke="#f0f0f0" stroke-width="1.1"/><rect x="132" y="94" width="4" height="12" fill="#f4f4f4"/><rect x="139.5" y="94" width="2.5" height="12" fill="#a8a8a8"/><rect x="142" y="94" width="2.5" height="12" fill="#5c5c5c"/>
<g stroke="#cfe6e6" fill="none" stroke-width="1"><path d="M137 130 L134.5 130 Q130.6 129.3 130.8 125.4 Q131 122.4 133.5 122 Q133.5 117 137.8 116.6 Q141.2 116.5 142.4 120.2 Q145.4 119.8 146.2 123.2"/><path d="M137.5 124.2 L146.6 124.2 M137.5 127 L146.6 127 M137.5 129.8 L146.6 129.8"/></g>
<g fill="#f0f0f0"><circle cx="138" cy="142.4" r="4.4"/><circle cx="134.3" cy="148.6" r="4.4"/><circle cx="141.7" cy="148.6" r="4.4"/></g><g fill="#747474"><circle cx="138" cy="142.4" r="3.3"/><circle cx="134.3" cy="148.6" r="3.3"/><circle cx="141.7" cy="148.6" r="3.3"/><circle cx="138" cy="146.6" r="3"/></g><g fill="#e6e6e6"><circle cx="138" cy="142.2" r="1"/><circle cx="134.4" cy="148.8" r="1"/><circle cx="141.6" cy="148.8" r="1"/></g>
<path d="M138 161.4 L145.6 175 L130.4 175Z" fill="#747474" stroke="#f0f0f0" stroke-width="1.1" stroke-linejoin="round"/><circle cx="138" cy="170.6" r="1.3" fill="#fff"/>
</svg>
<div class="it" style="top:0"><span>Color From Scanner</span></div>
<div class="it" style="top:23px"><span>Hue/Intensity Map</span></div>
<div class="it" style="top:46px"><span>Grayscale Intensity Map</span></div>
<div class="it hl" style="top:69px"><span>Color by Classification</span></div>
<div class="it" style="top:92px"><span>Color by Bundle</span></div>
<div class="it" style="top:115px"><span>Color by Setup</span></div>
</div>

<div class="abs" id="palette">
<svg class="abs" style="left:-11px;top:-59px;width:70px;height:320px" viewBox="0 0 70 320">
<!-- cursor -->
<path d="M25.6 70.2 L25.6 84.6 L29.4 81.4 L32.4 88.6 L34.6 87.6 L31.8 80.6 L37 80Z" fill="#7a7a7a" stroke="#f2f2f2" stroke-width="1.2" stroke-linejoin="round"/>
<!-- cursor with dots -->
<path d="M27.6 103.6 L27.6 118 L31.4 114.8 L34.4 122 L36.6 121 L33.8 114 L39 113.4Z" fill="#7a7a7a" stroke="#f2f2f2" stroke-width="1.2" stroke-linejoin="round"/>
<g fill="#f2f2f2"><rect x="22" y="103.5" width="2" height="2"/><rect x="22" y="108.5" width="2" height="2"/><rect x="22" y="113.5" width="2" height="2"/></g>
<!-- orbit active -->
<rect x="17.5" y="133.5" width="28" height="28" rx="3" fill="#33363a" stroke="#dc143c"/>
<g stroke="#f2f2f2" stroke-width="1.2" fill="#70747a"><ellipse cx="31.3" cy="147.5" rx="10" ry="4.2"/><ellipse cx="31.3" cy="147.5" rx="4.2" ry="10" fill="none"/><rect x="28.8" y="145" width="5" height="5" fill="#8a8a8a" stroke-width="0.9"/></g>
<!-- |orbit| -->
<g stroke="#f2f2f2" fill="none"><path d="M22 172 L22 189.5 M41 172 L41 189.5" stroke-width="1.6"/><ellipse cx="31.4" cy="180.8" rx="6.6" ry="3" stroke-width="1.1"/><ellipse cx="31.4" cy="180.8" rx="3" ry="6.6" stroke-width="1.1"/></g>
<!-- person -->
<g fill="#f4f4f4"><circle cx="31.3" cy="213" r="4.8"/><path d="M22 227 Q22 218.8 31.3 218.8 Q40.6 218.8 40.6 227Z"/></g>
<path d="M20.5 212 Q21.5 203.6 31.3 203.4 Q41 203.6 42 212 M18.5 209 L20.5 212.5 L23.8 210 M44 209 L42 212.5 L38.8 210" fill="none" stroke="#f4f4f4" stroke-width="1.3"/>
<!-- plane -->
<path d="M21.2 248.2 L41.4 239.4 L32 258.8 L28.8 251.4Z" fill="#f2f2f2"/><path d="M28.8 251.4 L41.4 239.4 L32 258.8Z" fill="#9a9a9a"/><path d="M30.5 252.5 L41.4 239.4 L32 258.8Z" fill="#f2f2f2"/>
<!-- cube -->
<g stroke="#f2f2f2" fill="none" stroke-width="1.4" stroke-linejoin="round"><path d="M19.5 280 L28.5 272.5 L43.3 272.5 L43.3 286.5 L34.5 294.6 L19.5 294.6Z" fill="#3c3c3c"/><path d="M19.5 280 L34.5 280 L43.3 272.5 M34.5 280 L34.5 294.6"/><path d="M28.5 272.5 L28.5 286.5 L19.5 294.6 M28.5 286.5 L43.3 286.5" stroke-width="0.9" stroke-dasharray="1.6 1.3"/></g>
</svg>

</div>

<div class="abs" id="rpanel">
<div class="abs" style="left:0;top:0;width:41px;height:36px;background:#2e2e2e"></div>
<div class="abs" style="left:12px;top:8px;font-size:14.2px;color:#fff;white-space:nowrap;line-height:22px">Assistant</div>
<div class="abs" style="left:5px;top:35px;width:40px;height:570px;background:#3a3a3a;border:1px solid #555;box-sizing:border-box"></div>
<div class="abs" style="left:15px;top:45px;width:40px;height:560px;background:#404040;border:1px solid #2c2c2c;box-sizing:border-box"></div>
<div class="abs" style="left:25px;top:90px;width:40px;height:500px;background:#3c3c3c;border:1px solid #2c2c2c;box-sizing:border-box"></div>
<svg class="abs" style="left:30px;top:60px;width:11px;height:36px" viewBox="1135 63 11 36"><path d="M1150 70 Q1142 70 1142 77 Q1139 78 1139.5 82 Q1140 85.5 1145 85.5 L1150 85.5" fill="#777" stroke="#eee" stroke-width="1.4"/></svg>
<div class="abs" style="left:35px;top:109px;font-size:13px;color:#fff;line-height:16px">S</div>

</div>

<div class="abs" id="dialog">
<div class="abs" id="dtitle"><svg class="abs" style="left:8px;top:6px;width:17px;height:17px" viewBox="0 0 17 17"><rect x="0.3" y="0.3" width="16.4" height="16.4" rx="3" fill="#4b7464"/><circle cx="8.8" cy="8.3" r="5.6" fill="#dfe9e4"/><path d="M8.8 2.7 A5.6 5.6 0 0 1 8.8 13.9 A6.5 6.5 0 0 0 12.5 8.3 A3.7 3.7 0 0 0 8.8 4.6Z" fill="#8fb0a2"/><circle cx="7.8" cy="7.6" r="2.3" fill="#4b7464"/><circle cx="7.2" cy="7" r="1" fill="#fff"/></svg><span class="t">Classification Viewer</span><span class="abs" style="left:282px;top:0;line-height:29px;font-size:12.5px;color:#555">?</span><svg class="abs" style="left:324px;top:9px;width:12px;height:12px" viewBox="0 0 12 12"><path d="M0.7 0.7 L11.3 11.3 M11.3 0.7 L0.7 11.3" stroke="#5a5a5a" stroke-width="1.1"/></svg></div>
<div class="abs" id="table">
<div class="th" style="left:0;width:99px">Class Name</div>
<div class="th" style="left:99px;width:60px">Visible</div>
<div class="th" style="left:159px;width:50px">Color</div>
<div class="th" style="left:209px;width:60px">Override</div>
<div class="th" style="left:269px;width:42px">Add</div>
<div class="row" style="top:21px"><div class="nm">Created, neve...</div><div class="vis"><svg viewBox="0 0 19 14"><path d="M1.8 7 Q9.5 -1.6 17.2 7 Q9.5 15.6 1.8 7Z" fill="#e2e2e2"/><circle cx="9.5" cy="7" r="3.1" fill="#8a8a8a"/><circle cx="9.5" cy="7" r="1.5" fill="#b4b4b4"/></svg></div><div class="sw" style="background:#00ffff"></div><div class="cb"></div><div class="add"></div></div>
<div class="row" style="top:51px"><div class="nm">clutter</div><div class="vis off"><svg viewBox="0 0 19 14"><path d="M1.8 7 Q9.5 -1.6 17.2 7 Q9.5 15.6 1.8 7Z" fill="#e2e2e2"/><circle cx="9.5" cy="7" r="3.1" fill="#8a8a8a"/><circle cx="9.5" cy="7" r="1.5" fill="#b4b4b4"/><path d="M4 13.5 L15 0.5" stroke="#555" stroke-width="2.4"/><path d="M4 13.5 L15 0.5" stroke="#e8e8e8" stroke-width="1.1"/></svg></div><div class="sw" style="background:#c00000"></div><div class="cb"></div><div class="add"></div></div>
<div class="row" style="top:81px"><div class="nm">scanning_artif...</div><div class="vis off"><svg viewBox="0 0 19 14"><path d="M1.8 7 Q9.5 -1.6 17.2 7 Q9.5 15.6 1.8 7Z" fill="#e2e2e2"/><circle cx="9.5" cy="7" r="3.1" fill="#8a8a8a"/><circle cx="9.5" cy="7" r="1.5" fill="#b4b4b4"/><path d="M4 13.5 L15 0.5" stroke="#555" stroke-width="2.4"/><path d="M4 13.5 L15 0.5" stroke="#e8e8e8" stroke-width="1.1"/></svg></div><div class="sw" style="background:#f032e6"></div><div class="cb"></div><div class="add"></div></div>
<div class="row" style="top:111px"><div class="nm">wall</div><div class="vis"><svg viewBox="0 0 19 14"><path d="M1.8 7 Q9.5 -1.6 17.2 7 Q9.5 15.6 1.8 7Z" fill="#e2e2e2"/><circle cx="9.5" cy="7" r="3.1" fill="#8a8a8a"/><circle cx="9.5" cy="7" r="1.5" fill="#b4b4b4"/></svg></div><div class="sw" style="background:#c8c8c8"></div><div class="cb"></div><div class="add"></div></div>
<div class="row" style="top:141px"><div class="nm">ceiling</div><div class="vis"><svg viewBox="0 0 19 14"><path d="M1.8 7 Q9.5 -1.6 17.2 7 Q9.5 15.6 1.8 7Z" fill="#e2e2e2"/><circle cx="9.5" cy="7" r="3.1" fill="#8a8a8a"/><circle cx="9.5" cy="7" r="1.5" fill="#b4b4b4"/></svg></div><div class="sw" style="background:#00a0ff"></div><div class="cb"></div><div class="add"></div></div>
<div class="row" style="top:171px"><div class="nm">floor</div><div class="vis"><svg viewBox="0 0 19 14"><path d="M1.8 7 Q9.5 -1.6 17.2 7 Q9.5 15.6 1.8 7Z" fill="#e2e2e2"/><circle cx="9.5" cy="7" r="3.1" fill="#8a8a8a"/><circle cx="9.5" cy="7" r="1.5" fill="#b4b4b4"/></svg></div><div class="sw" style="background:#00a880"></div><div class="cb"></div><div class="add"></div></div>
<div class="row" style="top:201px"><div class="nm">door</div><div class="vis"><svg viewBox="0 0 19 14"><path d="M1.8 7 Q9.5 -1.6 17.2 7 Q9.5 15.6 1.8 7Z" fill="#e2e2e2"/><circle cx="9.5" cy="7" r="3.1" fill="#8a8a8a"/><circle cx="9.5" cy="7" r="1.5" fill="#b4b4b4"/></svg></div><div class="sw" style="background:#a80000"></div><div class="cb"></div><div class="add"></div></div>
<div class="row" style="top:231px"><div class="nm">window</div><div class="vis"><svg viewBox="0 0 19 14"><path d="M1.8 7 Q9.5 -1.6 17.2 7 Q9.5 15.6 1.8 7Z" fill="#e2e2e2"/><circle cx="9.5" cy="7" r="3.1" fill="#8a8a8a"/><circle cx="9.5" cy="7" r="1.5" fill="#b4b4b4"/></svg></div><div class="sw" style="background:#9600dc"></div><div class="cb"></div><div class="add"></div></div>
<div class="row" style="top:261px"><div class="nm">stairs</div><div class="vis"><svg viewBox="0 0 19 14"><path d="M1.8 7 Q9.5 -1.6 17.2 7 Q9.5 15.6 1.8 7Z" fill="#e2e2e2"/><circle cx="9.5" cy="7" r="3.1" fill="#8a8a8a"/><circle cx="9.5" cy="7" r="1.5" fill="#b4b4b4"/></svg></div><div class="sw" style="background:#005500"></div><div class="cb"></div><div class="add"></div></div>
<div class="row" style="top:291px"><div class="nm">column</div><div class="vis"><svg viewBox="0 0 19 14"><path d="M1.8 7 Q9.5 -1.6 17.2 7 Q9.5 15.6 1.8 7Z" fill="#e2e2e2"/><circle cx="9.5" cy="7" r="3.1" fill="#8a8a8a"/><circle cx="9.5" cy="7" r="1.5" fill="#b4b4b4"/></svg></div><div class="sw" style="background:#808080"></div><div class="cb"></div><div class="add"></div></div>
<div class="row" style="top:321px"><div class="nm">beam</div><div class="vis"><svg viewBox="0 0 19 14"><path d="M1.8 7 Q9.5 -1.6 17.2 7 Q9.5 15.6 1.8 7Z" fill="#e2e2e2"/><circle cx="9.5" cy="7" r="3.1" fill="#8a8a8a"/><circle cx="9.5" cy="7" r="1.5" fill="#b4b4b4"/></svg></div><div class="sw" style="background:#996666"></div><div class="cb"></div><div class="add"></div></div>
<div class="row" style="top:351px"><div class="nm"></div><div class="vis"><svg viewBox="0 0 19 14"><path d="M1.8 7 Q9.5 -1.6 17.2 7 Q9.5 15.6 1.8 7Z" fill="#e2e2e2"/><circle cx="9.5" cy="7" r="3.1" fill="#8a8a8a"/><circle cx="9.5" cy="7" r="1.5" fill="#b4b4b4"/></svg></div><div class="sw" style="background:#1428a0"></div><div class="cb"></div><div class="add"></div></div>
<div class="abs" style="left:315px;top:1px;width:10px;height:10px;border:1px solid #b8b8b8;background:#3c3c3c"><div class="abs" style="left:2px;top:1.5px;border:3px solid transparent;border-bottom:3.5px solid #e0e0e0;border-top:0"></div></div>
<div class="abs" style="left:315px;top:15px;width:9px;height:82px;border:1.5px solid #c4c4c4;background:#3c3c3c"></div>
<div class="abs" style="left:315px;top:345px;width:10px;height:10px;border:1px solid #b8b8b8;background:#3c3c3c"><div class="abs" style="left:2px;top:4px;border:3px solid transparent;border-top:3.5px solid #e0e0e0;border-bottom:0"></div></div>
</div>
<div class="btn" style="left:11px;top:408px;width:139px;line-height:20px">Classification Manager</div>
<div class="btn" style="left:159.5px;top:408px;width:94px;line-height:20px">Reload Classes</div>
<div class="btn" style="left:313px;top:436px;width:25.5px;height:21px;line-height:22px">OK</div>
</div>
</body>
</html>
